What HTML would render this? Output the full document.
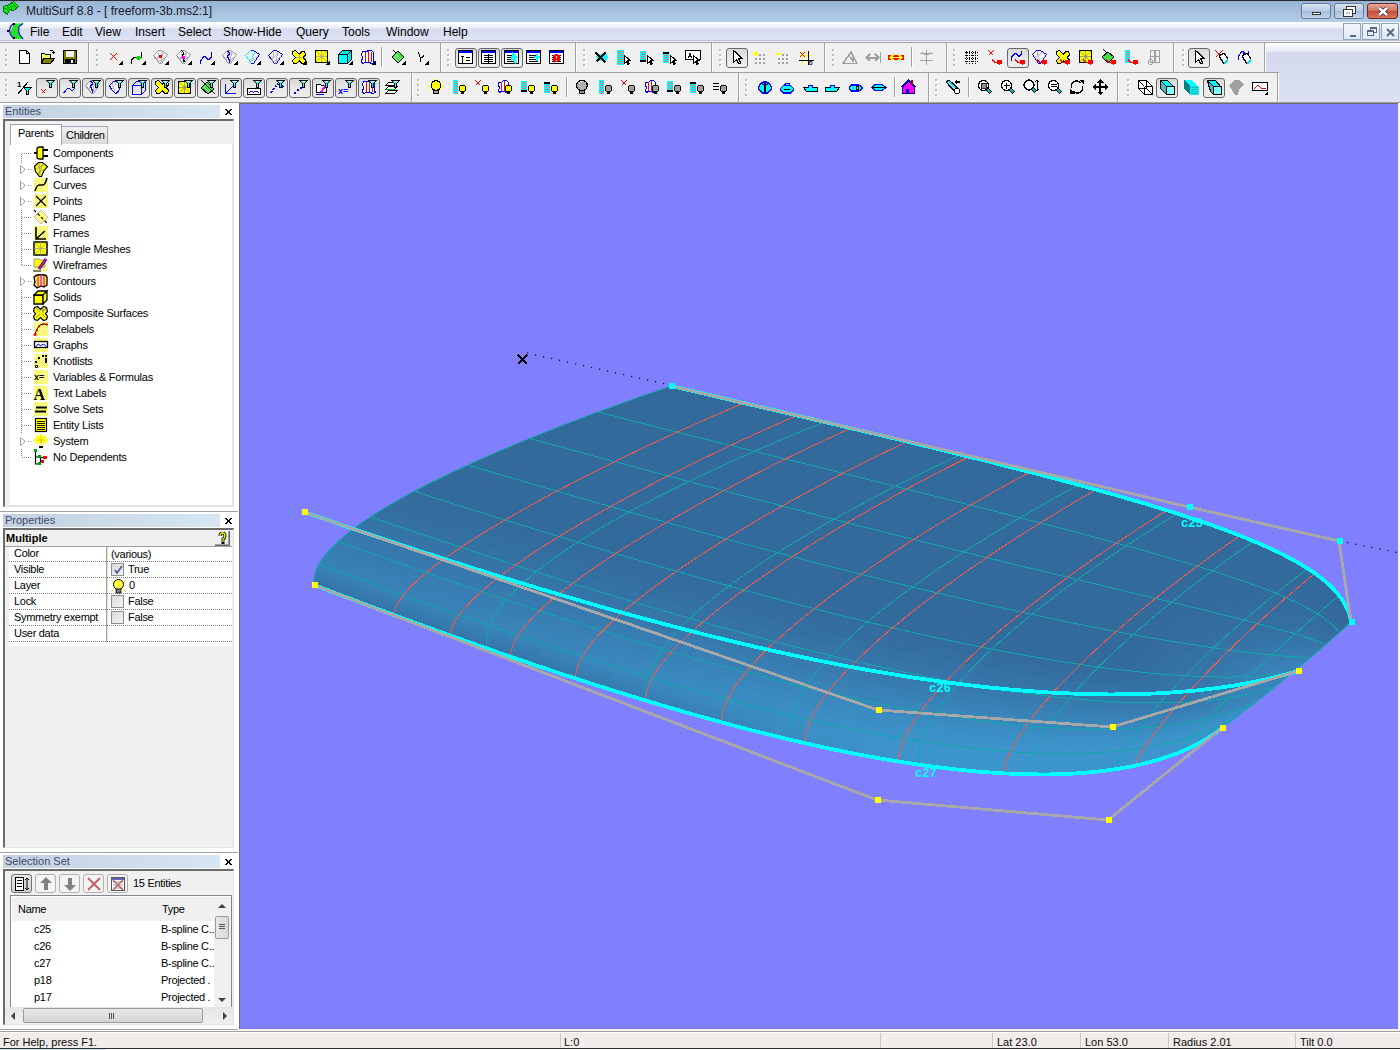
<!DOCTYPE html><html><head><meta charset="utf-8"><style>
*{margin:0;padding:0;box-sizing:border-box}
html,body{width:1400px;height:1050px;overflow:hidden;background:#f0f0f0;font-family:"Liberation Sans",sans-serif;font-size:12px;color:#000;position:relative}
.a{position:absolute}
#title{left:0;top:0;width:1400px;height:22px;background:linear-gradient(#98b4d4,#b4cde8);border-top:1px solid #2a2a2a}
#title .t{left:26px;top:3px;font-size:12px;color:#1a1a2a;white-space:nowrap}
#menu{left:0;top:22px;width:1400px;height:18px;background:linear-gradient(#ffffff 0,#e9edf7 6px,#d6dbee 7px,#dde3f4 18px)}
#menu span{position:absolute;top:3px;font-size:12px;color:#000}
#lines{left:0;top:40px;width:1400px;height:3px;background:linear-gradient(#b8c0d4 0,#b8c0d4 1px,#f4f4f4 1px,#f4f4f4 2px,#a0a0a0 2px)}
#rebar{left:0;top:43px;width:1400px;height:60px;background:linear-gradient(#ffffff 0,#e8ebf6 8px,#d5d9ee 10px,#dbe0f2 58px)}
.tbg{position:absolute;background:#f0f0f0}
.hl{position:absolute;left:0;height:1px;background:#a0a0a0}
.vl{position:absolute;width:1px;background:#a0a0a0;box-shadow:1px 0 0 #fff}
.sp{position:absolute;width:1px;height:20px;background:#a0a0a0;box-shadow:1px 0 0 #fff}
.gr{position:absolute;width:2px;height:2px;background:#bcbcbc;box-shadow:0 5px 0 #bcbcbc,0 10px 0 #bcbcbc,0 15px 0 #bcbcbc,1px 1px 0 #fff,1px 6px 0 #fff,1px 11px 0 #fff,1px 16px 0 #fff}
.pb{position:absolute;width:22px;height:20px;border:1px solid #676767;border-radius:3px;background:linear-gradient(#d8d8d8,#e6e6e6 45%,#eeeeee)}
#view{left:239px;top:103px;width:1159px;height:926px;background:#8080ff;border-left:1px solid #6d6d6d;border-top:1px solid #6d6d6d}
#vbg{left:239px;top:103px;width:1161px;height:928px;background:#f4f3ee}
#left{left:0;top:103px;width:239px;height:928px;background:#fff}
.ph{position:absolute;left:3px;width:217px;height:13px;background:linear-gradient(90deg,#c2d0e0,#d8e5f3);color:#3c4a6a;font-size:11px;line-height:13px;padding-left:2px}
.px{position:absolute;left:225px;width:7px;height:6px}
.fr{position:absolute;left:3px;width:231px;border-left:2px solid #6b6b6b;border-top:2px solid #6b6b6b;border-right:1px solid #e3e3e3;border-bottom:1px solid #e3e3e3;background:#f0f0f0}
.ti{position:absolute;left:53px;height:16px;line-height:16px;font-size:11px;letter-spacing:-0.22px;white-space:nowrap}
.dh{position:absolute;height:1px;background:repeating-linear-gradient(90deg,#808080 0 1px,transparent 1px 2px)}
.dv{position:absolute;width:1px;background:repeating-linear-gradient(#808080 0 1px,transparent 1px 2px)}
.t11{font-size:11px;letter-spacing:-0.3px;white-space:nowrap;position:absolute}
#status{left:0;top:1031px;width:1400px;height:19px;background:#f0edeb;border-top:1px solid #a0a0a0;box-shadow:inset 0 1px 0 #fff}
#status span{position:absolute;top:4px;font-size:11px;white-space:nowrap;color:#100808}
#status i{position:absolute;top:1px;width:1px;height:16px;background:#c8c8c8}
</style></head><body><svg width="0" height="0" style="position:absolute"><defs><pattern id="ck" width="2" height="2" patternUnits="userSpaceOnUse"><rect width="2" height="2" fill="#ffff00"/><rect width="1" height="1" fill="#fff"/><rect x="1" y="1" width="1" height="1" fill="#fff"/></pattern></defs></svg><div id="title" class="a">
<svg class="a" style="left:0;top:-1px" width="20" height="18" viewBox="0 0 20 18" shape-rendering="crispEdges"><path d="M3.5 6.5l6-2 4-3 5 5-5 4-4-1-2 5-4-3z" fill="#00ff00" stroke="#007000"/><path d="M6 5l3 4M9 4l3 5M12 2l3 6M4 9l12-4M6 12l3-4" stroke="#008000" stroke-width=".8"/></svg>
<div class="t a">MultiSurf 8.8 - [ freeform-3b.ms2:1]</div>
<div class="a" style="left:1301px;top:2px;width:30px;height:16px;border:1px solid #6a7a94;border-radius:3px;background:linear-gradient(#d7e3f1,#b7cbe3 50%,#a5bcd9 51%,#c2d5ec)"><div class="a" style="left:10px;top:8px;width:9px;height:3px;background:#fff;border:1px solid #333"></div></div>
<div class="a" style="left:1334px;top:2px;width:30px;height:16px;border:1px solid #6a7a94;border-radius:3px;background:linear-gradient(#d7e3f1,#b7cbe3 50%,#a5bcd9 51%,#c2d5ec)"><div class="a" style="left:12px;top:3px;width:8px;height:6px;border:2px solid #fff;outline:1px solid #333"></div><div class="a" style="left:9px;top:6px;width:8px;height:6px;border:2px solid #fff;outline:1px solid #333;background:#b7cbe3"></div></div>
<div class="a" style="left:1367px;top:2px;width:31px;height:16px;border:1px solid #6b2a22;border-radius:3px;background:linear-gradient(#e8a597,#d2705f 50%,#c24a33 51%,#d8775e)"><svg class="a" style="left:9px;top:2px" width="12" height="11"><path d="M2 2l8 7M10 2l-8 7" stroke="#333" stroke-width="4"/><path d="M2 2l8 7M10 2l-8 7" stroke="#fff" stroke-width="2.4"/></svg></div>
</div>
<div id="menu" class="a">
<svg class="a" style="left:6px;top:0" width="18" height="18" viewBox="0 0 18 18"><path d="M7.5 1.5h10l-4 3-.5 4.5 1 3.5 3.5 4.5h-10l-3-6z" fill="#00ff00"/><path d="M7.5 1.5l-3 3-1 4 1 4 3 4M17 1.5l-4 3-.5 4.5 1 3.5 3.5 4.5" fill="none" stroke="#0000ff" stroke-width="1.2"/><path d="M10 2v15M5 9h9M6 5h8M6 13h8" stroke="#909090" stroke-width=".7"/><rect x="7" y="1" width="2" height="2" fill="#000"/><rect x="1" y="8" width="2" height="2" fill="#000"/><rect x="7" y="15" width="2" height="2" fill="#000"/></svg>
<span style="left:30px">File</span><span style="left:62px">Edit</span><span style="left:95px">View</span><span style="left:135px">Insert</span><span style="left:178px">Select</span><span style="left:223px">Show-Hide</span><span style="left:296px">Query</span><span style="left:342px">Tools</span><span style="left:386px">Window</span><span style="left:443px">Help</span>
<div class="a" style="left:1343px;top:1px;width:18px;height:17px;border:1px solid #8fa3bd;background:linear-gradient(#f2f7fc,#dfe9f6)"><div class="a" style="left:6px;top:11px;width:6px;height:2px;background:#5a6a7e"></div></div>
<div class="a" style="left:1362px;top:1px;width:18px;height:17px;border:1px solid #8fa3bd;background:linear-gradient(#f2f7fc,#dfe9f6)"><div class="a" style="left:7px;top:3px;width:7px;height:6px;border:1px solid #5a6a7e;border-top-width:2px"></div><div class="a" style="left:4px;top:6px;width:7px;height:6px;border:1px solid #5a6a7e;border-top-width:2px;background:#e6eaf5"></div></div>
<div class="a" style="left:1381px;top:1px;width:18px;height:17px;border:1px solid #8fa3bd;background:linear-gradient(#f2f7fc,#dfe9f6)"><svg class="a" style="left:4px;top:4px" width="9" height="9"><path d="M1 1l7 7M8 1l-7 7" stroke="#5a6a7e" stroke-width="2"/></svg></div>
</div>
<div id="lines" class="a"></div>
<div id="rebar" class="a"></div>
<div class="tbg" style="left:0;top:43px;width:1264px;height:29px"></div><div class="tbg" style="left:0;top:73px;width:1278px;height:29px"></div><div class="hl" style="top:72px;width:1279px"></div><div class="hl" style="top:102px;width:1400px"></div><div class="gr" style="left:5px;top:49px"></div><svg class="a" style="left:16px;top:49px" width="16" height="16" viewBox="0 0 16 16" shape-rendering="crispEdges"><path d="M3.5 1.5h7l3 3v10h-10z" fill="#fff" stroke="#000" stroke-width="1.3"/><path d="M10.5 1.5v3h3" fill="none" stroke="#000"/></svg><svg class="a" style="left:40px;top:49px" width="16" height="16" viewBox="0 0 16 16" shape-rendering="crispEdges"><path d="M1.5 4.5h3l1 1h5v9h-9z" fill="#ffff60" stroke="#000" stroke-width="1.2"/><path d="M3.5 9.5h11l-4 5h-9z" fill="#808000" stroke="#000" stroke-width="1.2"/><path d="M9.5 2.5q2-2 4 0v2" fill="none" stroke="#000" stroke-width="1.2"/><path d="M12 3h3l-1.5 2z" fill="#000"/></svg><svg class="a" style="left:62px;top:49px" width="16" height="16" viewBox="0 0 16 16" shape-rendering="crispEdges"><rect x="1.5" y="1.5" width="13" height="13" fill="#808000" stroke="#000" stroke-width="1.3"/><rect x="4" y="2" width="8" height="6" fill="#f0f0f0"/><rect x="3" y="10" width="10" height="5" fill="#000"/><rect x="9" y="11" width="2" height="3" fill="#fff"/></svg><div class="vl" style="left:88px;top:43px;height:29px"></div><div class="gr" style="left:96px;top:49px"></div><svg class="a" style="left:107px;top:49px" width="16" height="16" viewBox="0 0 16 16" shape-rendering="crispEdges"><path d="M3 4l7 7M10 4l-7 7" stroke="#ff0000" stroke-width="1.2"/><path d="M11 16h5v-5z" fill="#000"/></svg><svg class="a" style="left:130px;top:49px" width="16" height="16" viewBox="0 0 16 16" shape-rendering="crispEdges"><path d="M1.5 14.5v-3l2-3h2l2 2h2l2-3v-5" fill="none" stroke="#000" stroke-width="1.3"/><circle cx="8.5" cy="9" r="2.2" fill="#00e000"/><path d="M11 16h5v-5z" fill="#000"/></svg><svg class="a" style="left:153px;top:49px" width="16" height="16" viewBox="0 0 16 16" shape-rendering="crispEdges"><path d="M0.5 6.5 L5.5 1.5 H8.5 L14.5 5.5 L8.5 14.5 H6.5 Z" fill="#f4f4f4" stroke="#999"/><path d="M2.5 9.5 L10.5 3.5 M4.5 12.5 L12.5 7.5 M5.5 2.5 L4.5 12.5 M9.5 2.5 L7.5 14.5" fill="none" stroke="#aaa" stroke-width=".8"/><rect x="6" y="6" width="3" height="3" fill="#ff0000"/><path d="M11 16h5v-5z" fill="#000"/></svg><svg class="a" style="left:176px;top:49px" width="16" height="16" viewBox="0 0 16 16" shape-rendering="crispEdges"><path d="M0.5 6.5 L5.5 1.5 H8.5 L14.5 5.5 L8.5 14.5 H6.5 Z" fill="#f4f4f4" stroke="#999"/><path d="M2.5 9.5 L10.5 3.5 M4.5 12.5 L12.5 7.5 M5.5 2.5 L4.5 12.5 M9.5 2.5 L7.5 14.5" fill="none" stroke="#aaa" stroke-width=".8"/><path d="M5.5 1.5l2 2-1 4 2 6" fill="none" stroke="#000" stroke-width="1.3"/><circle cx="7.5" cy="8.5" r="2" fill="#ff00ff"/><path d="M11 16h5v-5z" fill="#000"/></svg><svg class="a" style="left:199px;top:49px" width="16" height="16" viewBox="0 0 16 16" shape-rendering="crispEdges"><path d="M1.5 14.5v-2l3-5h2l2 3h2l2-3v-5" fill="none" stroke="#0000ff" stroke-width="1.3"/><path d="M11 16h5v-5z" fill="#000"/></svg><svg class="a" style="left:222px;top:49px" width="16" height="16" viewBox="0 0 16 16" shape-rendering="crispEdges"><path d="M0.5 6.5 L5.5 1.5 H8.5 L14.5 5.5 L8.5 14.5 H6.5 Z" fill="#f4f4f4" stroke="#999"/><path d="M2.5 9.5 L10.5 3.5 M4.5 12.5 L12.5 7.5 M5.5 2.5 L4.5 12.5 M9.5 2.5 L7.5 14.5" fill="none" stroke="#aaa" stroke-width=".8"/><path d="M4.5 2.5h2l1 2-2 3 2 4v2" fill="none" stroke="#0000ff" stroke-width="1.3"/><path d="M11 16h5v-5z" fill="#000"/></svg><svg class="a" style="left:245px;top:49px" width="16" height="16" viewBox="0 0 16 16" shape-rendering="crispEdges"><path d="M0.5 6.5 L5.5 1.5 H8.5 L14.5 5.5 L8.5 14.5 H6.5 Z" fill="#f4f4f4" stroke="#0000ff"/><path d="M0.5 6.5L5.5 1.5M0.5 6.5L6.5 14.5" stroke="#00ffff"/><path d="M9.5 3.5L5.5 13.5" stroke="#00ffff"/><path d="M4.5 12.5L12.5 7.5" stroke="#aaa" stroke-width=".8"/><path d="M11 16h5v-5z" fill="#000"/></svg><svg class="a" style="left:268px;top:49px" width="16" height="16" viewBox="0 0 16 16" shape-rendering="crispEdges"><path d="M0.5 6.5 L5.5 1.5 H8.5 L14.5 5.5 L8.5 14.5 H6.5 Z" fill="#f4f4f4" stroke="#0000ff"/><path d="M2.5 9.5 L10.5 3.5 M4.5 12.5 L12.5 7.5 M5.5 2.5 L4.5 12.5 M9.5 2.5 L7.5 14.5" fill="none" stroke="#aaa" stroke-width=".8"/><path d="M11 16h5v-5z" fill="#000"/></svg><svg class="a" style="left:291px;top:49px" width="16" height="16" viewBox="0 0 16 16" shape-rendering="crispEdges"><path d="M1.5 2.5l3-1 4 4 2-3h3l1 3-2 3 2 3-1 3h-3l-2-3-3 3h-3l-1-3 3-3-3-3z" fill="#ffff00" stroke="#000" stroke-width="1.2"/><path d="M8 5v6M5 8h6" stroke="#999" stroke-width=".8"/><path d="M11 16h5v-5z" fill="#000"/></svg><svg class="a" style="left:314px;top:49px" width="16" height="16" viewBox="0 0 16 16" shape-rendering="crispEdges"><rect x="1.5" y="1.5" width="12" height="12" fill="#ffff00" stroke="#000" stroke-width="1.3"/><path d="M2 2l11 11M13 2L2 13M7.5 2v11M2 7.5h11" stroke="#a0a0a0" stroke-width=".7"/><path d="M11 16h5v-5z" fill="#000"/></svg><svg class="a" style="left:337px;top:49px" width="16" height="16" viewBox="0 0 16 16" shape-rendering="crispEdges"><path d="M1.5 5.5h9v9h-9z" fill="#00ffff" stroke="#000" stroke-width="1.3"/><path d="M1.5 5.5l4-4h9l-4 4zM10.5 5.5l4-4v9l-4 4z" fill="#00e8e8" stroke="#000" stroke-width="1.3"/><path d="M11 16h5v-5z" fill="#000"/></svg><svg class="a" style="left:360px;top:49px" width="16" height="16" viewBox="0 0 16 16" shape-rendering="crispEdges"><path d="M2.5 2.5h4l2-1h3l2 2v8l1 2-3 1-2-1h-4l-3 1-1-2 1-4-1-3z" fill="#fff" stroke="#0000ff" stroke-width="1.2"/><path d="M5.5 3v10M8.5 2v11M11.5 3v10" stroke="#ff0000" stroke-width="1.3"/><path d="M11 16h5v-5z" fill="#000"/></svg><svg class="a" style="left:390px;top:49px" width="16" height="16" viewBox="0 0 16 16" shape-rendering="crispEdges"><path d="M8 2l6 6-6 6-6-6z" fill="#40e040" stroke="#000"/><path d="M5 6l5 5M6 4.5l5 5M4 7.5l5 5" stroke="#c0ffc0" stroke-width=".8"/><path d="M3 1l3 3" stroke="#000"/><path d="M11 16h5v-5z" fill="#000"/></svg><svg class="a" style="left:413px;top:49px" width="16" height="16" viewBox="0 0 16 16" shape-rendering="crispEdges"><path d="M5.5 3.5l2 6 4-3M7.5 9.5v3" stroke="#000" stroke-width="1.2" fill="none"/><path d="M11 16h5v-5z" fill="#000"/></svg><div class="sp" style="left:381px;top:47px"></div><div class="vl" style="left:440px;top:43px;height:29px"></div><div class="gr" style="left:447px;top:49px"></div><div class="pb" style="left:455px;top:48px"></div><svg class="a" style="left:458px;top:49px" width="16" height="16" viewBox="0 0 16 16" shape-rendering="crispEdges"><rect x="0.5" y="1.5" width="14" height="13" fill="#fff" stroke="#000" stroke-width="1.2"/><rect x="1" y="2" width="13" height="2" fill="#0000ff"/><path d="M4.5 7v7M3 7.5h3M5 11h2M8 8.5h4M8 11.5h4" stroke="#000"/><circle cx="6" cy="11" r="1" fill="#ff0"/></svg><div class="pb" style="left:478px;top:48px"></div><svg class="a" style="left:481px;top:49px" width="16" height="16" viewBox="0 0 16 16" shape-rendering="crispEdges"><rect x="0.5" y="1.5" width="14" height="13" fill="#fff" stroke="#000" stroke-width="1.2"/><rect x="1" y="2" width="13" height="2" fill="#0000ff"/><path d="M3 6.5h9M3 8.5h9M3 10.5h9M3 12.5h9M7.5 5v9" stroke="#000"/></svg><div class="pb" style="left:501px;top:48px"></div><svg class="a" style="left:504px;top:49px" width="16" height="16" viewBox="0 0 16 16" shape-rendering="crispEdges"><rect x="0.5" y="1.5" width="14" height="13" fill="#fff" stroke="#000" stroke-width="1.2"/><rect x="1" y="2" width="13" height="2" fill="#0000ff"/><path d="M3 6.5h9M3 8.5h9M3 10.5h9M3 12.5h9" stroke="#000"/><path d="M8 2l6 7-3 0 2 5-2 1-2-5-2 2z" fill="#00ffff"/></svg><svg class="a" style="left:526px;top:49px" width="16" height="16" viewBox="0 0 16 16" shape-rendering="crispEdges"><rect x="0.5" y="1.5" width="14" height="13" fill="#fff" stroke="#000" stroke-width="1.2"/><rect x="1" y="2" width="13" height="2" fill="#0000ff"/><path d="M3 6.5h9M3 8.5h9M3 10.5h9M3 12.5h9" stroke="#000"/><path d="M8 7h2V5h2v2h2v2h-2v3h-2V9H8z" fill="#00ffff"/></svg><svg class="a" style="left:549px;top:49px" width="16" height="16" viewBox="0 0 16 16" shape-rendering="crispEdges"><rect x="0.5" y="1.5" width="14" height="13" fill="#fff" stroke="#000" stroke-width="1.2"/><rect x="1" y="2" width="13" height="2" fill="#0000ff"/><path d="M3 6.5h9M3 8.5h9M3 10.5h9M3 12.5h9" stroke="#000"/><circle cx="7.5" cy="9" r="3.8" fill="#ff0000"/><path d="M7.5 6.5v2.5M7.5 10.5v1" stroke="#fff" stroke-width="1.5"/></svg><div class="vl" style="left:575px;top:43px;height:29px"></div><div class="gr" style="left:583px;top:49px"></div><svg class="a" style="left:594px;top:49px" width="16" height="16" viewBox="0 0 16 16" shape-rendering="crispEdges"><path d="M2 7l3-2h3l2-1 3 1 1 3-1 3-3 1-2-1-3 1-2-2z" fill="#00ffff"/><path d="M1.5 3.5l10 10M11.5 3.5l-9 9" stroke="#000" stroke-width="1.6"/></svg><svg class="a" style="left:616px;top:49px" width="16" height="16" viewBox="0 0 16 16" shape-rendering="crispEdges"><rect x="1" y="1" width="7" height="15" fill="#00ffff"/><rect x="2" y="2" width="6" height="1" fill="#a09898"/><rect x="2" y="4" width="6" height="1" fill="#a09898"/><rect x="2" y="6" width="6" height="1" fill="#a09898"/><rect x="2" y="8" width="6" height="1" fill="#a09898"/><rect x="2" y="10" width="6" height="1" fill="#a09898"/><rect x="2" y="12" width="6" height="1" fill="#a09898"/><rect x="2" y="14" width="6" height="1" fill="#a09898"/><path d="M8.5 6.5v8l2-2 1.5 3 1.2-.6-1.5-3h3z" fill="#fff" stroke="#000" stroke-width="1.1"/></svg><svg class="a" style="left:639px;top:49px" width="16" height="16" viewBox="0 0 16 16" shape-rendering="crispEdges"><rect x="1" y="2" width="6" height="11" fill="#00ffff"/><rect x="2" y="3" width="5" height="1" fill="#a09898"/><rect x="2" y="5" width="5" height="1" fill="#a09898"/><rect x="2" y="7" width="5" height="1" fill="#a09898"/><rect x="2" y="9" width="5" height="1" fill="#a09898"/><rect x="2" y="11" width="5" height="1" fill="#a09898"/><rect x="1" y="11" width="6" height="2" fill="#000"/><path d="M8.5 6.5v8l2-2 1.5 3 1.2-.6-1.5-3h3z" fill="#fff" stroke="#000" stroke-width="1.1"/></svg><svg class="a" style="left:662px;top:49px" width="16" height="16" viewBox="0 0 16 16" shape-rendering="crispEdges"><rect x="1" y="3" width="6" height="11" fill="#00ffff"/><rect x="2" y="4" width="5" height="1" fill="#a09898"/><rect x="2" y="6" width="5" height="1" fill="#a09898"/><rect x="2" y="8" width="5" height="1" fill="#a09898"/><rect x="2" y="10" width="5" height="1" fill="#a09898"/><rect x="2" y="12" width="5" height="1" fill="#a09898"/><rect x="1" y="3" width="6" height="2" fill="#000"/><path d="M8.5 6.5v8l2-2 1.5 3 1.2-.6-1.5-3h3z" fill="#fff" stroke="#000" stroke-width="1.1"/></svg><svg class="a" style="left:685px;top:49px" width="16" height="16" viewBox="0 0 16 16" shape-rendering="crispEdges"><rect x="0.5" y="1.5" width="15" height="9" fill="#fff" stroke="#000" stroke-width="1.2"/><path d="M3 9l2-5 2 5M3.5 7.5h3" fill="none" stroke="#000" stroke-width=".9"/><path d="M8.5 6.5v8l2-2 1.5 3 1.2-.6-1.5-3h3z" fill="#fff" stroke="#000" stroke-width="1.1"/></svg><div class="vl" style="left:711px;top:43px;height:29px"></div><div class="gr" style="left:719px;top:49px"></div><div class="pb" style="left:726px;top:48px"></div><svg class="a" style="left:729px;top:49px" width="16" height="16" viewBox="0 0 16 16" shape-rendering="crispEdges"><path d="M4.5 1.5v12l3-3 2.5 4.5 2-1-2.5-4.5h4z" fill="#fff" stroke="#000" stroke-width="1.3"/></svg><svg class="a" style="left:752px;top:49px" width="16" height="16" viewBox="0 0 16 16" shape-rendering="crispEdges"><g fill="#a0a0a0"><rect x="7" y="5" width="2" height="2"/><rect x="11" y="5" width="2" height="2"/><rect x="3" y="9" width="2" height="2"/><rect x="7" y="9" width="2" height="2"/><rect x="11" y="9" width="2" height="2"/><rect x="3" y="13" width="2" height="2"/><rect x="7" y="13" width="2" height="2"/><rect x="11" y="13" width="2" height="2"/></g><path d="M1 4.5h5M3.5 2v5" stroke="#ffff00" stroke-width="2"/></svg><svg class="a" style="left:775px;top:49px" width="16" height="16" viewBox="0 0 16 16" shape-rendering="crispEdges"><g fill="#a0a0a0"><rect x="7" y="5" width="2" height="2"/><rect x="11" y="5" width="2" height="2"/><rect x="3" y="9" width="2" height="2"/><rect x="7" y="9" width="2" height="2"/><rect x="11" y="9" width="2" height="2"/><rect x="3" y="13" width="2" height="2"/><rect x="7" y="13" width="2" height="2"/><rect x="11" y="13" width="2" height="2"/></g><path d="M1 4.5h5" stroke="#ffff00" stroke-width="2"/></svg><svg class="a" style="left:798px;top:49px" width="16" height="16" viewBox="0 0 16 16" shape-rendering="crispEdges"><path d="M1 6.5h13M4.5 2v14" stroke="#ffff00" stroke-width="1.2"/><path d="M1 11.5h15M10.5 2v14" stroke="#000" stroke-width="1.2"/><path d="M2 3l5 5M7 3L2 8" stroke="#ff0000"/><text x="11" y="16" font-size="5" font-weight="bold" font-family="Liberation Sans">D</text></svg><div class="vl" style="left:824px;top:43px;height:29px"></div><div class="gr" style="left:832px;top:49px"></div><svg class="a" style="left:842px;top:49px" width="16" height="16" viewBox="0 0 16 16" shape-rendering="crispEdges"><path d="M1 14.5h14L9 3z" fill="none" stroke="#a0a0a0" stroke-width="1.6"/><path d="M7 7l6 3-2 4" fill="#a0a0a0"/></svg><svg class="a" style="left:865px;top:49px" width="16" height="16" viewBox="0 0 16 16" shape-rendering="crispEdges"><path d="M2 8.5h11M5 5l-3.5 3.5 3.5 3.5M10 5l3.5 3.5-3.5 3.5M15.5 3v11" stroke="#a0a0a0" stroke-width="2" fill="none"/></svg><svg class="a" style="left:888px;top:49px" width="16" height="16" viewBox="0 0 16 16" shape-rendering="crispEdges"><rect x="0" y="6" width="16" height="5" fill="#ff0000"/><path d="M3 8.5h10M5.5 5.5l-3 3 3 3M10.5 5.5l3 3-3 3" stroke="#ffff00" stroke-width="1.8" fill="none"/></svg><svg class="a" style="left:918px;top:49px" width="16" height="16" viewBox="0 0 16 16" shape-rendering="crispEdges"><path d="M8.5 1v15M2 4.5h13M2 11.5h13M4 3q4 6 9 0" stroke="#a0a0a0" fill="none" stroke-width="1.2"/></svg><div class="sp" style="left:911px;top:47px"></div><div class="vl" style="left:946px;top:43px;height:29px"></div><div class="gr" style="left:953px;top:49px"></div><svg class="a" style="left:963px;top:49px" width="16" height="16" viewBox="0 0 16 16" shape-rendering="crispEdges"><path d="M3.5 2v13M6.5 2v13M9.5 2v13M12.5 2v13M2 3.5h13M2 6.5h13M2 9.5h13M2 12.5h13" stroke="#000" stroke-dasharray="1 1"/><g fill="#000"><rect x="3" y="3" width="1" height="1"/></g></svg><svg class="a" style="left:987px;top:49px" width="16" height="16" viewBox="0 0 16 16" shape-rendering="crispEdges"><path d="M1.5 1.5l5 5M6.5 1.5l-5 5" stroke="#ff0000"/><path d="M5.5 10.5q1 3 4 3" fill="none" stroke="#ff0000"/><ellipse cx="12.5" cy="13" rx="3" ry="2.5" fill="#ff0000"/></svg><div class="pb" style="left:1007px;top:48px"></div><svg class="a" style="left:1010px;top:49px" width="16" height="16" viewBox="0 0 16 16" shape-rendering="crispEdges"><path d="M1.5 11.5v-3l3-4h2l1 2 2 1 2-3v-3" fill="none" stroke="#0000ff" stroke-width="1.3"/><path d="M5.5 10.5q1 3 4 3" fill="none" stroke="#ff0000"/><ellipse cx="12.5" cy="13" rx="3" ry="2.5" fill="#ff0000"/></svg><svg class="a" style="left:1032px;top:49px" width="16" height="16" viewBox="0 0 16 16" shape-rendering="crispEdges"><path d="M0.5 5.5L4.5 1.5H8.5L14.5 5.5L8.5 14.5H6.5Z" fill="#f4f4f4" stroke="#0000ff"/><path d="M3 8l8-5M5 2l3 12" stroke="#aaa" stroke-width=".8"/><path d="M5.5 10.5q1 3 4 3" fill="none" stroke="#ff0000"/><ellipse cx="12.5" cy="13" rx="3" ry="2.5" fill="#ff0000"/></svg><svg class="a" style="left:1055px;top:49px" width="16" height="16" viewBox="0 0 16 16" shape-rendering="crispEdges"><path d="M1.5 2.5l3-1 4 4 2-3h3l1 3-2 3 2 3-1 3h-3l-2-3-3 3h-3l-1-3 3-3-3-3z" fill="#ffff00" stroke="#000" stroke-width="1.2"/><path d="M5.5 10.5q1 3 4 3" fill="none" stroke="#ff0000"/><ellipse cx="12.5" cy="13" rx="3" ry="2.5" fill="#ff0000"/></svg><svg class="a" style="left:1078px;top:49px" width="16" height="16" viewBox="0 0 16 16" shape-rendering="crispEdges"><rect x="1.5" y="1.5" width="12" height="12" fill="#ffff00" stroke="#000" stroke-width="1.4"/><path d="M2 2l11 11M13 2L2 13M7.5 2v11M2 7.5h11" stroke="#808080" stroke-width=".7"/><path d="M5.5 10.5q1 3 4 3" fill="none" stroke="#ff0000"/><ellipse cx="12.5" cy="13" rx="3" ry="2.5" fill="#ff0000"/></svg><svg class="a" style="left:1101px;top:49px" width="16" height="16" viewBox="0 0 16 16" shape-rendering="crispEdges"><path d="M7 3l6 5-6 6-6-6z" fill="#40e040" stroke="#000"/><path d="M2 0l4 4" stroke="#000"/><path d="M5.5 10.5q1 3 4 3" fill="none" stroke="#ff0000"/><ellipse cx="12.5" cy="13" rx="3" ry="2.5" fill="#ff0000"/></svg><svg class="a" style="left:1123px;top:49px" width="16" height="16" viewBox="0 0 16 16" shape-rendering="crispEdges"><rect x="2" y="1" width="5" height="13" fill="#00ffff"/><rect x="3" y="2" width="4" height="1" fill="#a09898"/><rect x="3" y="4" width="4" height="1" fill="#a09898"/><rect x="3" y="6" width="4" height="1" fill="#a09898"/><rect x="3" y="8" width="4" height="1" fill="#a09898"/><rect x="3" y="10" width="4" height="1" fill="#a09898"/><rect x="3" y="12" width="4" height="1" fill="#a09898"/><path d="M5.5 10.5q1 3 4 3" fill="none" stroke="#ff0000"/><ellipse cx="12.5" cy="13" rx="3" ry="2.5" fill="#ff0000"/></svg><svg class="a" style="left:1146px;top:49px" width="16" height="16" viewBox="0 0 16 16" shape-rendering="crispEdges"><path d="M4.5 1.5h9v12h-9zM9 2v11M5 7.5h8" stroke="#a0a0a0" fill="none" stroke-width="1.2"/><circle cx="4.5" cy="13" r="2.5" fill="none" stroke="#a0a0a0"/></svg><div class="vl" style="left:1173px;top:43px;height:29px"></div><div class="gr" style="left:1182px;top:49px"></div><div class="pb" style="left:1188px;top:48px"></div><svg class="a" style="left:1191px;top:49px" width="16" height="16" viewBox="0 0 16 16" shape-rendering="crispEdges"><path d="M4.5 1.5v12l3-3 2.5 4.5 2-1-2.5-4.5h4z" fill="#fff" stroke="#000" stroke-width="1.3"/></svg><svg class="a" style="left:1214px;top:49px" width="16" height="16" viewBox="0 0 16 16" shape-rendering="crispEdges"><path d="M1.5 1.5l7 7M8.5 1.5l-7 7" stroke="#ff0000" stroke-width="1.1"/><path d="M5 7l5-3 4 6-4 5z" fill="#fff" stroke="#000" stroke-width="1.2"/><path d="M9 14l5-5v3l-3 3z" fill="#00e0e0"/></svg><svg class="a" style="left:1237px;top:49px" width="16" height="16" viewBox="0 0 16 16" shape-rendering="crispEdges"><path d="M1.5 10.5v-3l3-5h2l1 3 2 1 2-3v-2" stroke="#0000ff" stroke-width="1.3" fill="none"/><path d="M5 7l5-3 4 6-4 5z" fill="#fff" stroke="#000" stroke-width="1.2"/><path d="M9 14l5-5v3l-3 3z" fill="#00e0e0"/></svg><div class="vl" style="left:1264px;top:43px;height:29px"></div><div class="gr" style="left:5px;top:79px"></div><svg class="a" style="left:16px;top:79px" width="16" height="16" viewBox="0 0 16 16" shape-rendering="crispEdges"><text x="1" y="8" font-size="8" font-weight="bold" font-family="Liberation Sans">1</text><path d="M1.5 15.5L11.5 3.5" stroke="#000" stroke-width="1.1"/><path d="M7.5 8.5h8l-3 3v4h-2v-4z" fill="#00ffff" stroke="#000" stroke-width="1.4"/></svg><div class="pb" style="left:36px;top:78px"></div><svg class="a" style="left:39px;top:79px" width="16" height="16" viewBox="0 0 16 16" shape-rendering="crispEdges"><path d="M2.5 10.5l4 4M6.5 10.5l-4 4" stroke="#ff0000"/><path d="M7.5 1.5h8l-3 3v4h-2v-4z" fill="#00ffff" stroke="#000" stroke-width="1.4"/><path d="M10 2.5h3" stroke="#fff"/></svg><div class="pb" style="left:59px;top:78px"></div><svg class="a" style="left:62px;top:79px" width="16" height="16" viewBox="0 0 16 16" shape-rendering="crispEdges"><path d="M1.5 14.5l2-3 2-2h2l2 2h1l2-2v-3" fill="none" stroke="#0000ff" stroke-width="1.3"/><path d="M7.5 1.5h8l-3 3v4h-2v-4z" fill="#00ffff" stroke="#000" stroke-width="1.4"/><path d="M10 2.5h3" stroke="#fff"/></svg><div class="pb" style="left:82px;top:78px"></div><svg class="a" style="left:85px;top:79px" width="16" height="16" viewBox="0 0 16 16" shape-rendering="crispEdges"><path d="M0.5 6.5 L5.5 1.5 H8.5 L14.5 5.5 L8.5 14.5 H6.5 Z" fill="#f4f4f4" stroke="#999"/><path d="M2.5 9.5 L10.5 3.5 M4.5 12.5 L12.5 7.5 M5.5 2.5 L4.5 12.5 M9.5 2.5 L7.5 14.5" fill="none" stroke="#aaa" stroke-width=".8"/><path d="M4.5 2.5h2l1 2-2 3 2 4v2" fill="none" stroke="#0000ff" stroke-width="1.3"/><path d="M7.5 1.5h8l-3 3v4h-2v-4z" fill="#00ffff" stroke="#000" stroke-width="1.4"/><path d="M10 2.5h3" stroke="#fff"/></svg><div class="pb" style="left:105px;top:78px"></div><svg class="a" style="left:108px;top:79px" width="16" height="16" viewBox="0 0 16 16" shape-rendering="crispEdges"><path d="M1.5 6.5l4-4h5l2 4-2 6-3 2-4-4z" fill="#f4f4f4" stroke="#0000ff" stroke-width="1.2"/><path d="M4 4l3 9M9 3L4 10" stroke="#aaa" stroke-width=".8"/><path d="M7.5 1.5h8l-3 3v4h-2v-4z" fill="#00ffff" stroke="#000" stroke-width="1.4"/><path d="M10 2.5h3" stroke="#fff"/></svg><div class="pb" style="left:128px;top:78px"></div><svg class="a" style="left:131px;top:79px" width="16" height="16" viewBox="0 0 16 16" shape-rendering="crispEdges"><path d="M1.5 6.5h9v9h-9zM1.5 6.5l4-4h9l-4 4M10.5 15.5l4-4v-9" fill="none" stroke="#0000ff" stroke-width="1.2"/><path d="M7.5 1.5h8l-3 3v4h-2v-4z" fill="#00ffff" stroke="#000" stroke-width="1.4"/><path d="M10 2.5h3" stroke="#fff"/></svg><div class="pb" style="left:151px;top:78px"></div><svg class="a" style="left:154px;top:79px" width="16" height="16" viewBox="0 0 16 16" shape-rendering="crispEdges"><path d="M1.5 2.5l3-1 4 4 2-3h3l1 3-2 3 2 3-1 3h-3l-2-3-3 3h-3l-1-3 3-3-3-3z" fill="#ffff00" stroke="#000" stroke-width="1.2"/><path d="M7.5 1.5h8l-3 3v4h-2v-4z" fill="#00ffff" stroke="#000" stroke-width="1.4"/><path d="M10 2.5h3" stroke="#fff"/></svg><div class="pb" style="left:174px;top:78px"></div><svg class="a" style="left:177px;top:79px" width="16" height="16" viewBox="0 0 16 16" shape-rendering="crispEdges"><rect x="1.5" y="2.5" width="12" height="12" fill="#ffff00" stroke="#000" stroke-width="1.4"/><path d="M2 3l11 11M13 3L2 14M7.5 3v11M2 8.5h11" stroke="#808080" stroke-width=".7"/><path d="M7.5 1.5h8l-3 3v4h-2v-4z" fill="#00ffff" stroke="#000" stroke-width="1.4"/><path d="M10 2.5h3" stroke="#fff"/></svg><div class="pb" style="left:197px;top:78px"></div><svg class="a" style="left:200px;top:79px" width="16" height="16" viewBox="0 0 16 16" shape-rendering="crispEdges"><path d="M7 3l7 7-6 5-7-6z" fill="#40e040" stroke="#000"/><path d="M4 8l5 5M6 6l5 5" stroke="#c0ffc0" stroke-width=".8"/><path d="M1 1l14 14" stroke="#000" stroke-width=".9"/><path d="M7.5 1.5h8l-3 3v4h-2v-4z" fill="#00ffff" stroke="#000" stroke-width="1.4"/><path d="M10 2.5h3" stroke="#fff"/></svg><div class="pb" style="left:220px;top:78px"></div><svg class="a" style="left:223px;top:79px" width="16" height="16" viewBox="0 0 16 16" shape-rendering="crispEdges"><path d="M2.5 4.5v10h10M2.5 14.5l7-7" stroke="#0000ff" stroke-width="1.2" fill="none"/><path d="M7.5 1.5h8l-3 3v4h-2v-4z" fill="#00ffff" stroke="#000" stroke-width="1.4"/><path d="M10 2.5h3" stroke="#fff"/></svg><div class="pb" style="left:243px;top:78px"></div><svg class="a" style="left:246px;top:79px" width="16" height="16" viewBox="0 0 16 16" shape-rendering="crispEdges"><rect x="1.5" y="9.5" width="13" height="6" fill="#fff" stroke="#000" stroke-width="1.3"/><path d="M2.5 14.5q3-4 5-1 3-3 6 1" fill="none" stroke="#0000ff"/><path d="M9.5 8.5v1" stroke="#000"/><path d="M7.5 1.5h8l-3 3v4h-2v-4z" fill="#00ffff" stroke="#000" stroke-width="1.4"/><path d="M10 2.5h3" stroke="#fff"/></svg><div class="pb" style="left:266px;top:78px"></div><svg class="a" style="left:269px;top:79px" width="16" height="16" viewBox="0 0 16 16" shape-rendering="crispEdges"><path d="M2 14l1-2M4 11l1-2M6 8l1-1M8 6l1-1M12 7l2 2M14 7l-2 2" stroke="#0000ff" stroke-width="1.8"/><path d="M7.5 1.5h8l-3 3v4h-2v-4z" fill="#00ffff" stroke="#000" stroke-width="1.4"/><path d="M10 2.5h3" stroke="#fff"/></svg><div class="pb" style="left:289px;top:78px"></div><svg class="a" style="left:292px;top:79px" width="16" height="16" viewBox="0 0 16 16" shape-rendering="crispEdges"><rect x="2" y="13" width="2" height="2" fill="#0000ff"/><rect x="5" y="10" width="2" height="2" fill="#0000ff"/><rect x="8" y="8" width="2" height="2" fill="#0000ff"/><path d="M7.5 1.5h8l-3 3v4h-2v-4z" fill="#00ffff" stroke="#000" stroke-width="1.4"/><path d="M10 2.5h3" stroke="#fff"/></svg><div class="pb" style="left:312px;top:78px"></div><svg class="a" style="left:315px;top:79px" width="16" height="16" viewBox="0 0 16 16" shape-rendering="crispEdges"><path d="M1.5 5.5h4l1 1h5v7h-10z" fill="#fff" stroke="#000"/><path d="M6 13l5-7" stroke="#ff00ff" stroke-width="2"/><path d="M1 15.5h8" stroke="#0000ff"/><path d="M7.5 1.5h8l-3 3v4h-2v-4z" fill="#00ffff" stroke="#000" stroke-width="1.4"/><path d="M10 2.5h3" stroke="#fff"/></svg><div class="pb" style="left:335px;top:78px"></div><svg class="a" style="left:338px;top:79px" width="16" height="16" viewBox="0 0 16 16" shape-rendering="crispEdges"><text x="0" y="15" font-size="9" font-weight="bold" fill="#0000ff" font-family="Liberation Sans">x=</text><path d="M7.5 1.5h8l-3 3v4h-2v-4z" fill="#00ffff" stroke="#000" stroke-width="1.4"/><path d="M10 2.5h3" stroke="#fff"/></svg><div class="pb" style="left:358px;top:78px"></div><svg class="a" style="left:361px;top:79px" width="16" height="16" viewBox="0 0 16 16" shape-rendering="crispEdges"><path d="M2.5 2.5h4l2-1h3l2 2v8l1 2-3 1-2-1h-4l-3 1-1-2 1-4-1-3z" fill="#fff" stroke="#0000ff" stroke-width="1.2"/><path d="M5.5 3v10M8.5 2v11M11.5 3v10" stroke="#ff0000" stroke-width="1.3"/><path d="M7.5 1.5h8l-3 3v4h-2v-4z" fill="#00ffff" stroke="#000" stroke-width="1.4"/><path d="M10 2.5h3" stroke="#fff"/></svg><svg class="a" style="left:384px;top:79px" width="16" height="16" viewBox="0 0 16 16" shape-rendering="crispEdges"><path d="M1.5 6.5l3-3h9l-3 3zM1.5 10.5l3-3h9l-3 3zM1.5 14.5l3-3h9l-3 3z" fill="#fff" stroke="#000"/><path d="M2 10.5h9" stroke="#00c000" stroke-width="1.5"/><path d="M7.5 1.5h8l-3 3v4h-2v-4z" fill="#00ffff" stroke="#000" stroke-width="1.4"/><path d="M10 2.5h3" stroke="#fff"/></svg><div class="vl" style="left:411px;top:73px;height:29px"></div><div class="gr" style="left:417px;top:79px"></div><svg class="a" style="left:428px;top:79px" width="16" height="16" viewBox="0 0 16 16" shape-rendering="crispEdges"><path d="M8 0v2M2 2l2 2M14 2l-2 2M0 7h2M14 7h2M2 12l2-2M14 12l-2-2" stroke="#ffff00" stroke-width="1.3"/><circle cx="8" cy="6.5" r="4.8" fill="#ffff00" stroke="#000" stroke-width="1.2"/><path d="M5.5 11.5h5v3h-5z" fill="#a0a0a0" stroke="#000"/></svg><svg class="a" style="left:451px;top:79px" width="16" height="16" viewBox="0 0 16 16" shape-rendering="crispEdges"><rect x="2" y="1" width="5" height="14" fill="#00ffff"/><rect x="3" y="2" width="4" height="1" fill="#a09898"/><rect x="3" y="4" width="4" height="1" fill="#a09898"/><rect x="3" y="6" width="4" height="1" fill="#a09898"/><rect x="3" y="8" width="4" height="1" fill="#a09898"/><rect x="3" y="10" width="4" height="1" fill="#a09898"/><rect x="3" y="12" width="4" height="1" fill="#a09898"/><rect x="3" y="14" width="4" height="1" fill="#a09898"/><circle cx="11.5" cy="9.5" r="3.2" fill="#ffff00" stroke="#000" stroke-width="1"/><rect x="10" y="12.5" width="3" height="2" fill="#000"/></svg><svg class="a" style="left:474px;top:79px" width="16" height="16" viewBox="0 0 16 16" shape-rendering="crispEdges"><path d="M1.5 1.5l5 5M6.5 1.5l-5 5" stroke="#ff0000"/><circle cx="11.5" cy="9.5" r="3.2" fill="#ffff00" stroke="#000" stroke-width="1"/><rect x="10" y="12.5" width="3" height="2" fill="#000"/></svg><svg class="a" style="left:497px;top:79px" width="16" height="16" viewBox="0 0 16 16" shape-rendering="crispEdges"><path d="M1.5 3.5h3l2-2h3l2 2v7l1 2-3 1-2-1h-3l-2 1-1-2 1-3-1-2z" fill="#fff" stroke="#0000ff" stroke-width="1.2"/><path d="M4.5 3v9M7.5 2v11" stroke="#ff0000" stroke-width="1.2"/><circle cx="11.5" cy="9.5" r="3.2" fill="#ffff00" stroke="#000" stroke-width="1"/><rect x="10" y="12.5" width="3" height="2" fill="#000"/></svg><svg class="a" style="left:520px;top:79px" width="16" height="16" viewBox="0 0 16 16" shape-rendering="crispEdges"><rect x="1" y="2" width="6" height="11" fill="#00ffff"/><rect x="2" y="3" width="5" height="1" fill="#a09898"/><rect x="2" y="5" width="5" height="1" fill="#a09898"/><rect x="2" y="7" width="5" height="1" fill="#a09898"/><rect x="2" y="9" width="5" height="1" fill="#a09898"/><rect x="2" y="11" width="5" height="1" fill="#a09898"/><rect x="1" y="11" width="6" height="2" fill="#000"/><circle cx="11.5" cy="9.5" r="3.2" fill="#ffff00" stroke="#000" stroke-width="1"/><rect x="10" y="12.5" width="3" height="2" fill="#000"/></svg><svg class="a" style="left:543px;top:79px" width="16" height="16" viewBox="0 0 16 16" shape-rendering="crispEdges"><rect x="1" y="3" width="6" height="11" fill="#00ffff"/><rect x="2" y="4" width="5" height="1" fill="#a09898"/><rect x="2" y="6" width="5" height="1" fill="#a09898"/><rect x="2" y="8" width="5" height="1" fill="#a09898"/><rect x="2" y="10" width="5" height="1" fill="#a09898"/><rect x="2" y="12" width="5" height="1" fill="#a09898"/><rect x="1" y="3" width="6" height="2" fill="#000"/><circle cx="11.5" cy="9.5" r="3.2" fill="#ffff00" stroke="#000" stroke-width="1"/><rect x="10" y="12.5" width="3" height="2" fill="#000"/></svg><svg class="a" style="left:574px;top:79px" width="16" height="16" viewBox="0 0 16 16" shape-rendering="crispEdges"><circle cx="8" cy="6.5" r="5.3" fill="#b0b0b0" stroke="#000" stroke-width="1.2"/><path d="M5.5 11.5h5v3h-5z" fill="#909090" stroke="#000"/><path d="M5 4q1-2 3-2" stroke="#fff" fill="none"/></svg><svg class="a" style="left:597px;top:79px" width="16" height="16" viewBox="0 0 16 16" shape-rendering="crispEdges"><rect x="2" y="1" width="5" height="14" fill="#00ffff"/><rect x="3" y="2" width="4" height="1" fill="#a09898"/><rect x="3" y="4" width="4" height="1" fill="#a09898"/><rect x="3" y="6" width="4" height="1" fill="#a09898"/><rect x="3" y="8" width="4" height="1" fill="#a09898"/><rect x="3" y="10" width="4" height="1" fill="#a09898"/><rect x="3" y="12" width="4" height="1" fill="#a09898"/><rect x="3" y="14" width="4" height="1" fill="#a09898"/><circle cx="11.5" cy="9.5" r="3.2" fill="#a0a0a0" stroke="#000" stroke-width="1"/><rect x="10" y="12.5" width="3" height="2" fill="#000"/></svg><svg class="a" style="left:620px;top:79px" width="16" height="16" viewBox="0 0 16 16" shape-rendering="crispEdges"><path d="M1.5 1.5l5 5M6.5 1.5l-5 5" stroke="#ff0000"/><circle cx="11.5" cy="9.5" r="3.2" fill="#a0a0a0" stroke="#000" stroke-width="1"/><rect x="10" y="12.5" width="3" height="2" fill="#000"/></svg><svg class="a" style="left:644px;top:79px" width="16" height="16" viewBox="0 0 16 16" shape-rendering="crispEdges"><path d="M1.5 3.5h3l2-2h3l2 2v7l1 2-3 1-2-1h-3l-2 1-1-2 1-3-1-2z" fill="#fff" stroke="#0000ff" stroke-width="1.2"/><path d="M4.5 3v9M7.5 2v11" stroke="#ff0000" stroke-width="1.2"/><circle cx="11.5" cy="9.5" r="3.2" fill="#a0a0a0" stroke="#000" stroke-width="1"/><rect x="10" y="12.5" width="3" height="2" fill="#000"/></svg><svg class="a" style="left:666px;top:79px" width="16" height="16" viewBox="0 0 16 16" shape-rendering="crispEdges"><rect x="1" y="2" width="6" height="11" fill="#00ffff"/><rect x="2" y="3" width="5" height="1" fill="#a09898"/><rect x="2" y="5" width="5" height="1" fill="#a09898"/><rect x="2" y="7" width="5" height="1" fill="#a09898"/><rect x="2" y="9" width="5" height="1" fill="#a09898"/><rect x="2" y="11" width="5" height="1" fill="#a09898"/><rect x="1" y="11" width="6" height="2" fill="#000"/><circle cx="11.5" cy="9.5" r="3.2" fill="#a0a0a0" stroke="#000" stroke-width="1"/><rect x="10" y="12.5" width="3" height="2" fill="#000"/></svg><svg class="a" style="left:689px;top:79px" width="16" height="16" viewBox="0 0 16 16" shape-rendering="crispEdges"><rect x="1" y="3" width="6" height="11" fill="#00ffff"/><rect x="2" y="4" width="5" height="1" fill="#a09898"/><rect x="2" y="6" width="5" height="1" fill="#a09898"/><rect x="2" y="8" width="5" height="1" fill="#a09898"/><rect x="2" y="10" width="5" height="1" fill="#a09898"/><rect x="2" y="12" width="5" height="1" fill="#a09898"/><rect x="1" y="3" width="6" height="2" fill="#000"/><circle cx="11.5" cy="9.5" r="3.2" fill="#a0a0a0" stroke="#000" stroke-width="1"/><rect x="10" y="12.5" width="3" height="2" fill="#000"/></svg><svg class="a" style="left:712px;top:79px" width="16" height="16" viewBox="0 0 16 16" shape-rendering="crispEdges"><path d="M1 4.5h6M1 7.5h6M1 10.5h6" stroke="#000" stroke-width="1.5"/><circle cx="11.5" cy="9.5" r="3.2" fill="#a0a0a0" stroke="#000" stroke-width="1"/><rect x="10" y="12.5" width="3" height="2" fill="#000"/></svg><div class="sp" style="left:566px;top:77px"></div><div class="vl" style="left:738px;top:73px;height:29px"></div><div class="gr" style="left:745px;top:79px"></div><svg class="a" style="left:757px;top:79px" width="16" height="16" viewBox="0 0 16 16" shape-rendering="crispEdges"><path d="M1 9l3-5 2-1h4l2 1 3 5-4 5H5z" fill="#00ffff" stroke="#0000ff" stroke-width="1.2"/><path d="M8 4v10" stroke="#000" stroke-width="1.2"/><path d="M4 4l3 2M12 4l-3 2" stroke="#0000ff"/></svg><svg class="a" style="left:779px;top:79px" width="16" height="16" viewBox="0 0 16 16" shape-rendering="crispEdges"><path d="M1 10l4-4h6l4 4-3 4H4z" fill="#00ffff" stroke="#0000ff" stroke-width="1.2"/><path d="M6 6V4h4v2" fill="#00ffff" stroke="#0000ff"/><path d="M5 10q3 2 6 0" fill="none" stroke="#000" stroke-width="1.1"/></svg><svg class="a" style="left:802px;top:79px" width="16" height="16" viewBox="0 0 16 16" shape-rendering="crispEdges"><path d="M1.5 8.5h14v4h-11z" fill="#00ffff" stroke="#000" stroke-width="1.1"/><path d="M6.5 8.5v-2h4v2" fill="#00ffff" stroke="#0000ff"/></svg><svg class="a" style="left:824px;top:79px" width="16" height="16" viewBox="0 0 16 16" shape-rendering="crispEdges"><path d="M1.5 8.5h14l-3 4h-11z" fill="#00ffff" stroke="#000" stroke-width="1.1"/><path d="M6.5 8.5v-2h4v2" fill="#00ffff" stroke="#0000ff"/></svg><svg class="a" style="left:848px;top:79px" width="16" height="16" viewBox="0 0 16 16" shape-rendering="crispEdges"><path d="M1 9l2-3h8l4 3-4 3H3z" fill="#00ffff" stroke="#0000ff" stroke-width="1.2"/><path d="M8.5 7.5h2v3h-2z" fill="none" stroke="#000"/></svg><svg class="a" style="left:871px;top:79px" width="16" height="16" viewBox="0 0 16 16" shape-rendering="crispEdges"><path d="M1 8.5l3-3h7l4 3-4 3H4z" fill="#00ffff" stroke="#0000ff" stroke-width="1.2"/><path d="M1 8.5h14" stroke="#000" stroke-width="1.1"/></svg><svg class="a" style="left:901px;top:79px" width="16" height="16" viewBox="0 0 16 16" shape-rendering="crispEdges"><path d="M1.5 8.5l6-6 6 6v6h-12z" fill="#ff00ff" stroke="#0000a0" stroke-width="1.2"/><path d="M0.5 8.5l7-7 7 7" fill="none" stroke="#0000a0" stroke-width="1.5"/><rect x="5" y="10" width="3" height="5" fill="#0000a0"/><rect x="10" y="1" width="2" height="5" fill="#a00000"/></svg><div class="sp" style="left:894px;top:77px"></div><div class="vl" style="left:928px;top:73px;height:29px"></div><div class="gr" style="left:935px;top:79px"></div><svg class="a" style="left:945px;top:79px" width="16" height="16" viewBox="0 0 16 16" shape-rendering="crispEdges"><path d="M1 3l3-2 10 9-3 4z" fill="#00e0ff" stroke="#000" stroke-width="1.1"/><path d="M3 3l8 8" stroke="#fff" stroke-width="1.2"/><ellipse cx="12" cy="12" rx="2.5" ry="3" fill="#fff" stroke="#000"/><path d="M10 3h5M12 1l-2 2 2 2" stroke="#000" fill="none" stroke-width="1.1"/></svg><svg class="a" style="left:977px;top:79px" width="16" height="16" viewBox="0 0 16 16" shape-rendering="crispEdges"><path d="M10 10l4 4" stroke="#000" stroke-width="3"/><path d="M10.5 10.5l3 3" stroke="#00c0c0" stroke-width="1.6"/><circle cx="6.5" cy="6.5" r="5" fill="#fff" stroke="#000" stroke-width="1.3"/><rect x="4" y="4" width="5" height="5" fill="#909090" stroke="#000" stroke-width=".8"/></svg><svg class="a" style="left:1000px;top:79px" width="16" height="16" viewBox="0 0 16 16" shape-rendering="crispEdges"><path d="M10 10l4 4" stroke="#000" stroke-width="3"/><path d="M10.5 10.5l3 3" stroke="#00c0c0" stroke-width="1.6"/><circle cx="6.5" cy="6.5" r="5" fill="#fff" stroke="#000" stroke-width="1.3"/><path d="M3.5 6.5h6M6.5 3.5v6" stroke="#000" stroke-width="1.8"/></svg><svg class="a" style="left:1023px;top:79px" width="16" height="16" viewBox="0 0 16 16" shape-rendering="crispEdges"><path d="M9 9l4 4" stroke="#000" stroke-width="3"/><path d="M9.5 9.5l3 3" stroke="#00c0c0" stroke-width="1.6"/><circle cx="6" cy="6" r="5" fill="#fff" stroke="#000" stroke-width="1.3"/><path d="M14 1v11M12 3l2-2 2 2M12 10l2 2 2-2" stroke="#000" fill="none"/></svg><svg class="a" style="left:1047px;top:79px" width="16" height="16" viewBox="0 0 16 16" shape-rendering="crispEdges"><path d="M10 10l4 4" stroke="#000" stroke-width="3"/><path d="M10.5 10.5l3 3" stroke="#00c0c0" stroke-width="1.6"/><circle cx="6.5" cy="6.5" r="5" fill="#fff" stroke="#000" stroke-width="1.3"/><path d="M3.5 5.5h6M3.5 7.5h6" stroke="#000" stroke-width="1.4"/></svg><svg class="a" style="left:1069px;top:79px" width="16" height="16" viewBox="0 0 16 16" shape-rendering="crispEdges"><path d="M2.5 9a5.5 5.5 0 0 1 9.5-5M13.5 7a5.5 5.5 0 0 1-9.5 5" fill="none" stroke="#000" stroke-width="1.4"/><path d="M10 1h5v5zM6 15H1v-5z" fill="#000"/></svg><svg class="a" style="left:1092px;top:79px" width="16" height="16" viewBox="0 0 16 16" shape-rendering="crispEdges"><path d="M8 2v12M2 8h12" stroke="#000" stroke-width="2"/><path d="M8 0l-3.5 3.5h7zM8 16l-3.5-3.5h7zM0 8l3.5-3.5v7zM16 8l-3.5-3.5v7z" fill="#000"/></svg><div class="sp" style="left:968px;top:77px"></div><div class="vl" style="left:1117px;top:73px;height:29px"></div><div class="gr" style="left:1127px;top:79px"></div><svg class="a" style="left:1137px;top:79px" width="16" height="16" viewBox="0 0 16 16" shape-rendering="crispEdges"><path d="M1.5 1.5h8l6 6v8h-8l-6-6z" fill="#fff" stroke="#000" stroke-width="1.2"/><path d="M7.5 7.5h8M7.5 7.5v8M1.5 1.5l6 6M9.5 1.5v8h-8M9.5 9.5l6 6" fill="none" stroke="#000" stroke-width="1"/></svg><div class="pb" style="left:1156px;top:78px"></div><svg class="a" style="left:1159px;top:79px" width="16" height="16" viewBox="0 0 16 16" shape-rendering="crispEdges"><path d="M1.5 1.5h7l6 6h-7z" fill="#00ffff" stroke="#000" stroke-width="1.2"/><path d="M1.5 1.5l6 6v8l-6-6z" fill="#40c0c0" stroke="#000" stroke-width="1.2"/><rect x="7.5" y="7.5" width="8" height="8" fill="#80ffff" stroke="#000" stroke-width="1.3"/></svg><svg class="a" style="left:1183px;top:79px" width="16" height="16" viewBox="0 0 16 16" shape-rendering="crispEdges"><path d="M1 1h7l7 6H7z" fill="#00ffff"/><path d="M1 1l6 6v9L1 10z" fill="#008080"/><rect x="7" y="7" width="9" height="9" fill="#20e8e8"/><path d="M8 8h7M8 10h7M8 12h7M8 14h7" stroke="#00a0a0" stroke-width=".6"/></svg><div class="pb" style="left:1203px;top:78px"></div><svg class="a" style="left:1206px;top:79px" width="16" height="16" viewBox="0 0 16 16" shape-rendering="crispEdges"><path d="M1.5 1.5h8l5 6h-7z" fill="#00ffff" stroke="#000" stroke-width="1.2"/><path d="M1.5 1.5l6 6v8l-3-3z" fill="#40c0c0" stroke="#000" stroke-width="1.2"/><rect x="7.5" y="7.5" width="8" height="8" fill="#80ffff" stroke="#000" stroke-width="1.3"/></svg><svg class="a" style="left:1228px;top:79px" width="16" height="16" viewBox="0 0 16 16" shape-rendering="crispEdges"><path d="M1 6l5-5h5l5 4-5 5-1 6H7z" fill="#a0a0a0"/></svg><svg class="a" style="left:1252px;top:79px" width="16" height="16" viewBox="0 0 16 16" shape-rendering="crispEdges"><rect x="0.5" y="3.5" width="15" height="8" fill="#fff" stroke="#000" stroke-width="1.3"/><path d="M2 10l4-4 3 3h5" fill="none" stroke="#ff0000"/><path d="M12 16h4v-4z" fill="#000"/></svg><div class="vl" style="left:1277px;top:73px;height:29px"></div><div id="left" class="a"></div><div class="ph" style="top:105px">Entities</div><svg class="px" style="top:109px" width="7" height="6" viewBox="0 0 7 6" shape-rendering="crispEdges"><path d="M0 0h2v1h1v1h1V1h1V0h2v1H6v1H5v2h1v1h1v1H5V5H4V4H3v1H2v1H0V5h1V4h1V2H1V1H0z" fill="#000"/></svg>
<div class="fr" style="top:119px;height:388px"></div>
<div class="a" style="left:10px;top:144px;width:223px;height:362px;background:#fff;border-right:1px solid #e3e3e3;border-bottom:1px solid #e3e3e3"></div>
<div class="a" style="left:10px;top:124px;width:52px;height:21px;background:#fff;border:1px solid #9ba7b7;border-bottom:none"></div>
<div class="a" style="left:61px;top:126px;width:47px;height:18px;background:linear-gradient(#f2f2f2,#d9d9d9);border:1px solid #9ba7b7;border-bottom:none"></div>
<div class="t11" style="left:18px;top:127px">Parents</div>
<div class="t11" style="left:66px;top:129px">Children</div>
<div class="dv" style="left:21px;top:154px;height:10px"></div>
<div class="dv" style="left:21px;top:210px;height:56px"></div>
<div class="dv" style="left:21px;top:290px;height:144px"></div>
<div class="dv" style="left:21px;top:449px;height:8px"></div>
<div class="a" style="left:0;top:511px;width:238px;height:1px;background:#a0a0a0"></div>
<div class="ph" style="top:514px">Properties</div><svg class="px" style="top:518px" width="7" height="6" viewBox="0 0 7 6" shape-rendering="crispEdges"><path d="M0 0h2v1h1v1h1V1h1V0h2v1H6v1H5v2h1v1h1v1H5V5H4V4H3v1H2v1H0V5h1V4h1V2H1V1H0z" fill="#000"/></svg>
<div class="fr" style="top:528px;height:320px"></div>
<div class="a" style="left:6px;top:531px;font-size:11px;font-weight:bold;line-height:14px">Multiple</div>
<div class="a" style="left:215px;top:531px;width:15px;height:15px;background:#f0f0f0;border-right:1px solid #696969;border-bottom:1px solid #696969;box-shadow:inset -1px -1px 0 #a0a0a0"><svg class="a" style="left:3px;top:1px" width="9" height="12" viewBox="0 0 9 12"><path d="M2 4q0-3 2.5-3t2.5 3q0 2-2 3v2" fill="none" stroke="#000" stroke-width="3"/><path d="M2 4q0-3 2.5-3t2.5 3q0 2-2 3v2" fill="none" stroke="#ff0" stroke-width="1.3"/><rect x="3.5" y="9.5" width="3" height="2.5" fill="#000"/></svg></div>
<div class="a" style="left:5px;top:546px;width:227px;height:1px;background:#a0a0a0"></div>
<div class="a" style="left:9px;top:547px;width:223px;height:99px;background:#fff"></div>
<div class="a" style="left:106px;top:547px;width:2px;height:95px;background:#a0a0a0;border-right:1px solid #e0e0e0"></div>
<div class="dh" style="left:9px;top:561px;width:223px"></div>
<div class="dh" style="left:9px;top:577px;width:223px"></div>
<div class="dh" style="left:9px;top:593px;width:223px"></div>
<div class="dh" style="left:9px;top:609px;width:223px"></div>
<div class="dh" style="left:9px;top:625px;width:223px"></div>
<div class="dh" style="left:9px;top:641px;width:223px"></div>
<div class="t11" style="left:14px;top:546px;line-height:15px">Color</div>
<div class="t11" style="left:14px;top:562px;line-height:15px">Visible</div>
<div class="t11" style="left:14px;top:578px;line-height:15px">Layer</div>
<div class="t11" style="left:14px;top:594px;line-height:15px">Lock</div>
<div class="t11" style="left:14px;top:610px;line-height:15px">Symmetry exempt</div>
<div class="t11" style="left:14px;top:626px;line-height:15px">User data</div>
<div class="t11" style="left:111px;top:547px;line-height:15px">(various)</div>
<div class="a" style="left:111px;top:563px;width:13px;height:13px;border:1px solid #8f8f8f;background:linear-gradient(135deg,#dcdcdc,#f4f4f4)"><svg class="a" style="left:1px;top:1px" width="10" height="10"><path d="M2 5l2 3 5-7" fill="none" stroke="#4a5f97" stroke-width="1.8"/></svg></div>
<div class="t11" style="left:128px;top:562px;line-height:15px">True</div>
<svg class="a" style="left:110px;top:578px" width="17" height="16" viewBox="0 0 17 16"><path d="M1 2l3 3M16 2l-3 3M1 14l3-3M16 14l-3-3" stroke="#ffe000"/><circle cx="8.5" cy="6.5" r="5" fill="#ffff40" stroke="#000"/><path d="M6 11h5v4H6z" fill="#777" stroke="#000" stroke-width=".8"/></svg>
<div class="t11" style="left:129px;top:578px;line-height:15px">0</div>
<div class="a" style="left:111px;top:595px;width:13px;height:13px;border:1px solid #8f8f8f;background:linear-gradient(135deg,#dcdcdc,#f4f4f4)"></div>
<div class="t11" style="left:128px;top:594px;line-height:15px">False</div>
<div class="a" style="left:111px;top:611px;width:13px;height:13px;border:1px solid #8f8f8f;background:linear-gradient(135deg,#dcdcdc,#f4f4f4)"></div>
<div class="t11" style="left:128px;top:610px;line-height:15px">False</div>
<div class="a" style="left:0;top:852px;width:238px;height:1px;background:#a0a0a0"></div>
<div class="ph" style="top:855px">Selection Set</div><svg class="px" style="top:859px" width="7" height="6" viewBox="0 0 7 6" shape-rendering="crispEdges"><path d="M0 0h2v1h1v1h1V1h1V0h2v1H6v1H5v2h1v1h1v1H5V5H4V4H3v1H2v1H0V5h1V4h1V2H1V1H0z" fill="#000"/></svg>
<div class="fr" style="top:869px;height:156px"></div>
<div class="a" style="left:11px;top:874px;width:21px;height:19px;border:1px solid #707070;border-radius:3px;background:linear-gradient(#e8e8e8,#d0d0d0)"><svg class="a" style="left:2px;top:1px" width="16" height="16"><rect x="1.5" y="1.5" width="8" height="13" fill="#fff" stroke="#000"/><path d="M3 4.5h5M3 7.5h5M3 10.5h5" stroke="#000"/><path d="M13 2v12M11 4l2-2 2 2M11 12l2 2 2-2" stroke="#000" fill="none"/></svg></div>
<div class="a" style="left:35px;top:874px;width:21px;height:19px;border:1px solid #b0b0b0;border-radius:3px;background:#f4f4f4"><svg class="a" style="left:2px;top:1px" width="16" height="16"><path d="M8 1l-6 6h4v7h4V7h4z" fill="#808080"/></svg></div>
<div class="a" style="left:59px;top:874px;width:21px;height:19px;border:1px solid #b0b0b0;border-radius:3px;background:#f4f4f4"><svg class="a" style="left:2px;top:1px" width="16" height="16"><path d="M8 15l-6-6h4V2h4v7h4z" fill="#808080"/></svg></div>
<div class="a" style="left:83px;top:874px;width:21px;height:19px;border:1px solid #b0b0b0;border-radius:3px;background:#f4f4f4"><svg class="a" style="left:2px;top:1px" width="16" height="16"><path d="M2 2l12 12M14 2L2 14" stroke="#c06060" stroke-width="1.8"/></svg></div>
<div class="a" style="left:107px;top:874px;width:21px;height:19px;border:1px solid #b0b0b0;border-radius:3px;background:#f4f4f4"><svg class="a" style="left:2px;top:1px" width="16" height="16"><rect x="1.5" y="1.5" width="13" height="13" fill="#fff" stroke="#555"/><path d="M2 3h12" stroke="#6060c0" stroke-width="2"/><path d="M3 6h10M3 9h10M3 12h10" stroke="#999"/><path d="M3 4l10 10M13 4L3 14" stroke="#c06060" stroke-width="1.5"/></svg></div>
<div class="t11" style="left:133px;top:877px">15 Entities</div>
<div class="a" style="left:10px;top:895px;width:222px;height:113px;border:1px solid #828790;border-bottom:none;background:#fff"></div>
<div class="a" style="left:12px;top:897px;width:202px;height:24px;background:#f0f0f0"></div>
<div class="t11" style="left:18px;top:903px">Name</div><div class="t11" style="left:162px;top:903px">Type</div>
<div class="t11" style="left:34px;top:923px">c25</div><div class="t11" style="left:161px;top:923px">B-spline C..</div>
<div class="t11" style="left:34px;top:940px">c26</div><div class="t11" style="left:161px;top:940px">B-spline C..</div>
<div class="t11" style="left:34px;top:957px">c27</div><div class="t11" style="left:161px;top:957px">B-spline C..</div>
<div class="t11" style="left:34px;top:974px">p18</div><div class="t11" style="left:161px;top:974px">Projected .</div>
<div class="t11" style="left:34px;top:991px">p17</div><div class="t11" style="left:161px;top:991px">Projected .</div>
<div class="a" style="left:214px;top:897px;width:17px;height:111px;background:#f0f0f0"></div>
<svg class="a" style="left:216px;top:902px" width="12" height="8"><path d="M2 6l4-4 4 4z" fill="#404040"/></svg>
<svg class="a" style="left:216px;top:996px" width="12" height="8"><path d="M2 2l4 4 4-4z" fill="#404040"/></svg>
<div class="a" style="left:215px;top:916px;width:14px;height:23px;border:1px solid #9a9a9a;border-radius:2px;background:linear-gradient(90deg,#e8e8e8,#d8d8d8)"><div class="a" style="left:3px;top:7px;width:6px;height:6px;background:repeating-linear-gradient(#555 0 1px,transparent 1px 2px)"></div></div>
<div class="a" style="left:5px;top:1007px;width:228px;height:17px;background:linear-gradient(#e6e6e6,#f0f0f0)"></div><div class="a" style="left:0;top:1029px;width:238px;height:1px;background:#a0a0a0"></div>
<svg class="a" style="left:9px;top:1010px" width="10" height="12"><path d="M6 2L2 6l4 4z" fill="#404040"/></svg>
<svg class="a" style="left:220px;top:1010px" width="10" height="12"><path d="M3 2l4 4-4 4z" fill="#404040"/></svg>
<div class="a" style="left:23px;top:1008px;width:180px;height:15px;border:1px solid #9a9a9a;border-radius:2px;background:linear-gradient(#e8e8e8,#d4d4d4)"><div class="a" style="left:85px;top:4px;width:6px;height:6px;background:repeating-linear-gradient(90deg,#555 0 1px,transparent 1px 2px)"></div></div>
<svg class="a" style="left:33px;top:145px" width="16" height="16" viewBox="0 0 16 16"><path d="M1 8h3" stroke="#000" stroke-width="2"/><path d="M4 4q0-2 3-2h3v12H7q-3 0-3-2z" fill="#ffff00" stroke="#000" stroke-width="1.3"/><path d="M10 5h5M10 11h5" stroke="#000" stroke-width="2"/></svg><div class="ti" style="top:145px">Components</div><div class="dh" style="left:22px;top:153px;width:10px"></div><svg class="a" style="left:33px;top:161px" width="16" height="16" viewBox="0 0 16 16"><path d="M1.5 5.5l4-4h4l5 4-4 5-2 5h-2l-4-5z" fill="#ffff00" stroke="#000" stroke-width="1.2"/><path d="M3 8l9-5M5 12l8-5M6 2l1 12M10 2l-4 11" stroke="#909090" stroke-width=".8"/></svg><div class="ti" style="top:161px">Surfaces</div><svg class="a" style="left:19px;top:165px" width="8" height="9"><path d="M1.5 .5l5 4-5 4z" fill="none" stroke="#a0a0a0"/></svg><div class="dh" style="left:28px;top:169px;width:4px"></div><svg class="a" style="left:33px;top:177px" width="16" height="16" viewBox="0 0 16 16"><rect x="1" y="1" width="14" height="14" fill="url(#ck)"/><path d="M2 14q2-6 4-6t4 0 4-7" fill="none" stroke="#000" stroke-width="1.6"/></svg><div class="ti" style="top:177px">Curves</div><svg class="a" style="left:19px;top:181px" width="8" height="9"><path d="M1.5 .5l5 4-5 4z" fill="none" stroke="#a0a0a0"/></svg><div class="dh" style="left:28px;top:185px;width:4px"></div><svg class="a" style="left:33px;top:193px" width="16" height="16" viewBox="0 0 16 16"><rect x="1" y="1" width="14" height="14" fill="url(#ck)"/><path d="M3 3l10 10M13 3L3 13" stroke="#000" stroke-width="1.3"/></svg><div class="ti" style="top:193px">Points</div><svg class="a" style="left:19px;top:197px" width="8" height="9"><path d="M1.5 .5l5 4-5 4z" fill="none" stroke="#a0a0a0"/></svg><div class="dh" style="left:28px;top:201px;width:4px"></div><svg class="a" style="left:33px;top:209px" width="16" height="16" viewBox="0 0 16 16"><path d="M8 1l7 7-7 7-7-7z" fill="url(#ck)" stroke="#bbb"/><path d="M1 1l14 14" stroke="#000" stroke-width="1.2" stroke-dasharray="3 2"/></svg><div class="ti" style="top:209px">Planes</div><div class="dh" style="left:22px;top:217px;width:10px"></div><svg class="a" style="left:33px;top:225px" width="16" height="16" viewBox="0 0 16 16"><rect x="1" y="1" width="14" height="14" fill="url(#ck)"/><path d="M3 2v12h10M3 14l9-8" stroke="#000" stroke-width="1.6" fill="none"/></svg><div class="ti" style="top:225px">Frames</div><div class="dh" style="left:22px;top:233px;width:10px"></div><svg class="a" style="left:33px;top:241px" width="16" height="16" viewBox="0 0 16 16"><rect x="1" y="1" width="13" height="13" fill="#ffff00" stroke="#000" stroke-width="1.5"/><path d="M1 1l13 13M14 1L1 14M7.5 1v13M1 7.5h13" stroke="#999" stroke-width=".7"/></svg><div class="ti" style="top:241px">Triangle Meshes</div><div class="dh" style="left:22px;top:249px;width:10px"></div><svg class="a" style="left:33px;top:257px" width="16" height="16" viewBox="0 0 16 16"><rect x="1" y="9" width="14" height="6" fill="url(#ck)" opacity=".6"/><path d="M1 2h5l1 1h5v7H1z" fill="#ffff00" stroke="#999"/><path d="M6 12l7-10" stroke="#000" stroke-width="3"/><path d="M6 12l7-10" stroke="#ff00ff" stroke-width="1.5"/><path d="M0 14h8" stroke="#000"/></svg><div class="ti" style="top:257px">Wireframes</div><div class="dh" style="left:22px;top:265px;width:10px"></div><svg class="a" style="left:33px;top:273px" width="16" height="16" viewBox="0 0 16 16"><path d="M1 4q3-3 7-2 5-1 6 2v8l-3 2-3-1-4 2-3-3 1-3z" fill="#ffff00" stroke="#000" stroke-width="1.3"/><path d="M5 3v11M8 2v11M11 3v10" stroke="#ff00ff" stroke-width="1.3"/></svg><div class="ti" style="top:273px">Contours</div><svg class="a" style="left:19px;top:277px" width="8" height="9"><path d="M1.5 .5l5 4-5 4z" fill="none" stroke="#a0a0a0"/></svg><div class="dh" style="left:28px;top:281px;width:4px"></div><svg class="a" style="left:33px;top:289px" width="16" height="16" viewBox="0 0 16 16"><path d="M1 6h9v9H1z" fill="#ffff00" stroke="#000" stroke-width="1.3"/><path d="M1 6l4-4h9l-4 4zM10 6l4-4v9l-4 4z" fill="#ffff00" stroke="#000" stroke-width="1.3"/></svg><div class="ti" style="top:289px">Solids</div><div class="dh" style="left:22px;top:297px;width:10px"></div><svg class="a" style="left:33px;top:305px" width="16" height="16" viewBox="0 0 16 16"><path d="M1.5 2.5l3-1 3 3 3-3 3 1 1 4-2 2 2 3-1 3-3 1-3-3-3 3-3-1-1-3 2-3-2-2z" fill="#ffff00" stroke="#000" stroke-width="1.2"/><path d="M3 3l4 4M13 3l-4 4M3 13l4-4M13 13l-4-4M10 2v6M8 5h6" stroke="#808080" stroke-width=".8"/></svg><div class="ti" style="top:305px">Composite Surfaces</div><div class="dh" style="left:22px;top:313px;width:10px"></div><svg class="a" style="left:33px;top:321px" width="16" height="16" viewBox="0 0 16 16"><rect x="1" y="1" width="14" height="14" fill="url(#ck)"/><path d="M2 13l2-5 3-4 4-1 4 1" fill="none" stroke="#000" stroke-width="1"/><path d="M3 10l2-1M5 5l2 1M10 2l1 2M14 2l-1 2" stroke="#ff0000" stroke-width="1.5"/><circle cx="2" cy="13.5" r="1.6" fill="#ff0000"/></svg><div class="ti" style="top:321px">Relabels</div><div class="dh" style="left:22px;top:329px;width:10px"></div><svg class="a" style="left:33px;top:337px" width="16" height="16" viewBox="0 0 16 16"><rect x="1" y="1" width="14" height="14" fill="url(#ck)"/><rect x="1.5" y="4.5" width="13" height="6" fill="#fff" stroke="#000" stroke-width="1.3"/><path d="M2.5 10q3-5 5-1 3-4 6 1" fill="none" stroke="#0000ff"/></svg><div class="ti" style="top:337px">Graphs</div><div class="dh" style="left:22px;top:345px;width:10px"></div><svg class="a" style="left:33px;top:353px" width="16" height="16" viewBox="0 0 16 16"><rect x="1" y="1" width="14" height="14" fill="url(#ck)"/><rect x="2" y="8" width="2" height="2" fill="#000"/><rect x="5" y="4" width="2" height="2" fill="#000"/><rect x="9" y="2" width="2" height="2" fill="#000"/><rect x="12" y="2" width="2" height="2" fill="#000"/><rect x="12" y="5" width="2" height="5" fill="#000"/><path d="M2.5 12.5h2v2h-2z" fill="none" stroke="#000"/></svg><div class="ti" style="top:353px">Knotlists</div><div class="dh" style="left:22px;top:361px;width:10px"></div><svg class="a" style="left:33px;top:369px" width="16" height="16" viewBox="0 0 16 16"><rect x="1" y="1" width="14" height="14" fill="url(#ck)"/><text x="1" y="11" font-size="9" font-family="Liberation Sans" font-weight="bold">x=</text></svg><div class="ti" style="top:369px">Variables &amp; Formulas</div><div class="dh" style="left:22px;top:377px;width:10px"></div><svg class="a" style="left:33px;top:385px" width="16" height="16" viewBox="0 0 16 16"><rect x="1" y="1" width="14" height="14" fill="url(#ck)"/><text x="0.5" y="15" font-size="16" font-family="Liberation Serif" font-weight="bold">A</text></svg><div class="ti" style="top:385px">Text Labels</div><div class="dh" style="left:22px;top:393px;width:10px"></div><svg class="a" style="left:33px;top:401px" width="16" height="16" viewBox="0 0 16 16"><rect x="1" y="1" width="14" height="14" fill="url(#ck)"/><path d="M3 6.5h11M2 10.5h11" stroke="#000" stroke-width="2.2"/></svg><div class="ti" style="top:401px">Solve Sets</div><div class="dh" style="left:22px;top:409px;width:10px"></div><svg class="a" style="left:33px;top:417px" width="16" height="16" viewBox="0 0 16 16"><rect x="2.5" y="1.5" width="11" height="13" fill="#ffff00" stroke="#000" stroke-width="1.2"/><path d="M4 4.5h8M4 6.5h8M4 8.5h8M4 10.5h8M4 12.5h8" stroke="#000" stroke-width=".9"/></svg><div class="ti" style="top:417px">Entity Lists</div><div class="dh" style="left:22px;top:425px;width:10px"></div><svg class="a" style="left:33px;top:433px" width="16" height="16" viewBox="0 0 16 16"><path d="M8 1v11M3 3l10 7M13 3L3 10M1 7h14" stroke="#ffff00" stroke-width="2.6"/><path d="M6 14h4" stroke="#000" stroke-width="2"/><path d="M8 4v6M5 7h6" stroke="#c0c000" stroke-width=".8"/></svg><div class="ti" style="top:433px">System</div><svg class="a" style="left:19px;top:437px" width="8" height="9"><path d="M1.5 .5l5 4-5 4z" fill="none" stroke="#a0a0a0"/></svg><div class="dh" style="left:28px;top:441px;width:4px"></div><svg class="a" style="left:33px;top:449px" width="16" height="16" viewBox="0 0 16 16"><path d="M2.5 1v14h3M2.5 8h5v6" fill="none" stroke="#000" stroke-width="1.2"/><rect x="1" y="0" width="3" height="3" fill="#00a000"/><rect x="5" y="6" width="3" height="3" fill="#00a000"/><rect x="5" y="13" width="3" height="3" fill="#00a000"/><rect x="10" y="7" width="4" height="3" fill="#ff0000"/><rect x="8" y="11" width="3" height="3" fill="#ff0000"/><path d="M8 8.5h2" stroke="#000"/></svg><div class="ti" style="top:449px">No Dependents</div><div class="dh" style="left:22px;top:457px;width:10px"></div><div id="vbg" class="a"></div><div id="view" class="a"></div><svg class="a" style="left:240px;top:104px" width="1158" height="925" viewBox="240 104 1158 925"><path d="M671 386 706.6 394.3 688.1 401 652.4 392.5Z" fill="#336a9c" stroke="#336a9c" stroke-width=".8"/><path d="M652.4 392.5 688.1 401 669.8 407.7 633.9 399Z" fill="#336a9c" stroke="#336a9c" stroke-width=".8"/><path d="M633.9 399 669.8 407.7 651.8 414.4 615.8 405.5Z" fill="#336a9c" stroke="#336a9c" stroke-width=".8"/><path d="M615.8 405.5 651.8 414.4 634 421.2 597.9 412Z" fill="#336a9c" stroke="#336a9c" stroke-width=".8"/><path d="M597.9 412 634 421.2 616.6 428 580.4 418.6Z" fill="#336a9c" stroke="#336a9c" stroke-width=".8"/><path d="M580.4 418.6 616.6 428 599.5 434.8 563.1 425.2Z" fill="#336a9c" stroke="#336a9c" stroke-width=".8"/><path d="M563.1 425.2 599.5 434.8 582.7 441.6 546.2 431.8Z" fill="#336a9c" stroke="#336a9c" stroke-width=".8"/><path d="M546.2 431.8 582.7 441.6 566.3 448.5 529.7 438.5Z" fill="#336a9c" stroke="#336a9c" stroke-width=".8"/><path d="M529.7 438.5 566.3 448.5 550.3 455.4 513.6 445.1Z" fill="#336a9c" stroke="#336a9c" stroke-width=".8"/><path d="M513.6 445.1 550.3 455.4 534.7 462.2 497.9 451.8Z" fill="#336a9c" stroke="#336a9c" stroke-width=".8"/><path d="M497.9 451.8 534.7 462.2 519.6 469.1 482.7 458.4Z" fill="#336a9c" stroke="#336a9c" stroke-width=".8"/><path d="M482.7 458.4 519.6 469.1 504.9 476 467.9 465Z" fill="#336a9c" stroke="#336a9c" stroke-width=".8"/><path d="M467.9 465 504.9 476 490.8 482.8 453.7 471.6Z" fill="#336a9c" stroke="#336a9c" stroke-width=".8"/><path d="M453.7 471.6 490.8 482.8 477.2 489.7 440 478.2Z" fill="#336a9c" stroke="#336a9c" stroke-width=".8"/><path d="M440 478.2 477.2 489.7 464.1 496.5 426.8 484.8Z" fill="#336a9c" stroke="#336a9c" stroke-width=".8"/><path d="M426.8 484.8 464.1 496.5 451.7 503.2 414.3 491.3Z" fill="#336a9c" stroke="#336a9c" stroke-width=".8"/><path d="M414.3 491.3 451.7 503.2 439.8 509.9 402.3 497.8Z" fill="#336b9d" stroke="#336b9d" stroke-width=".8"/><path d="M402.3 497.8 439.8 509.9 428.6 516.6 391 504.2Z" fill="#346d9f" stroke="#346d9f" stroke-width=".8"/><path d="M391 504.2 428.6 516.6 418.1 523.2 380.4 510.6Z" fill="#346ea1" stroke="#346ea1" stroke-width=".8"/><path d="M380.4 510.6 418.1 523.2 408.3 529.8 370.4 516.9Z" fill="#3470a3" stroke="#3470a3" stroke-width=".8"/><path d="M370.4 516.9 408.3 529.8 399.2 536.2 361.2 523.1Z" fill="#3573a6" stroke="#3573a6" stroke-width=".8"/><path d="M361.2 523.1 399.2 536.2 390.9 542.6 352.7 529.3Z" fill="#3575a8" stroke="#3575a8" stroke-width=".8"/><path d="M352.7 529.3 390.9 542.6 383.3 548.9 345 535.4Z" fill="#3678ab" stroke="#3678ab" stroke-width=".8"/><path d="M345 535.4 383.3 548.9 376.6 555.1 338.1 541.4Z" fill="#367aae" stroke="#367aae" stroke-width=".8"/><path d="M338.1 541.4 376.6 555.1 370.7 561.2 332 547.3Z" fill="#377cb0" stroke="#377cb0" stroke-width=".8"/><path d="M332 547.3 370.7 561.2 365.6 567.2 326.8 553Z" fill="#377eb2" stroke="#377eb2" stroke-width=".8"/><path d="M326.8 553 365.6 567.2 361.4 573 322.4 558.7Z" fill="#3780b4" stroke="#3780b4" stroke-width=".8"/><path d="M322.4 558.7 361.4 573 358 578.7 318.9 564.2Z" fill="#3881b6" stroke="#3881b6" stroke-width=".8"/><path d="M318.9 564.2 358 578.7 355.6 584.3 316.3 569.6Z" fill="#3880b5" stroke="#3880b5" stroke-width=".8"/><path d="M316.3 569.6 355.6 584.3 354.1 589.7 314.6 574.9Z" fill="#377db1" stroke="#377db1" stroke-width=".8"/><path d="M314.6 574.9 354.1 589.7 353.5 595 313.8 580Z" fill="#3678ac" stroke="#3678ac" stroke-width=".8"/><path d="M313.8 580 353.5 595 353.9 600.1 314 585Z" fill="#3575a9" stroke="#3575a9" stroke-width=".8"/><path d="M706.6 394.3 741.3 402.4 723 409.3 688.1 401Z" fill="#336a9c" stroke="#336a9c" stroke-width=".8"/><path d="M688.1 401 723 409.3 704.9 416.1 669.8 407.7Z" fill="#336a9c" stroke="#336a9c" stroke-width=".8"/><path d="M669.8 407.7 704.9 416.1 687 423.1 651.8 414.4Z" fill="#336a9c" stroke="#336a9c" stroke-width=".8"/><path d="M651.8 414.4 687 423.1 669.4 430 634 421.2Z" fill="#336a9c" stroke="#336a9c" stroke-width=".8"/><path d="M634 421.2 669.4 430 652.1 437.1 616.6 428Z" fill="#336a9c" stroke="#336a9c" stroke-width=".8"/><path d="M616.6 428 652.1 437.1 635.1 444.1 599.5 434.8Z" fill="#336a9c" stroke="#336a9c" stroke-width=".8"/><path d="M599.5 434.8 635.1 444.1 618.4 451.2 582.7 441.6Z" fill="#336a9c" stroke="#336a9c" stroke-width=".8"/><path d="M582.7 441.6 618.4 451.2 602.2 458.2 566.3 448.5Z" fill="#336a9c" stroke="#336a9c" stroke-width=".8"/><path d="M566.3 448.5 602.2 458.2 586.3 465.3 550.3 455.4Z" fill="#336a9c" stroke="#336a9c" stroke-width=".8"/><path d="M550.3 455.4 586.3 465.3 570.8 472.4 534.7 462.2Z" fill="#336a9c" stroke="#336a9c" stroke-width=".8"/><path d="M534.7 462.2 570.8 472.4 555.8 479.5 519.6 469.1Z" fill="#336a9c" stroke="#336a9c" stroke-width=".8"/><path d="M519.6 469.1 555.8 479.5 541.2 486.6 504.9 476Z" fill="#336a9c" stroke="#336a9c" stroke-width=".8"/><path d="M504.9 476 541.2 486.6 527.2 493.7 490.8 482.8Z" fill="#336a9c" stroke="#336a9c" stroke-width=".8"/><path d="M490.8 482.8 527.2 493.7 513.7 500.8 477.2 489.7Z" fill="#336a9c" stroke="#336a9c" stroke-width=".8"/><path d="M477.2 489.7 513.7 500.8 500.8 507.8 464.1 496.5Z" fill="#336a9c" stroke="#336a9c" stroke-width=".8"/><path d="M464.1 496.5 500.8 507.8 488.4 514.8 451.7 503.2Z" fill="#336a9c" stroke="#336a9c" stroke-width=".8"/><path d="M451.7 503.2 488.4 514.8 476.7 521.8 439.8 509.9Z" fill="#336b9d" stroke="#336b9d" stroke-width=".8"/><path d="M439.8 509.9 476.7 521.8 465.7 528.6 428.6 516.6Z" fill="#346d9f" stroke="#346d9f" stroke-width=".8"/><path d="M428.6 516.6 465.7 528.6 455.3 535.5 418.1 523.2Z" fill="#346ea1" stroke="#346ea1" stroke-width=".8"/><path d="M418.1 523.2 455.3 535.5 445.6 542.2 408.3 529.8Z" fill="#3471a3" stroke="#3471a3" stroke-width=".8"/><path d="M408.3 529.8 445.6 542.2 436.6 548.9 399.2 536.2Z" fill="#3573a6" stroke="#3573a6" stroke-width=".8"/><path d="M399.2 536.2 436.6 548.9 428.4 555.5 390.9 542.6Z" fill="#3575a8" stroke="#3575a8" stroke-width=".8"/><path d="M390.9 542.6 428.4 555.5 421 562 383.3 548.9Z" fill="#3678ab" stroke="#3678ab" stroke-width=".8"/><path d="M383.3 548.9 421 562 414.4 568.4 376.6 555.1Z" fill="#367aae" stroke="#367aae" stroke-width=".8"/><path d="M376.6 555.1 414.4 568.4 408.6 574.7 370.7 561.2Z" fill="#377cb0" stroke="#377cb0" stroke-width=".8"/><path d="M370.7 561.2 408.6 574.7 403.7 580.9 365.6 567.2Z" fill="#377eb3" stroke="#377eb3" stroke-width=".8"/><path d="M365.6 567.2 403.7 580.9 399.7 586.9 361.4 573Z" fill="#3880b5" stroke="#3880b5" stroke-width=".8"/><path d="M361.4 573 399.7 586.9 396.5 592.8 358 578.7Z" fill="#3881b6" stroke="#3881b6" stroke-width=".8"/><path d="M358 578.7 396.5 592.8 394.2 598.5 355.6 584.3Z" fill="#3881b5" stroke="#3881b5" stroke-width=".8"/><path d="M355.6 584.3 394.2 598.5 392.9 604.1 354.1 589.7Z" fill="#377db1" stroke="#377db1" stroke-width=".8"/><path d="M354.1 589.7 392.9 604.1 392.5 609.5 353.5 595Z" fill="#3679ac" stroke="#3679ac" stroke-width=".8"/><path d="M353.5 595 392.5 609.5 393 614.7 353.9 600.1Z" fill="#3575a9" stroke="#3575a9" stroke-width=".8"/><path d="M741.3 402.4 775.1 410.4 757 417.4 723 409.3Z" fill="#336a9c" stroke="#336a9c" stroke-width=".8"/><path d="M723 409.3 757 417.4 739.1 424.4 704.9 416.1Z" fill="#336a9c" stroke="#336a9c" stroke-width=".8"/><path d="M704.9 416.1 739.1 424.4 721.4 431.5 687 423.1Z" fill="#336a9c" stroke="#336a9c" stroke-width=".8"/><path d="M687 423.1 721.4 431.5 704 438.7 669.4 430Z" fill="#336a9c" stroke="#336a9c" stroke-width=".8"/><path d="M669.4 430 704 438.7 686.8 445.9 652.1 437.1Z" fill="#336a9c" stroke="#336a9c" stroke-width=".8"/><path d="M652.1 437.1 686.8 445.9 670 453.2 635.1 444.1Z" fill="#336a9c" stroke="#336a9c" stroke-width=".8"/><path d="M635.1 444.1 670 453.2 653.5 460.4 618.4 451.2Z" fill="#336a9c" stroke="#336a9c" stroke-width=".8"/><path d="M618.4 451.2 653.5 460.4 637.3 467.7 602.2 458.2Z" fill="#336a9c" stroke="#336a9c" stroke-width=".8"/><path d="M602.2 458.2 637.3 467.7 621.6 475 586.3 465.3Z" fill="#336a9c" stroke="#336a9c" stroke-width=".8"/><path d="M586.3 465.3 621.6 475 606.2 482.3 570.8 472.4Z" fill="#336a9c" stroke="#336a9c" stroke-width=".8"/><path d="M570.8 472.4 606.2 482.3 591.3 489.7 555.8 479.5Z" fill="#336a9c" stroke="#336a9c" stroke-width=".8"/><path d="M555.8 479.5 591.3 489.7 576.9 497 541.2 486.6Z" fill="#336a9c" stroke="#336a9c" stroke-width=".8"/><path d="M541.2 486.6 576.9 497 563 504.3 527.2 493.7Z" fill="#336a9c" stroke="#336a9c" stroke-width=".8"/><path d="M527.2 493.7 563 504.3 549.6 511.6 513.7 500.8Z" fill="#336a9c" stroke="#336a9c" stroke-width=".8"/><path d="M513.7 500.8 549.6 511.6 536.8 518.8 500.8 507.8Z" fill="#336a9c" stroke="#336a9c" stroke-width=".8"/><path d="M500.8 507.8 536.8 518.8 524.6 526 488.4 514.8Z" fill="#336a9c" stroke="#336a9c" stroke-width=".8"/><path d="M488.4 514.8 524.6 526 513 533.2 476.7 521.8Z" fill="#336b9d" stroke="#336b9d" stroke-width=".8"/><path d="M476.7 521.8 513 533.2 502.1 540.3 465.7 528.6Z" fill="#346d9f" stroke="#346d9f" stroke-width=".8"/><path d="M465.7 528.6 502.1 540.3 491.8 547.4 455.3 535.5Z" fill="#346fa1" stroke="#346fa1" stroke-width=".8"/><path d="M455.3 535.5 491.8 547.4 482.2 554.3 445.6 542.2Z" fill="#3471a3" stroke="#3471a3" stroke-width=".8"/><path d="M445.6 542.2 482.2 554.3 473.4 561.2 436.6 548.9Z" fill="#3573a6" stroke="#3573a6" stroke-width=".8"/><path d="M436.6 548.9 473.4 561.2 465.4 568 428.4 555.5Z" fill="#3575a9" stroke="#3575a9" stroke-width=".8"/><path d="M428.4 555.5 465.4 568 458.1 574.7 421 562Z" fill="#3678ab" stroke="#3678ab" stroke-width=".8"/><path d="M421 562 458.1 574.7 451.6 581.3 414.4 568.4Z" fill="#367aae" stroke="#367aae" stroke-width=".8"/><path d="M414.4 568.4 451.6 581.3 446 587.8 408.6 574.7Z" fill="#377db1" stroke="#377db1" stroke-width=".8"/><path d="M408.6 574.7 446 587.8 441.2 594.1 403.7 580.9Z" fill="#377fb3" stroke="#377fb3" stroke-width=".8"/><path d="M403.7 580.9 441.2 594.1 437.3 600.3 399.7 586.9Z" fill="#3880b5" stroke="#3880b5" stroke-width=".8"/><path d="M399.7 586.9 437.3 600.3 434.3 606.3 396.5 592.8Z" fill="#3882b7" stroke="#3882b7" stroke-width=".8"/><path d="M396.5 592.8 434.3 606.3 432.2 612.2 394.2 598.5Z" fill="#3881b6" stroke="#3881b6" stroke-width=".8"/><path d="M394.2 598.5 432.2 612.2 431 617.9 392.9 604.1Z" fill="#377db1" stroke="#377db1" stroke-width=".8"/><path d="M392.9 604.1 431 617.9 430.7 623.4 392.5 609.5Z" fill="#3679ac" stroke="#3679ac" stroke-width=".8"/><path d="M392.5 609.5 430.7 623.4 431.4 628.7 393 614.7Z" fill="#3576a9" stroke="#3576a9" stroke-width=".8"/><path d="M775.1 410.4 808.2 418.1 790.3 425.3 757 417.4Z" fill="#336a9c" stroke="#336a9c" stroke-width=".8"/><path d="M757 417.4 790.3 425.3 772.6 432.5 739.1 424.4Z" fill="#336a9c" stroke="#336a9c" stroke-width=".8"/><path d="M739.1 424.4 772.6 432.5 755.1 439.8 721.4 431.5Z" fill="#336a9c" stroke="#336a9c" stroke-width=".8"/><path d="M721.4 431.5 755.1 439.8 737.8 447.2 704 438.7Z" fill="#336a9c" stroke="#336a9c" stroke-width=".8"/><path d="M704 438.7 737.8 447.2 720.8 454.5 686.8 445.9Z" fill="#336a9c" stroke="#336a9c" stroke-width=".8"/><path d="M686.8 445.9 720.8 454.5 704.2 462 670 453.2Z" fill="#336a9c" stroke="#336a9c" stroke-width=".8"/><path d="M670 453.2 704.2 462 687.8 469.4 653.5 460.4Z" fill="#336a9c" stroke="#336a9c" stroke-width=".8"/><path d="M653.5 460.4 687.8 469.4 671.8 476.9 637.3 467.7Z" fill="#336a9c" stroke="#336a9c" stroke-width=".8"/><path d="M637.3 467.7 671.8 476.9 656.2 484.4 621.6 475Z" fill="#336a9c" stroke="#336a9c" stroke-width=".8"/><path d="M621.6 475 656.2 484.4 641 492 606.2 482.3Z" fill="#336a9c" stroke="#336a9c" stroke-width=".8"/><path d="M606.2 482.3 641 492 626.3 499.5 591.3 489.7Z" fill="#336a9c" stroke="#336a9c" stroke-width=".8"/><path d="M591.3 489.7 626.3 499.5 612 507 576.9 497Z" fill="#336a9c" stroke="#336a9c" stroke-width=".8"/><path d="M576.9 497 612 507 598.2 514.5 563 504.3Z" fill="#336a9c" stroke="#336a9c" stroke-width=".8"/><path d="M563 504.3 598.2 514.5 584.9 522 549.6 511.6Z" fill="#336a9c" stroke="#336a9c" stroke-width=".8"/><path d="M549.6 511.6 584.9 522 572.3 529.5 536.8 518.8Z" fill="#336a9c" stroke="#336a9c" stroke-width=".8"/><path d="M536.8 518.8 572.3 529.5 560.2 536.9 524.6 526Z" fill="#336a9c" stroke="#336a9c" stroke-width=".8"/><path d="M524.6 526 560.2 536.9 548.7 544.3 513 533.2Z" fill="#336b9e" stroke="#336b9e" stroke-width=".8"/><path d="M513 533.2 548.7 544.3 537.9 551.6 502.1 540.3Z" fill="#346d9f" stroke="#346d9f" stroke-width=".8"/><path d="M502.1 540.3 537.9 551.6 527.7 558.9 491.8 547.4Z" fill="#346fa1" stroke="#346fa1" stroke-width=".8"/><path d="M491.8 547.4 527.7 558.9 518.3 566 482.2 554.3Z" fill="#3471a4" stroke="#3471a4" stroke-width=".8"/><path d="M482.2 554.3 518.3 566 509.6 573.1 473.4 561.2Z" fill="#3573a6" stroke="#3573a6" stroke-width=".8"/><path d="M473.4 561.2 509.6 573.1 501.7 580.1 465.4 568Z" fill="#3576a9" stroke="#3576a9" stroke-width=".8"/><path d="M465.4 568 501.7 580.1 494.5 587 458.1 574.7Z" fill="#3678ac" stroke="#3678ac" stroke-width=".8"/><path d="M458.1 574.7 494.5 587 488.2 593.7 451.6 581.3Z" fill="#367baf" stroke="#367baf" stroke-width=".8"/><path d="M451.6 581.3 488.2 593.7 482.7 600.4 446 587.8Z" fill="#377db1" stroke="#377db1" stroke-width=".8"/><path d="M446 587.8 482.7 600.4 478.1 606.8 441.2 594.1Z" fill="#377fb4" stroke="#377fb4" stroke-width=".8"/><path d="M441.2 594.1 478.1 606.8 474.3 613.2 437.3 600.3Z" fill="#3881b6" stroke="#3881b6" stroke-width=".8"/><path d="M437.3 600.3 474.3 613.2 471.4 619.3 434.3 606.3Z" fill="#3882b7" stroke="#3882b7" stroke-width=".8"/><path d="M434.3 606.3 471.4 619.3 469.4 625.3 432.2 612.2Z" fill="#3882b6" stroke="#3882b6" stroke-width=".8"/><path d="M432.2 612.2 469.4 625.3 468.4 631.1 431 617.9Z" fill="#377eb2" stroke="#377eb2" stroke-width=".8"/><path d="M431 617.9 468.4 631.1 468.2 636.8 430.7 623.4Z" fill="#3679ad" stroke="#3679ad" stroke-width=".8"/><path d="M430.7 623.4 468.2 636.8 469.1 642.2 431.4 628.7Z" fill="#3576a9" stroke="#3576a9" stroke-width=".8"/><path d="M808.2 418.1 840.4 425.7 822.7 433 790.3 425.3Z" fill="#336a9c" stroke="#336a9c" stroke-width=".8"/><path d="M790.3 425.3 822.7 433 805.2 440.4 772.6 432.5Z" fill="#336a9c" stroke="#336a9c" stroke-width=".8"/><path d="M772.6 432.5 805.2 440.4 787.9 447.9 755.1 439.8Z" fill="#336a9c" stroke="#336a9c" stroke-width=".8"/><path d="M755.1 439.8 787.9 447.9 770.9 455.4 737.8 447.2Z" fill="#336a9c" stroke="#336a9c" stroke-width=".8"/><path d="M737.8 447.2 770.9 455.4 754.1 463 720.8 454.5Z" fill="#336a9c" stroke="#336a9c" stroke-width=".8"/><path d="M720.8 454.5 754.1 463 737.6 470.6 704.2 462Z" fill="#336a9c" stroke="#336a9c" stroke-width=".8"/><path d="M704.2 462 737.6 470.6 721.4 478.2 687.8 469.4Z" fill="#336a9c" stroke="#336a9c" stroke-width=".8"/><path d="M687.8 469.4 721.4 478.2 705.6 485.9 671.8 476.9Z" fill="#336a9c" stroke="#336a9c" stroke-width=".8"/><path d="M671.8 476.9 705.6 485.9 690.2 493.6 656.2 484.4Z" fill="#336a9c" stroke="#336a9c" stroke-width=".8"/><path d="M656.2 484.4 690.2 493.6 675.1 501.3 641 492Z" fill="#336a9c" stroke="#336a9c" stroke-width=".8"/><path d="M641 492 675.1 501.3 660.5 509.1 626.3 499.5Z" fill="#336a9c" stroke="#336a9c" stroke-width=".8"/><path d="M626.3 499.5 660.5 509.1 646.4 516.8 612 507Z" fill="#336a9c" stroke="#336a9c" stroke-width=".8"/><path d="M612 507 646.4 516.8 632.7 524.5 598.2 514.5Z" fill="#336a9c" stroke="#336a9c" stroke-width=".8"/><path d="M598.2 514.5 632.7 524.5 619.6 532.2 584.9 522Z" fill="#336a9c" stroke="#336a9c" stroke-width=".8"/><path d="M584.9 522 619.6 532.2 607.1 539.8 572.3 529.5Z" fill="#336a9c" stroke="#336a9c" stroke-width=".8"/><path d="M572.3 529.5 607.1 539.8 595.1 547.5 560.2 536.9Z" fill="#336a9c" stroke="#336a9c" stroke-width=".8"/><path d="M560.2 536.9 595.1 547.5 583.8 555 548.7 544.3Z" fill="#336b9e" stroke="#336b9e" stroke-width=".8"/><path d="M548.7 544.3 583.8 555 573.1 562.5 537.9 551.6Z" fill="#346d9f" stroke="#346d9f" stroke-width=".8"/><path d="M537.9 551.6 573.1 562.5 563.1 570 527.7 558.9Z" fill="#346fa1" stroke="#346fa1" stroke-width=".8"/><path d="M527.7 558.9 563.1 570 553.8 577.3 518.3 566Z" fill="#3471a4" stroke="#3471a4" stroke-width=".8"/><path d="M518.3 566 553.8 577.3 545.2 584.6 509.6 573.1Z" fill="#3574a7" stroke="#3574a7" stroke-width=".8"/><path d="M509.6 573.1 545.2 584.6 537.4 591.8 501.7 580.1Z" fill="#3576a9" stroke="#3576a9" stroke-width=".8"/><path d="M501.7 580.1 537.4 591.8 530.4 598.8 494.5 587Z" fill="#3679ac" stroke="#3679ac" stroke-width=".8"/><path d="M494.5 587 530.4 598.8 524.2 605.7 488.2 593.7Z" fill="#377baf" stroke="#377baf" stroke-width=".8"/><path d="M488.2 593.7 524.2 605.7 518.8 612.5 482.7 600.4Z" fill="#377eb2" stroke="#377eb2" stroke-width=".8"/><path d="M482.7 600.4 518.8 612.5 514.3 619.1 478.1 606.8Z" fill="#3780b4" stroke="#3780b4" stroke-width=".8"/><path d="M478.1 606.8 514.3 619.1 510.6 625.6 474.3 613.2Z" fill="#3882b6" stroke="#3882b6" stroke-width=".8"/><path d="M474.3 613.2 510.6 625.6 507.9 631.8 471.4 619.3Z" fill="#3883b8" stroke="#3883b8" stroke-width=".8"/><path d="M471.4 619.3 507.9 631.8 506 638 469.4 625.3Z" fill="#3882b7" stroke="#3882b7" stroke-width=".8"/><path d="M469.4 625.3 506 638 505.1 643.9 468.4 631.1Z" fill="#377eb3" stroke="#377eb3" stroke-width=".8"/><path d="M468.4 631.1 505.1 643.9 505.1 649.6 468.2 636.8Z" fill="#367aae" stroke="#367aae" stroke-width=".8"/><path d="M468.2 636.8 505.1 649.6 506 655.1 469.1 642.2Z" fill="#3677aa" stroke="#3677aa" stroke-width=".8"/><path d="M840.4 425.7 871.7 433.1 854.3 440.6 822.7 433Z" fill="#336a9c" stroke="#336a9c" stroke-width=".8"/><path d="M822.7 433 854.3 440.6 837.1 448.1 805.2 440.4Z" fill="#336a9c" stroke="#336a9c" stroke-width=".8"/><path d="M805.2 440.4 837.1 448.1 820 455.8 787.9 447.9Z" fill="#336a9c" stroke="#336a9c" stroke-width=".8"/><path d="M787.9 447.9 820 455.8 803.2 463.4 770.9 455.4Z" fill="#336a9c" stroke="#336a9c" stroke-width=".8"/><path d="M770.9 455.4 803.2 463.4 786.6 471.2 754.1 463Z" fill="#336a9c" stroke="#336a9c" stroke-width=".8"/><path d="M754.1 463 786.6 471.2 770.3 478.9 737.6 470.6Z" fill="#336a9c" stroke="#336a9c" stroke-width=".8"/><path d="M737.6 470.6 770.3 478.9 754.3 486.8 721.4 478.2Z" fill="#336a9c" stroke="#336a9c" stroke-width=".8"/><path d="M721.4 478.2 754.3 486.8 738.7 494.6 705.6 485.9Z" fill="#336a9c" stroke="#336a9c" stroke-width=".8"/><path d="M705.6 485.9 738.7 494.6 723.4 502.5 690.2 493.6Z" fill="#336a9c" stroke="#336a9c" stroke-width=".8"/><path d="M690.2 493.6 723.4 502.5 708.6 510.4 675.1 501.3Z" fill="#336a9c" stroke="#336a9c" stroke-width=".8"/><path d="M675.1 501.3 708.6 510.4 694.1 518.3 660.5 509.1Z" fill="#336a9c" stroke="#336a9c" stroke-width=".8"/><path d="M660.5 509.1 694.1 518.3 680.1 526.2 646.4 516.8Z" fill="#336a9c" stroke="#336a9c" stroke-width=".8"/><path d="M646.4 516.8 680.1 526.2 666.7 534.1 632.7 524.5Z" fill="#336a9c" stroke="#336a9c" stroke-width=".8"/><path d="M632.7 524.5 666.7 534.1 653.7 542 619.6 532.2Z" fill="#336a9c" stroke="#336a9c" stroke-width=".8"/><path d="M619.6 532.2 653.7 542 641.3 549.8 607.1 539.8Z" fill="#336a9c" stroke="#336a9c" stroke-width=".8"/><path d="M607.1 539.8 641.3 549.8 629.5 557.6 595.1 547.5Z" fill="#336a9c" stroke="#336a9c" stroke-width=".8"/><path d="M595.1 547.5 629.5 557.6 618.3 565.4 583.8 555Z" fill="#336b9e" stroke="#336b9e" stroke-width=".8"/><path d="M583.8 555 618.3 565.4 607.7 573.1 573.1 562.5Z" fill="#346d9f" stroke="#346d9f" stroke-width=".8"/><path d="M573.1 562.5 607.7 573.1 597.9 580.7 563.1 570Z" fill="#346fa2" stroke="#346fa2" stroke-width=".8"/><path d="M563.1 570 597.9 580.7 588.7 588.2 553.8 577.3Z" fill="#3471a4" stroke="#3471a4" stroke-width=".8"/><path d="M553.8 577.3 588.7 588.2 580.3 595.7 545.2 584.6Z" fill="#3574a7" stroke="#3574a7" stroke-width=".8"/><path d="M545.2 584.6 580.3 595.7 572.6 603 537.4 591.8Z" fill="#3677aa" stroke="#3677aa" stroke-width=".8"/><path d="M537.4 591.8 572.6 603 565.7 610.2 530.4 598.8Z" fill="#3679ad" stroke="#3679ad" stroke-width=".8"/><path d="M530.4 598.8 565.7 610.2 559.6 617.2 524.2 605.7Z" fill="#377cb0" stroke="#377cb0" stroke-width=".8"/><path d="M524.2 605.7 559.6 617.2 554.3 624.1 518.8 612.5Z" fill="#377eb3" stroke="#377eb3" stroke-width=".8"/><path d="M518.8 612.5 554.3 624.1 549.9 630.9 514.3 619.1Z" fill="#3881b5" stroke="#3881b5" stroke-width=".8"/><path d="M514.3 619.1 549.9 630.9 546.4 637.4 510.6 625.6Z" fill="#3883b7" stroke="#3883b7" stroke-width=".8"/><path d="M510.6 625.6 546.4 637.4 543.7 643.8 507.9 631.8Z" fill="#3884b9" stroke="#3884b9" stroke-width=".8"/><path d="M507.9 631.8 543.7 643.8 542 650 506 638Z" fill="#3883b8" stroke="#3883b8" stroke-width=".8"/><path d="M506 638 542 650 541.1 656 505.1 643.9Z" fill="#377fb4" stroke="#377fb4" stroke-width=".8"/><path d="M505.1 643.9 541.1 656 541.2 661.8 505.1 649.6Z" fill="#367baf" stroke="#367baf" stroke-width=".8"/><path d="M505.1 649.6 541.2 661.8 542.2 667.4 506 655.1Z" fill="#3678ab" stroke="#3678ab" stroke-width=".8"/><path d="M871.7 433.1 902.2 440.4 885.1 448 854.3 440.6Z" fill="#336a9c" stroke="#336a9c" stroke-width=".8"/><path d="M854.3 440.6 885.1 448 868.1 455.7 837.1 448.1Z" fill="#336a9c" stroke="#336a9c" stroke-width=".8"/><path d="M837.1 448.1 868.1 455.7 851.3 463.4 820 455.8Z" fill="#336a9c" stroke="#336a9c" stroke-width=".8"/><path d="M820 455.8 851.3 463.4 834.7 471.3 803.2 463.4Z" fill="#336a9c" stroke="#336a9c" stroke-width=".8"/><path d="M803.2 463.4 834.7 471.3 818.4 479.1 786.6 471.2Z" fill="#336a9c" stroke="#336a9c" stroke-width=".8"/><path d="M786.6 471.2 818.4 479.1 802.3 487.1 770.3 478.9Z" fill="#336a9c" stroke="#336a9c" stroke-width=".8"/><path d="M770.3 478.9 802.3 487.1 786.5 495.1 754.3 486.8Z" fill="#336a9c" stroke="#336a9c" stroke-width=".8"/><path d="M754.3 486.8 786.5 495.1 771.1 503.1 738.7 494.6Z" fill="#336a9c" stroke="#336a9c" stroke-width=".8"/><path d="M738.7 494.6 771.1 503.1 756 511.1 723.4 502.5Z" fill="#336a9c" stroke="#336a9c" stroke-width=".8"/><path d="M723.4 502.5 756 511.1 741.4 519.2 708.6 510.4Z" fill="#336a9c" stroke="#336a9c" stroke-width=".8"/><path d="M708.6 510.4 741.4 519.2 727.1 527.3 694.1 518.3Z" fill="#336a9c" stroke="#336a9c" stroke-width=".8"/><path d="M694.1 518.3 727.1 527.3 713.3 535.3 680.1 526.2Z" fill="#336a9c" stroke="#336a9c" stroke-width=".8"/><path d="M680.1 526.2 713.3 535.3 700 543.4 666.7 534.1Z" fill="#336a9c" stroke="#336a9c" stroke-width=".8"/><path d="M666.7 534.1 700 543.4 687.2 551.5 653.7 542Z" fill="#336a9c" stroke="#336a9c" stroke-width=".8"/><path d="M653.7 542 687.2 551.5 674.9 559.5 641.3 549.8Z" fill="#336a9c" stroke="#336a9c" stroke-width=".8"/><path d="M641.3 549.8 674.9 559.5 663.3 567.5 629.5 557.6Z" fill="#336a9c" stroke="#336a9c" stroke-width=".8"/><path d="M629.5 557.6 663.3 567.5 652.2 575.4 618.3 565.4Z" fill="#336c9e" stroke="#336c9e" stroke-width=".8"/><path d="M618.3 565.4 652.2 575.4 641.8 583.2 607.7 573.1Z" fill="#346d9f" stroke="#346d9f" stroke-width=".8"/><path d="M607.7 573.1 641.8 583.2 632.1 591 597.9 580.7Z" fill="#346fa2" stroke="#346fa2" stroke-width=".8"/><path d="M597.9 580.7 632.1 591 623 598.7 588.7 588.2Z" fill="#3572a4" stroke="#3572a4" stroke-width=".8"/><path d="M588.7 588.2 623 598.7 614.7 606.3 580.3 595.7Z" fill="#3574a7" stroke="#3574a7" stroke-width=".8"/><path d="M580.3 595.7 614.7 606.3 607.2 613.7 572.6 603Z" fill="#3677ab" stroke="#3677ab" stroke-width=".8"/><path d="M572.6 603 607.2 613.7 600.4 621.1 565.7 610.2Z" fill="#367aae" stroke="#367aae" stroke-width=".8"/><path d="M565.7 610.2 600.4 621.1 594.4 628.2 559.6 617.2Z" fill="#377db1" stroke="#377db1" stroke-width=".8"/><path d="M559.6 617.2 594.4 628.2 589.3 635.3 554.3 624.1Z" fill="#377fb4" stroke="#377fb4" stroke-width=".8"/><path d="M554.3 624.1 589.3 635.3 585 642.1 549.9 630.9Z" fill="#3882b6" stroke="#3882b6" stroke-width=".8"/><path d="M549.9 630.9 585 642.1 581.5 648.8 546.4 637.4Z" fill="#3884b9" stroke="#3884b9" stroke-width=".8"/><path d="M546.4 637.4 581.5 648.8 578.9 655.3 543.7 643.8Z" fill="#3985ba" stroke="#3985ba" stroke-width=".8"/><path d="M543.7 643.8 578.9 655.3 577.3 661.6 542 650Z" fill="#3884b9" stroke="#3884b9" stroke-width=".8"/><path d="M542 650 577.3 661.6 576.5 667.7 541.1 656Z" fill="#3881b5" stroke="#3881b5" stroke-width=".8"/><path d="M541.1 656 576.5 667.7 576.6 673.5 541.2 661.8Z" fill="#377cb0" stroke="#377cb0" stroke-width=".8"/><path d="M541.2 661.8 576.6 673.5 577.6 679.1 542.2 667.4Z" fill="#3679ad" stroke="#3679ad" stroke-width=".8"/><path d="M902.2 440.4 931.8 447.6 915 455.3 885.1 448Z" fill="#336a9c" stroke="#336a9c" stroke-width=".8"/><path d="M885.1 448 915 455.3 898.3 463.1 868.1 455.7Z" fill="#336a9c" stroke="#336a9c" stroke-width=".8"/><path d="M868.1 455.7 898.3 463.1 881.8 471 851.3 463.4Z" fill="#336a9c" stroke="#336a9c" stroke-width=".8"/><path d="M851.3 463.4 881.8 471 865.5 478.9 834.7 471.3Z" fill="#336a9c" stroke="#336a9c" stroke-width=".8"/><path d="M834.7 471.3 865.5 478.9 849.4 486.9 818.4 479.1Z" fill="#336a9c" stroke="#336a9c" stroke-width=".8"/><path d="M818.4 479.1 849.4 486.9 833.6 495 802.3 487.1Z" fill="#336a9c" stroke="#336a9c" stroke-width=".8"/><path d="M802.3 487.1 833.6 495 818 503.1 786.5 495.1Z" fill="#336a9c" stroke="#336a9c" stroke-width=".8"/><path d="M786.5 495.1 818 503.1 802.8 511.3 771.1 503.1Z" fill="#336a9c" stroke="#336a9c" stroke-width=".8"/><path d="M771.1 503.1 802.8 511.3 787.9 519.5 756 511.1Z" fill="#336a9c" stroke="#336a9c" stroke-width=".8"/><path d="M756 511.1 787.9 519.5 773.5 527.7 741.4 519.2Z" fill="#336a9c" stroke="#336a9c" stroke-width=".8"/><path d="M741.4 519.2 773.5 527.7 759.4 535.9 727.1 527.3Z" fill="#336a9c" stroke="#336a9c" stroke-width=".8"/><path d="M727.1 527.3 759.4 535.9 745.8 544.2 713.3 535.3Z" fill="#336a9c" stroke="#336a9c" stroke-width=".8"/><path d="M713.3 535.3 745.8 544.2 732.6 552.4 700 543.4Z" fill="#336a9c" stroke="#336a9c" stroke-width=".8"/><path d="M700 543.4 732.6 552.4 720 560.6 687.2 551.5Z" fill="#336a9c" stroke="#336a9c" stroke-width=".8"/><path d="M687.2 551.5 720 560.6 707.9 568.8 674.9 559.5Z" fill="#336a9c" stroke="#336a9c" stroke-width=".8"/><path d="M674.9 559.5 707.9 568.8 696.4 576.9 663.3 567.5Z" fill="#336a9d" stroke="#336a9d" stroke-width=".8"/><path d="M663.3 567.5 696.4 576.9 685.5 585 652.2 575.4Z" fill="#336c9e" stroke="#336c9e" stroke-width=".8"/><path d="M652.2 575.4 685.5 585 675.3 593 641.8 583.2Z" fill="#346da0" stroke="#346da0" stroke-width=".8"/><path d="M641.8 583.2 675.3 593 665.7 600.9 632.1 591Z" fill="#346fa2" stroke="#346fa2" stroke-width=".8"/><path d="M632.1 591 665.7 600.9 656.8 608.7 623 598.7Z" fill="#3572a5" stroke="#3572a5" stroke-width=".8"/><path d="M623 598.7 656.8 608.7 648.6 616.4 614.7 606.3Z" fill="#3575a8" stroke="#3575a8" stroke-width=".8"/><path d="M614.7 606.3 648.6 616.4 641.1 624 607.2 613.7Z" fill="#3678ab" stroke="#3678ab" stroke-width=".8"/><path d="M607.2 613.7 641.1 624 634.5 631.5 600.4 621.1Z" fill="#367bae" stroke="#367bae" stroke-width=".8"/><path d="M600.4 621.1 634.5 631.5 628.6 638.8 594.4 628.2Z" fill="#377db2" stroke="#377db2" stroke-width=".8"/><path d="M594.4 628.2 628.6 638.8 623.6 645.9 589.3 635.3Z" fill="#3880b5" stroke="#3880b5" stroke-width=".8"/><path d="M589.3 635.3 623.6 645.9 619.4 652.9 585 642.1Z" fill="#3883b7" stroke="#3883b7" stroke-width=".8"/><path d="M585 642.1 619.4 652.9 616 659.6 581.5 648.8Z" fill="#3885ba" stroke="#3885ba" stroke-width=".8"/><path d="M581.5 648.8 616 659.6 613.5 666.2 578.9 655.3Z" fill="#3986bc" stroke="#3986bc" stroke-width=".8"/><path d="M578.9 655.3 613.5 666.2 611.9 672.6 577.3 661.6Z" fill="#3986bb" stroke="#3986bb" stroke-width=".8"/><path d="M577.3 661.6 611.9 672.6 611.2 678.7 576.5 667.7Z" fill="#3882b7" stroke="#3882b7" stroke-width=".8"/><path d="M576.5 667.7 611.2 678.7 611.4 684.6 576.6 673.5Z" fill="#377eb2" stroke="#377eb2" stroke-width=".8"/><path d="M576.6 673.5 611.4 684.6 612.4 690.2 577.6 679.1Z" fill="#367baf" stroke="#367baf" stroke-width=".8"/><path d="M931.8 447.6 960.6 454.6 944.1 462.4 915 455.3Z" fill="#336a9c" stroke="#336a9c" stroke-width=".8"/><path d="M915 455.3 944.1 462.4 927.7 470.3 898.3 463.1Z" fill="#336a9c" stroke="#336a9c" stroke-width=".8"/><path d="M898.3 463.1 927.7 470.3 911.5 478.3 881.8 471Z" fill="#336a9c" stroke="#336a9c" stroke-width=".8"/><path d="M881.8 471 911.5 478.3 895.4 486.4 865.5 478.9Z" fill="#336a9c" stroke="#336a9c" stroke-width=".8"/><path d="M865.5 478.9 895.4 486.4 879.6 494.5 849.4 486.9Z" fill="#336a9c" stroke="#336a9c" stroke-width=".8"/><path d="M849.4 486.9 879.6 494.5 864 502.7 833.6 495Z" fill="#336a9c" stroke="#336a9c" stroke-width=".8"/><path d="M833.6 495 864 502.7 848.8 510.9 818 503.1Z" fill="#336a9c" stroke="#336a9c" stroke-width=".8"/><path d="M818 503.1 848.8 510.9 833.8 519.2 802.8 511.3Z" fill="#336a9c" stroke="#336a9c" stroke-width=".8"/><path d="M802.8 511.3 833.8 519.2 819.2 527.6 787.9 519.5Z" fill="#336a9c" stroke="#336a9c" stroke-width=".8"/><path d="M787.9 519.5 819.2 527.6 804.9 535.9 773.5 527.7Z" fill="#336a9c" stroke="#336a9c" stroke-width=".8"/><path d="M773.5 527.7 804.9 535.9 791 544.3 759.4 535.9Z" fill="#336a9c" stroke="#336a9c" stroke-width=".8"/><path d="M759.4 535.9 791 544.3 777.6 552.7 745.8 544.2Z" fill="#336a9c" stroke="#336a9c" stroke-width=".8"/><path d="M745.8 544.2 777.6 552.7 764.7 561.1 732.6 552.4Z" fill="#336a9c" stroke="#336a9c" stroke-width=".8"/><path d="M732.6 552.4 764.7 561.1 752.2 569.4 720 560.6Z" fill="#336a9c" stroke="#336a9c" stroke-width=".8"/><path d="M720 560.6 752.2 569.4 740.3 577.7 707.9 568.8Z" fill="#336a9c" stroke="#336a9c" stroke-width=".8"/><path d="M707.9 568.8 740.3 577.7 729 586 696.4 576.9Z" fill="#336a9d" stroke="#336a9d" stroke-width=".8"/><path d="M696.4 576.9 729 586 718.2 594.2 685.5 585Z" fill="#336c9e" stroke="#336c9e" stroke-width=".8"/><path d="M685.5 585 718.2 594.2 708.1 602.3 675.3 593Z" fill="#346da0" stroke="#346da0" stroke-width=".8"/><path d="M675.3 593 708.1 602.3 698.7 610.4 665.7 600.9Z" fill="#3470a2" stroke="#3470a2" stroke-width=".8"/><path d="M665.7 600.9 698.7 610.4 689.9 618.3 656.8 608.7Z" fill="#3572a5" stroke="#3572a5" stroke-width=".8"/><path d="M656.8 608.7 689.9 618.3 681.9 626.2 648.6 616.4Z" fill="#3575a8" stroke="#3575a8" stroke-width=".8"/><path d="M648.6 616.4 681.9 626.2 674.6 633.9 641.1 624Z" fill="#3678ac" stroke="#3678ac" stroke-width=".8"/><path d="M641.1 624 674.6 633.9 668 641.4 634.5 631.5Z" fill="#377baf" stroke="#377baf" stroke-width=".8"/><path d="M634.5 631.5 668 641.4 662.3 648.8 628.6 638.8Z" fill="#377eb3" stroke="#377eb3" stroke-width=".8"/><path d="M628.6 638.8 662.3 648.8 657.3 656 623.6 645.9Z" fill="#3881b6" stroke="#3881b6" stroke-width=".8"/><path d="M623.6 645.9 657.3 656 653.2 663.1 619.4 652.9Z" fill="#3884b9" stroke="#3884b9" stroke-width=".8"/><path d="M619.4 652.9 653.2 663.1 649.9 669.9 616 659.6Z" fill="#3986bb" stroke="#3986bb" stroke-width=".8"/><path d="M616 659.6 649.9 669.9 647.5 676.6 613.5 666.2Z" fill="#3988bd" stroke="#3988bd" stroke-width=".8"/><path d="M613.5 666.2 647.5 676.6 645.9 683 611.9 672.6Z" fill="#3987bc" stroke="#3987bc" stroke-width=".8"/><path d="M611.9 672.6 645.9 683 645.2 689.1 611.2 678.7Z" fill="#3884b9" stroke="#3884b9" stroke-width=".8"/><path d="M611.2 678.7 645.2 689.1 645.4 695.1 611.4 684.6Z" fill="#3780b4" stroke="#3780b4" stroke-width=".8"/><path d="M611.4 684.6 645.4 695.1 646.5 700.7 612.4 690.2Z" fill="#377db1" stroke="#377db1" stroke-width=".8"/><path d="M960.6 454.6 988.5 461.5 972.3 469.4 944.1 462.4Z" fill="#336a9c" stroke="#336a9c" stroke-width=".8"/><path d="M944.1 462.4 972.3 469.4 956.2 477.4 927.7 470.3Z" fill="#336a9c" stroke="#336a9c" stroke-width=".8"/><path d="M927.7 470.3 956.2 477.4 940.3 485.5 911.5 478.3Z" fill="#336a9c" stroke="#336a9c" stroke-width=".8"/><path d="M911.5 478.3 940.3 485.5 924.6 493.6 895.4 486.4Z" fill="#336a9c" stroke="#336a9c" stroke-width=".8"/><path d="M895.4 486.4 924.6 493.6 909.1 501.9 879.6 494.5Z" fill="#336a9c" stroke="#336a9c" stroke-width=".8"/><path d="M879.6 494.5 909.1 501.9 893.8 510.2 864 502.7Z" fill="#336a9c" stroke="#336a9c" stroke-width=".8"/><path d="M864 502.7 893.8 510.2 878.8 518.5 848.8 510.9Z" fill="#336a9c" stroke="#336a9c" stroke-width=".8"/><path d="M848.8 510.9 878.8 518.5 864 526.9 833.8 519.2Z" fill="#336a9c" stroke="#336a9c" stroke-width=".8"/><path d="M833.8 519.2 864 526.9 849.7 535.4 819.2 527.6Z" fill="#336a9c" stroke="#336a9c" stroke-width=".8"/><path d="M819.2 527.6 849.7 535.4 835.6 543.9 804.9 535.9Z" fill="#336a9c" stroke="#336a9c" stroke-width=".8"/><path d="M804.9 535.9 835.6 543.9 822 552.4 791 544.3Z" fill="#336a9c" stroke="#336a9c" stroke-width=".8"/><path d="M791 544.3 822 552.4 808.8 560.9 777.6 552.7Z" fill="#336a9c" stroke="#336a9c" stroke-width=".8"/><path d="M777.6 552.7 808.8 560.9 796.1 569.4 764.7 561.1Z" fill="#336a9c" stroke="#336a9c" stroke-width=".8"/><path d="M764.7 561.1 796.1 569.4 783.8 577.8 752.2 569.4Z" fill="#336a9c" stroke="#336a9c" stroke-width=".8"/><path d="M752.2 569.4 783.8 577.8 772.1 586.3 740.3 577.7Z" fill="#336a9c" stroke="#336a9c" stroke-width=".8"/><path d="M740.3 577.7 772.1 586.3 760.9 594.7 729 586Z" fill="#336a9d" stroke="#336a9d" stroke-width=".8"/><path d="M729 586 760.9 594.7 750.4 603 718.2 594.2Z" fill="#336c9e" stroke="#336c9e" stroke-width=".8"/><path d="M718.2 594.2 750.4 603 740.4 611.3 708.1 602.3Z" fill="#346ea0" stroke="#346ea0" stroke-width=".8"/><path d="M708.1 602.3 740.4 611.3 731.1 619.4 698.7 610.4Z" fill="#3470a3" stroke="#3470a3" stroke-width=".8"/><path d="M698.7 610.4 731.1 619.4 722.5 627.5 689.9 618.3Z" fill="#3573a6" stroke="#3573a6" stroke-width=".8"/><path d="M689.9 618.3 722.5 627.5 714.6 635.4 681.9 626.2Z" fill="#3576a9" stroke="#3576a9" stroke-width=".8"/><path d="M681.9 626.2 714.6 635.4 707.4 643.2 674.6 633.9Z" fill="#3679ac" stroke="#3679ac" stroke-width=".8"/><path d="M674.6 633.9 707.4 643.2 700.9 650.8 668 641.4Z" fill="#377cb0" stroke="#377cb0" stroke-width=".8"/><path d="M668 641.4 700.9 650.8 695.3 658.3 662.3 648.8Z" fill="#377fb4" stroke="#377fb4" stroke-width=".8"/><path d="M662.3 648.8 695.3 658.3 690.4 665.6 657.3 656Z" fill="#3882b7" stroke="#3882b7" stroke-width=".8"/><path d="M657.3 656 690.4 665.6 686.4 672.7 653.2 663.1Z" fill="#3885ba" stroke="#3885ba" stroke-width=".8"/><path d="M653.2 663.1 686.4 672.7 683.1 679.6 649.9 669.9Z" fill="#3987bc" stroke="#3987bc" stroke-width=".8"/><path d="M649.9 669.9 683.1 679.6 680.8 686.3 647.5 676.6Z" fill="#3989be" stroke="#3989be" stroke-width=".8"/><path d="M647.5 676.6 680.8 686.3 679.2 692.8 645.9 683Z" fill="#3989be" stroke="#3989be" stroke-width=".8"/><path d="M645.9 683 679.2 692.8 678.6 699 645.2 689.1Z" fill="#3986bb" stroke="#3986bb" stroke-width=".8"/><path d="M645.2 689.1 678.6 699 678.8 704.9 645.4 695.1Z" fill="#3882b7" stroke="#3882b7" stroke-width=".8"/><path d="M645.4 695.1 678.8 704.9 679.8 710.6 646.5 700.7Z" fill="#377fb4" stroke="#377fb4" stroke-width=".8"/><path d="M988.5 461.5 1015.4 468.3 999.6 476.3 972.3 469.4Z" fill="#336a9c" stroke="#336a9c" stroke-width=".8"/><path d="M972.3 469.4 999.6 476.3 983.9 484.3 956.2 477.4Z" fill="#336a9c" stroke="#336a9c" stroke-width=".8"/><path d="M956.2 477.4 983.9 484.3 968.3 492.5 940.3 485.5Z" fill="#336a9c" stroke="#336a9c" stroke-width=".8"/><path d="M940.3 485.5 968.3 492.5 952.9 500.7 924.6 493.6Z" fill="#336a9c" stroke="#336a9c" stroke-width=".8"/><path d="M924.6 493.6 952.9 500.7 937.7 509 909.1 501.9Z" fill="#336a9c" stroke="#336a9c" stroke-width=".8"/><path d="M909.1 501.9 937.7 509 922.7 517.4 893.8 510.2Z" fill="#336a9c" stroke="#336a9c" stroke-width=".8"/><path d="M893.8 510.2 922.7 517.4 908 525.9 878.8 518.5Z" fill="#336a9c" stroke="#336a9c" stroke-width=".8"/><path d="M878.8 518.5 908 525.9 893.6 534.4 864 526.9Z" fill="#336a9c" stroke="#336a9c" stroke-width=".8"/><path d="M864 526.9 893.6 534.4 879.4 543 849.7 535.4Z" fill="#336a9c" stroke="#336a9c" stroke-width=".8"/><path d="M849.7 535.4 879.4 543 865.7 551.5 835.6 543.9Z" fill="#336a9c" stroke="#336a9c" stroke-width=".8"/><path d="M835.6 543.9 865.7 551.5 852.3 560.1 822 552.4Z" fill="#336a9c" stroke="#336a9c" stroke-width=".8"/><path d="M822 552.4 852.3 560.1 839.3 568.7 808.8 560.9Z" fill="#336a9c" stroke="#336a9c" stroke-width=".8"/><path d="M808.8 560.9 839.3 568.7 826.8 577.3 796.1 569.4Z" fill="#336a9c" stroke="#336a9c" stroke-width=".8"/><path d="M796.1 569.4 826.8 577.3 814.7 585.9 783.8 577.8Z" fill="#336a9c" stroke="#336a9c" stroke-width=".8"/><path d="M783.8 577.8 814.7 585.9 803.2 594.5 772.1 586.3Z" fill="#336a9c" stroke="#336a9c" stroke-width=".8"/><path d="M772.1 586.3 803.2 594.5 792.2 603 760.9 594.7Z" fill="#336b9d" stroke="#336b9d" stroke-width=".8"/><path d="M760.9 594.7 792.2 603 781.8 611.4 750.4 603Z" fill="#336c9e" stroke="#336c9e" stroke-width=".8"/><path d="M750.4 603 781.8 611.4 772.1 619.7 740.4 611.3Z" fill="#346ea0" stroke="#346ea0" stroke-width=".8"/><path d="M740.4 611.3 772.1 619.7 762.9 628 731.1 619.4Z" fill="#3470a3" stroke="#3470a3" stroke-width=".8"/><path d="M731.1 619.4 762.9 628 754.4 636.1 722.5 627.5Z" fill="#3573a6" stroke="#3573a6" stroke-width=".8"/><path d="M722.5 627.5 754.4 636.1 746.6 644.2 714.6 635.4Z" fill="#3576aa" stroke="#3576aa" stroke-width=".8"/><path d="M714.6 635.4 746.6 644.2 739.6 652 707.4 643.2Z" fill="#3679ad" stroke="#3679ad" stroke-width=".8"/><path d="M707.4 643.2 739.6 652 733.2 659.8 700.9 650.8Z" fill="#377db1" stroke="#377db1" stroke-width=".8"/><path d="M700.9 650.8 733.2 659.8 727.7 667.3 695.3 658.3Z" fill="#3880b5" stroke="#3880b5" stroke-width=".8"/><path d="M695.3 658.3 727.7 667.3 722.9 674.7 690.4 665.6Z" fill="#3883b8" stroke="#3883b8" stroke-width=".8"/><path d="M690.4 665.6 722.9 674.7 718.9 681.8 686.4 672.7Z" fill="#3986bb" stroke="#3986bb" stroke-width=".8"/><path d="M686.4 672.7 718.9 681.8 715.7 688.8 683.1 679.6Z" fill="#3988be" stroke="#3988be" stroke-width=".8"/><path d="M683.1 679.6 715.7 688.8 713.4 695.5 680.8 686.3Z" fill="#3a8ac0" stroke="#3a8ac0" stroke-width=".8"/><path d="M680.8 686.3 713.4 695.5 711.9 702 679.2 692.8Z" fill="#3a8ac0" stroke="#3a8ac0" stroke-width=".8"/><path d="M679.2 692.8 711.9 702 711.2 708.2 678.6 699Z" fill="#3988bd" stroke="#3988bd" stroke-width=".8"/><path d="M678.6 699 711.2 708.2 711.4 714.1 678.8 704.9Z" fill="#3884b9" stroke="#3884b9" stroke-width=".8"/><path d="M678.8 704.9 711.4 714.1 712.4 719.8 679.8 710.6Z" fill="#3882b7" stroke="#3882b7" stroke-width=".8"/><path d="M1015.4 468.3 1041.5 475 1026 483 999.6 476.3Z" fill="#336a9c" stroke="#336a9c" stroke-width=".8"/><path d="M999.6 476.3 1026 483 1010.7 491.1 983.9 484.3Z" fill="#336a9c" stroke="#336a9c" stroke-width=".8"/><path d="M983.9 484.3 1010.7 491.1 995.5 499.3 968.3 492.5Z" fill="#336a9c" stroke="#336a9c" stroke-width=".8"/><path d="M968.3 492.5 995.5 499.3 980.4 507.6 952.9 500.7Z" fill="#336a9c" stroke="#336a9c" stroke-width=".8"/><path d="M952.9 500.7 980.4 507.6 965.5 516 937.7 509Z" fill="#336a9c" stroke="#336a9c" stroke-width=".8"/><path d="M937.7 509 965.5 516 950.9 524.5 922.7 517.4Z" fill="#336a9c" stroke="#336a9c" stroke-width=".8"/><path d="M922.7 517.4 950.9 524.5 936.4 533 908 525.9Z" fill="#336a9c" stroke="#336a9c" stroke-width=".8"/><path d="M908 525.9 936.4 533 922.3 541.6 893.6 534.4Z" fill="#336a9c" stroke="#336a9c" stroke-width=".8"/><path d="M893.6 534.4 922.3 541.6 908.5 550.2 879.4 543Z" fill="#336a9c" stroke="#336a9c" stroke-width=".8"/><path d="M879.4 543 908.5 550.2 895 558.9 865.7 551.5Z" fill="#336a9c" stroke="#336a9c" stroke-width=".8"/><path d="M865.7 551.5 895 558.9 881.8 567.6 852.3 560.1Z" fill="#336a9c" stroke="#336a9c" stroke-width=".8"/><path d="M852.3 560.1 881.8 567.6 869.1 576.3 839.3 568.7Z" fill="#336a9c" stroke="#336a9c" stroke-width=".8"/><path d="M839.3 568.7 869.1 576.3 856.8 585 826.8 577.3Z" fill="#336a9c" stroke="#336a9c" stroke-width=".8"/><path d="M826.8 577.3 856.8 585 845 593.6 814.7 585.9Z" fill="#336a9c" stroke="#336a9c" stroke-width=".8"/><path d="M814.7 585.9 845 593.6 833.7 602.3 803.2 594.5Z" fill="#336a9c" stroke="#336a9c" stroke-width=".8"/><path d="M803.2 594.5 833.7 602.3 822.9 610.8 792.2 603Z" fill="#336b9d" stroke="#336b9d" stroke-width=".8"/><path d="M792.2 603 822.9 610.8 812.7 619.4 781.8 611.4Z" fill="#336c9e" stroke="#336c9e" stroke-width=".8"/><path d="M781.8 611.4 812.7 619.4 803.1 627.8 772.1 619.7Z" fill="#346ea0" stroke="#346ea0" stroke-width=".8"/><path d="M772.1 619.7 803.1 627.8 794.1 636.1 762.9 628Z" fill="#3470a3" stroke="#3470a3" stroke-width=".8"/><path d="M762.9 628 794.1 636.1 785.7 644.3 754.4 636.1Z" fill="#3573a6" stroke="#3573a6" stroke-width=".8"/><path d="M754.4 636.1 785.7 644.3 778.1 652.4 746.6 644.2Z" fill="#3677aa" stroke="#3677aa" stroke-width=".8"/><path d="M746.6 644.2 778.1 652.4 771.1 660.4 739.6 652Z" fill="#367aae" stroke="#367aae" stroke-width=".8"/><path d="M739.6 652 771.1 660.4 764.9 668.1 733.2 659.8Z" fill="#377eb2" stroke="#377eb2" stroke-width=".8"/><path d="M733.2 659.8 764.9 668.1 759.4 675.7 727.7 667.3Z" fill="#3881b6" stroke="#3881b6" stroke-width=".8"/><path d="M727.7 667.3 759.4 675.7 754.7 683.1 722.9 674.7Z" fill="#3884b9" stroke="#3884b9" stroke-width=".8"/><path d="M722.9 674.7 754.7 683.1 750.8 690.3 718.9 681.8Z" fill="#3987bc" stroke="#3987bc" stroke-width=".8"/><path d="M718.9 681.8 750.8 690.3 747.7 697.3 715.7 688.8Z" fill="#398abf" stroke="#398abf" stroke-width=".8"/><path d="M715.7 688.8 747.7 697.3 745.3 704 713.4 695.5Z" fill="#3a8bc1" stroke="#3a8bc1" stroke-width=".8"/><path d="M713.4 695.5 745.3 704 743.8 710.5 711.9 702Z" fill="#3a8cc1" stroke="#3a8cc1" stroke-width=".8"/><path d="M711.9 702 743.8 710.5 743.2 716.7 711.2 708.2Z" fill="#398abf" stroke="#398abf" stroke-width=".8"/><path d="M711.2 708.2 743.2 716.7 743.3 722.7 711.4 714.1Z" fill="#3987bc" stroke="#3987bc" stroke-width=".8"/><path d="M711.4 714.1 743.3 722.7 744.3 728.3 712.4 719.8Z" fill="#3985ba" stroke="#3985ba" stroke-width=".8"/><path d="M1041.5 475 1066.6 481.7 1051.5 489.7 1026 483Z" fill="#336a9c" stroke="#336a9c" stroke-width=".8"/><path d="M1026 483 1051.5 489.7 1036.6 497.8 1010.7 491.1Z" fill="#336a9c" stroke="#336a9c" stroke-width=".8"/><path d="M1010.7 491.1 1036.6 497.8 1021.7 506.1 995.5 499.3Z" fill="#336a9c" stroke="#336a9c" stroke-width=".8"/><path d="M995.5 499.3 1021.7 506.1 1007 514.4 980.4 507.6Z" fill="#336a9c" stroke="#336a9c" stroke-width=".8"/><path d="M980.4 507.6 1007 514.4 992.5 522.8 965.5 516Z" fill="#336a9c" stroke="#336a9c" stroke-width=".8"/><path d="M965.5 516 992.5 522.8 978.2 531.3 950.9 524.5Z" fill="#336a9c" stroke="#336a9c" stroke-width=".8"/><path d="M950.9 524.5 978.2 531.3 964.1 539.9 936.4 533Z" fill="#336a9c" stroke="#336a9c" stroke-width=".8"/><path d="M936.4 533 964.1 539.9 950.3 548.6 922.3 541.6Z" fill="#336a9c" stroke="#336a9c" stroke-width=".8"/><path d="M922.3 541.6 950.3 548.6 936.7 557.3 908.5 550.2Z" fill="#336a9c" stroke="#336a9c" stroke-width=".8"/><path d="M908.5 550.2 936.7 557.3 923.5 566 895 558.9Z" fill="#336a9c" stroke="#336a9c" stroke-width=".8"/><path d="M895 558.9 923.5 566 910.7 574.7 881.8 567.6Z" fill="#336a9c" stroke="#336a9c" stroke-width=".8"/><path d="M881.8 567.6 910.7 574.7 898.2 583.5 869.1 576.3Z" fill="#336a9c" stroke="#336a9c" stroke-width=".8"/><path d="M869.1 576.3 898.2 583.5 886.1 592.2 856.8 585Z" fill="#336a9c" stroke="#336a9c" stroke-width=".8"/><path d="M856.8 585 886.1 592.2 874.6 601 845 593.6Z" fill="#336a9c" stroke="#336a9c" stroke-width=".8"/><path d="M845 593.6 874.6 601 863.5 609.7 833.7 602.3Z" fill="#336a9c" stroke="#336a9c" stroke-width=".8"/><path d="M833.7 602.3 863.5 609.7 852.9 618.3 822.9 610.8Z" fill="#336b9d" stroke="#336b9d" stroke-width=".8"/><path d="M822.9 610.8 852.9 618.3 842.9 626.9 812.7 619.4Z" fill="#336c9e" stroke="#336c9e" stroke-width=".8"/><path d="M812.7 619.4 842.9 626.9 833.4 635.4 803.1 627.8Z" fill="#346ea0" stroke="#346ea0" stroke-width=".8"/><path d="M803.1 627.8 833.4 635.4 824.6 643.8 794.1 636.1Z" fill="#3471a3" stroke="#3471a3" stroke-width=".8"/><path d="M794.1 636.1 824.6 643.8 816.4 652 785.7 644.3Z" fill="#3574a7" stroke="#3574a7" stroke-width=".8"/><path d="M785.7 644.3 816.4 652 808.9 660.2 778.1 652.4Z" fill="#3677ab" stroke="#3677ab" stroke-width=".8"/><path d="M778.1 652.4 808.9 660.2 802 668.1 771.1 660.4Z" fill="#367baf" stroke="#367baf" stroke-width=".8"/><path d="M771.1 660.4 802 668.1 795.9 676 764.9 668.1Z" fill="#377eb3" stroke="#377eb3" stroke-width=".8"/><path d="M764.9 668.1 795.9 676 790.5 683.6 759.4 675.7Z" fill="#3882b7" stroke="#3882b7" stroke-width=".8"/><path d="M759.4 675.7 790.5 683.6 785.9 691 754.7 683.1Z" fill="#3985ba" stroke="#3985ba" stroke-width=".8"/><path d="M754.7 683.1 785.9 691 782 698.2 750.8 690.3Z" fill="#3988be" stroke="#3988be" stroke-width=".8"/><path d="M750.8 690.3 782 698.2 778.9 705.2 747.7 697.3Z" fill="#3a8bc1" stroke="#3a8bc1" stroke-width=".8"/><path d="M747.7 697.3 778.9 705.2 776.6 711.9 745.3 704Z" fill="#3a8dc3" stroke="#3a8dc3" stroke-width=".8"/><path d="M745.3 704 776.6 711.9 775.1 718.4 743.8 710.5Z" fill="#3a8dc3" stroke="#3a8dc3" stroke-width=".8"/><path d="M743.8 710.5 775.1 718.4 774.4 724.6 743.2 716.7Z" fill="#3a8cc2" stroke="#3a8cc2" stroke-width=".8"/><path d="M743.2 716.7 774.4 724.6 774.5 730.5 743.3 722.7Z" fill="#398abf" stroke="#398abf" stroke-width=".8"/><path d="M743.3 722.7 774.5 730.5 775.4 736.2 744.3 728.3Z" fill="#3988be" stroke="#3988be" stroke-width=".8"/><path d="M1066.6 481.7 1090.7 488.2 1076.1 496.2 1051.5 489.7Z" fill="#336a9c" stroke="#336a9c" stroke-width=".8"/><path d="M1051.5 489.7 1076.1 496.2 1061.5 504.4 1036.6 497.8Z" fill="#336a9c" stroke="#336a9c" stroke-width=".8"/><path d="M1036.6 497.8 1061.5 504.4 1047.1 512.6 1021.7 506.1Z" fill="#336a9c" stroke="#336a9c" stroke-width=".8"/><path d="M1021.7 506.1 1047.1 512.6 1032.8 521 1007 514.4Z" fill="#336a9c" stroke="#336a9c" stroke-width=".8"/><path d="M1007 514.4 1032.8 521 1018.6 529.4 992.5 522.8Z" fill="#336a9c" stroke="#336a9c" stroke-width=".8"/><path d="M992.5 522.8 1018.6 529.4 1004.7 538 978.2 531.3Z" fill="#336a9c" stroke="#336a9c" stroke-width=".8"/><path d="M978.2 531.3 1004.7 538 990.9 546.6 964.1 539.9Z" fill="#336a9c" stroke="#336a9c" stroke-width=".8"/><path d="M964.1 539.9 990.9 546.6 977.4 555.3 950.3 548.6Z" fill="#336a9c" stroke="#336a9c" stroke-width=".8"/><path d="M950.3 548.6 977.4 555.3 964.2 564 936.7 557.3Z" fill="#336a9c" stroke="#336a9c" stroke-width=".8"/><path d="M936.7 557.3 964.2 564 951.3 572.8 923.5 566Z" fill="#336a9c" stroke="#336a9c" stroke-width=".8"/><path d="M923.5 566 951.3 572.8 938.7 581.6 910.7 574.7Z" fill="#336a9c" stroke="#336a9c" stroke-width=".8"/><path d="M910.7 574.7 938.7 581.6 926.5 590.4 898.2 583.5Z" fill="#336a9c" stroke="#336a9c" stroke-width=".8"/><path d="M898.2 583.5 926.5 590.4 914.7 599.2 886.1 592.2Z" fill="#336a9c" stroke="#336a9c" stroke-width=".8"/><path d="M886.1 592.2 914.7 599.2 903.4 607.9 874.6 601Z" fill="#336a9c" stroke="#336a9c" stroke-width=".8"/><path d="M874.6 601 903.4 607.9 892.5 616.7 863.5 609.7Z" fill="#336a9c" stroke="#336a9c" stroke-width=".8"/><path d="M863.5 609.7 892.5 616.7 882.2 625.4 852.9 618.3Z" fill="#336b9d" stroke="#336b9d" stroke-width=".8"/><path d="M852.9 618.3 882.2 625.4 872.4 634 842.9 626.9Z" fill="#336c9e" stroke="#336c9e" stroke-width=".8"/><path d="M842.9 626.9 872.4 634 863.1 642.5 833.4 635.4Z" fill="#346ea1" stroke="#346ea1" stroke-width=".8"/><path d="M833.4 635.4 863.1 642.5 854.4 650.9 824.6 643.8Z" fill="#3471a4" stroke="#3471a4" stroke-width=".8"/><path d="M824.6 643.8 854.4 650.9 846.4 659.2 816.4 652Z" fill="#3574a7" stroke="#3574a7" stroke-width=".8"/><path d="M816.4 652 846.4 659.2 839 667.4 808.9 660.2Z" fill="#3678ab" stroke="#3678ab" stroke-width=".8"/><path d="M808.9 660.2 839 667.4 832.3 675.4 802 668.1Z" fill="#377baf" stroke="#377baf" stroke-width=".8"/><path d="M802 668.1 832.3 675.4 826.3 683.2 795.9 676Z" fill="#377fb3" stroke="#377fb3" stroke-width=".8"/><path d="M795.9 676 826.3 683.2 821 690.9 790.5 683.6Z" fill="#3883b8" stroke="#3883b8" stroke-width=".8"/><path d="M790.5 683.6 821 690.9 816.4 698.3 785.9 691Z" fill="#3986bb" stroke="#3986bb" stroke-width=".8"/><path d="M785.9 691 816.4 698.3 812.5 705.5 782 698.2Z" fill="#3989bf" stroke="#3989bf" stroke-width=".8"/><path d="M782 698.2 812.5 705.5 809.5 712.5 778.9 705.2Z" fill="#3a8cc2" stroke="#3a8cc2" stroke-width=".8"/><path d="M778.9 705.2 809.5 712.5 807.1 719.2 776.6 711.9Z" fill="#3a8ec4" stroke="#3a8ec4" stroke-width=".8"/><path d="M776.6 711.9 807.1 719.2 805.6 725.7 775.1 718.4Z" fill="#3b8fc5" stroke="#3b8fc5" stroke-width=".8"/><path d="M775.1 718.4 805.6 725.7 804.8 731.8 774.4 724.6Z" fill="#3a8ec4" stroke="#3a8ec4" stroke-width=".8"/><path d="M774.4 724.6 804.8 731.8 804.9 737.7 774.5 730.5Z" fill="#3a8cc2" stroke="#3a8cc2" stroke-width=".8"/><path d="M774.5 730.5 804.9 737.7 805.6 743.3 775.4 736.2Z" fill="#3a8bc1" stroke="#3a8bc1" stroke-width=".8"/><path d="M1090.7 488.2 1113.9 494.6 1099.7 502.6 1076.1 496.2Z" fill="#336a9c" stroke="#336a9c" stroke-width=".8"/><path d="M1076.1 496.2 1099.7 502.6 1085.5 510.8 1061.5 504.4Z" fill="#336a9c" stroke="#336a9c" stroke-width=".8"/><path d="M1061.5 504.4 1085.5 510.8 1071.5 519 1047.1 512.6Z" fill="#336a9c" stroke="#336a9c" stroke-width=".8"/><path d="M1047.1 512.6 1071.5 519 1057.6 527.4 1032.8 521Z" fill="#336a9c" stroke="#336a9c" stroke-width=".8"/><path d="M1032.8 521 1057.6 527.4 1043.8 535.9 1018.6 529.4Z" fill="#336a9c" stroke="#336a9c" stroke-width=".8"/><path d="M1018.6 529.4 1043.8 535.9 1030.3 544.4 1004.7 538Z" fill="#336a9c" stroke="#336a9c" stroke-width=".8"/><path d="M1004.7 538 1030.3 544.4 1016.9 553 990.9 546.6Z" fill="#336a9c" stroke="#336a9c" stroke-width=".8"/><path d="M990.9 546.6 1016.9 553 1003.7 561.7 977.4 555.3Z" fill="#336a9c" stroke="#336a9c" stroke-width=".8"/><path d="M977.4 555.3 1003.7 561.7 990.8 570.5 964.2 564Z" fill="#336a9c" stroke="#336a9c" stroke-width=".8"/><path d="M964.2 564 990.8 570.5 978.2 579.3 951.3 572.8Z" fill="#336a9c" stroke="#336a9c" stroke-width=".8"/><path d="M951.3 572.8 978.2 579.3 966 588.1 938.7 581.6Z" fill="#336a9c" stroke="#336a9c" stroke-width=".8"/><path d="M938.7 581.6 966 588.1 954.1 596.9 926.5 590.4Z" fill="#336a9c" stroke="#336a9c" stroke-width=".8"/><path d="M926.5 590.4 954.1 596.9 942.6 605.7 914.7 599.2Z" fill="#336a9c" stroke="#336a9c" stroke-width=".8"/><path d="M914.7 599.2 942.6 605.7 931.5 614.5 903.4 607.9Z" fill="#336a9c" stroke="#336a9c" stroke-width=".8"/><path d="M903.4 607.9 931.5 614.5 920.9 623.3 892.5 616.7Z" fill="#336a9c" stroke="#336a9c" stroke-width=".8"/><path d="M892.5 616.7 920.9 623.3 910.8 632 882.2 625.4Z" fill="#336b9d" stroke="#336b9d" stroke-width=".8"/><path d="M882.2 625.4 910.8 632 901.1 640.6 872.4 634Z" fill="#336c9e" stroke="#336c9e" stroke-width=".8"/><path d="M872.4 634 901.1 640.6 892.1 649.1 863.1 642.5Z" fill="#346ea1" stroke="#346ea1" stroke-width=".8"/><path d="M863.1 642.5 892.1 649.1 883.6 657.6 854.4 650.9Z" fill="#3471a4" stroke="#3471a4" stroke-width=".8"/><path d="M854.4 650.9 883.6 657.6 875.7 665.9 846.4 659.2Z" fill="#3574a8" stroke="#3574a8" stroke-width=".8"/><path d="M846.4 659.2 875.7 665.9 868.4 674.1 839 667.4Z" fill="#3678ac" stroke="#3678ac" stroke-width=".8"/><path d="M839 667.4 868.4 674.1 861.8 682.1 832.3 675.4Z" fill="#377cb0" stroke="#377cb0" stroke-width=".8"/><path d="M832.3 675.4 861.8 682.1 855.9 689.9 826.3 683.2Z" fill="#3780b4" stroke="#3780b4" stroke-width=".8"/><path d="M826.3 683.2 855.9 689.9 850.7 697.5 821 690.9Z" fill="#3884b8" stroke="#3884b8" stroke-width=".8"/><path d="M821 690.9 850.7 697.5 846.1 704.9 816.4 698.3Z" fill="#3987bc" stroke="#3987bc" stroke-width=".8"/><path d="M816.4 698.3 846.1 704.9 842.3 712.1 812.5 705.5Z" fill="#3a8ac0" stroke="#3a8ac0" stroke-width=".8"/><path d="M812.5 705.5 842.3 712.1 839.3 719.1 809.5 712.5Z" fill="#3a8dc3" stroke="#3a8dc3" stroke-width=".8"/><path d="M809.5 712.5 839.3 719.1 836.9 725.8 807.1 719.2Z" fill="#3b8fc5" stroke="#3b8fc5" stroke-width=".8"/><path d="M807.1 719.2 836.9 725.8 835.3 732.2 805.6 725.7Z" fill="#3b90c7" stroke="#3b90c7" stroke-width=".8"/><path d="M805.6 725.7 835.3 732.2 834.5 738.4 804.8 731.8Z" fill="#3b90c6" stroke="#3b90c6" stroke-width=".8"/><path d="M804.8 731.8 834.5 738.4 834.4 744.2 804.9 737.7Z" fill="#3a8fc5" stroke="#3a8fc5" stroke-width=".8"/><path d="M804.9 737.7 834.4 744.2 835.1 749.7 805.6 743.3Z" fill="#3a8ec4" stroke="#3a8ec4" stroke-width=".8"/><path d="M1113.9 494.6 1136 501 1122.3 509 1099.7 502.6Z" fill="#336a9c" stroke="#336a9c" stroke-width=".8"/><path d="M1099.7 502.6 1122.3 509 1108.6 517.1 1085.5 510.8Z" fill="#336a9c" stroke="#336a9c" stroke-width=".8"/><path d="M1085.5 510.8 1108.6 517.1 1095 525.3 1071.5 519Z" fill="#336a9c" stroke="#336a9c" stroke-width=".8"/><path d="M1071.5 519 1095 525.3 1081.5 533.7 1057.6 527.4Z" fill="#336a9c" stroke="#336a9c" stroke-width=".8"/><path d="M1057.6 527.4 1081.5 533.7 1068.2 542.1 1043.8 535.9Z" fill="#336a9c" stroke="#336a9c" stroke-width=".8"/><path d="M1043.8 535.9 1068.2 542.1 1055 550.6 1030.3 544.4Z" fill="#336a9c" stroke="#336a9c" stroke-width=".8"/><path d="M1030.3 544.4 1055 550.6 1042 559.3 1016.9 553Z" fill="#336a9c" stroke="#336a9c" stroke-width=".8"/><path d="M1016.9 553 1042 559.3 1029.2 567.9 1003.7 561.7Z" fill="#336a9c" stroke="#336a9c" stroke-width=".8"/><path d="M1003.7 561.7 1029.2 567.9 1016.6 576.7 990.8 570.5Z" fill="#336a9c" stroke="#336a9c" stroke-width=".8"/><path d="M990.8 570.5 1016.6 576.7 1004.4 585.5 978.2 579.3Z" fill="#336a9c" stroke="#336a9c" stroke-width=".8"/><path d="M978.2 579.3 1004.4 585.5 992.5 594.3 966 588.1Z" fill="#336a9c" stroke="#336a9c" stroke-width=".8"/><path d="M966 588.1 992.5 594.3 980.9 603.1 954.1 596.9Z" fill="#336a9c" stroke="#336a9c" stroke-width=".8"/><path d="M954.1 596.9 980.9 603.1 969.6 611.9 942.6 605.7Z" fill="#336a9c" stroke="#336a9c" stroke-width=".8"/><path d="M942.6 605.7 969.6 611.9 958.8 620.7 931.5 614.5Z" fill="#336a9c" stroke="#336a9c" stroke-width=".8"/><path d="M931.5 614.5 958.8 620.7 948.5 629.4 920.9 623.3Z" fill="#336a9c" stroke="#336a9c" stroke-width=".8"/><path d="M920.9 623.3 948.5 629.4 938.6 638.1 910.8 632Z" fill="#336b9d" stroke="#336b9d" stroke-width=".8"/><path d="M910.8 632 938.6 638.1 929.2 646.8 901.1 640.6Z" fill="#336c9e" stroke="#336c9e" stroke-width=".8"/><path d="M901.1 640.6 929.2 646.8 920.3 655.3 892.1 649.1Z" fill="#346ea1" stroke="#346ea1" stroke-width=".8"/><path d="M892.1 649.1 920.3 655.3 912 663.7 883.6 657.6Z" fill="#3471a4" stroke="#3471a4" stroke-width=".8"/><path d="M883.6 657.6 912 663.7 904.3 672 875.7 665.9Z" fill="#3575a8" stroke="#3575a8" stroke-width=".8"/><path d="M875.7 665.9 904.3 672 897.1 680.2 868.4 674.1Z" fill="#3678ac" stroke="#3678ac" stroke-width=".8"/><path d="M868.4 674.1 897.1 680.2 890.6 688.2 861.8 682.1Z" fill="#377cb0" stroke="#377cb0" stroke-width=".8"/><path d="M861.8 682.1 890.6 688.2 884.8 696 855.9 689.9Z" fill="#3880b5" stroke="#3880b5" stroke-width=".8"/><path d="M855.9 689.9 884.8 696 879.6 703.6 850.7 697.5Z" fill="#3884b9" stroke="#3884b9" stroke-width=".8"/><path d="M850.7 697.5 879.6 703.6 875.1 711 846.1 704.9Z" fill="#3988bd" stroke="#3988bd" stroke-width=".8"/><path d="M846.1 704.9 875.1 711 871.4 718.1 842.3 712.1Z" fill="#3a8bc1" stroke="#3a8bc1" stroke-width=".8"/><path d="M842.3 712.1 871.4 718.1 868.3 725 839.3 719.1Z" fill="#3a8ec4" stroke="#3a8ec4" stroke-width=".8"/><path d="M839.3 719.1 868.3 725 865.9 731.7 836.9 725.8Z" fill="#3b90c7" stroke="#3b90c7" stroke-width=".8"/><path d="M836.9 725.8 865.9 731.7 864.3 738.1 835.3 732.2Z" fill="#3b91c8" stroke="#3b91c8" stroke-width=".8"/><path d="M835.3 732.2 864.3 738.1 863.4 744.2 834.5 738.4Z" fill="#3b91c8" stroke="#3b91c8" stroke-width=".8"/><path d="M834.5 738.4 863.4 744.2 863.2 750 834.4 744.2Z" fill="#3b91c7" stroke="#3b91c7" stroke-width=".8"/><path d="M834.4 744.2 863.2 750 863.8 755.4 835.1 749.7Z" fill="#3b90c7" stroke="#3b90c7" stroke-width=".8"/><path d="M1136 501 1157.1 507.3 1143.8 515.2 1122.3 509Z" fill="#336a9c" stroke="#336a9c" stroke-width=".8"/><path d="M1122.3 509 1143.8 515.2 1130.6 523.3 1108.6 517.1Z" fill="#336a9c" stroke="#336a9c" stroke-width=".8"/><path d="M1108.6 517.1 1130.6 523.3 1117.5 531.5 1095 525.3Z" fill="#336a9c" stroke="#336a9c" stroke-width=".8"/><path d="M1095 525.3 1117.5 531.5 1104.4 539.8 1081.5 533.7Z" fill="#336a9c" stroke="#336a9c" stroke-width=".8"/><path d="M1081.5 533.7 1104.4 539.8 1091.5 548.2 1068.2 542.1Z" fill="#336a9c" stroke="#336a9c" stroke-width=".8"/><path d="M1068.2 542.1 1091.5 548.2 1078.7 556.7 1055 550.6Z" fill="#336a9c" stroke="#336a9c" stroke-width=".8"/><path d="M1055 550.6 1078.7 556.7 1066.1 565.3 1042 559.3Z" fill="#336a9c" stroke="#336a9c" stroke-width=".8"/><path d="M1042 559.3 1066.1 565.3 1053.7 573.9 1029.2 567.9Z" fill="#336a9c" stroke="#336a9c" stroke-width=".8"/><path d="M1029.2 567.9 1053.7 573.9 1041.6 582.6 1016.6 576.7Z" fill="#336a9c" stroke="#336a9c" stroke-width=".8"/><path d="M1016.6 576.7 1041.6 582.6 1029.7 591.3 1004.4 585.5Z" fill="#336a9c" stroke="#336a9c" stroke-width=".8"/><path d="M1004.4 585.5 1029.7 591.3 1018.1 600.1 992.5 594.3Z" fill="#336a9c" stroke="#336a9c" stroke-width=".8"/><path d="M992.5 594.3 1018.1 600.1 1006.8 608.9 980.9 603.1Z" fill="#336a9c" stroke="#336a9c" stroke-width=".8"/><path d="M980.9 603.1 1006.8 608.9 995.9 617.7 969.6 611.9Z" fill="#336a9c" stroke="#336a9c" stroke-width=".8"/><path d="M969.6 611.9 995.9 617.7 985.4 626.5 958.8 620.7Z" fill="#336a9c" stroke="#336a9c" stroke-width=".8"/><path d="M958.8 620.7 985.4 626.5 975.2 635.2 948.5 629.4Z" fill="#336a9c" stroke="#336a9c" stroke-width=".8"/><path d="M948.5 629.4 975.2 635.2 965.6 643.9 938.6 638.1Z" fill="#336b9d" stroke="#336b9d" stroke-width=".8"/><path d="M938.6 638.1 965.6 643.9 956.4 652.4 929.2 646.8Z" fill="#336c9e" stroke="#336c9e" stroke-width=".8"/><path d="M929.2 646.8 956.4 652.4 947.7 661 920.3 655.3Z" fill="#346fa1" stroke="#346fa1" stroke-width=".8"/><path d="M920.3 655.3 947.7 661 939.6 669.3 912 663.7Z" fill="#3572a4" stroke="#3572a4" stroke-width=".8"/><path d="M912 663.7 939.6 669.3 932 677.6 904.3 672Z" fill="#3575a8" stroke="#3575a8" stroke-width=".8"/><path d="M904.3 672 932 677.6 925.1 685.7 897.1 680.2Z" fill="#3679ad" stroke="#3679ad" stroke-width=".8"/><path d="M897.1 680.2 925.1 685.7 918.7 693.7 890.6 688.2Z" fill="#377db1" stroke="#377db1" stroke-width=".8"/><path d="M890.6 688.2 918.7 693.7 912.9 701.4 884.8 696Z" fill="#3881b6" stroke="#3881b6" stroke-width=".8"/><path d="M884.8 696 912.9 701.4 907.8 709 879.6 703.6Z" fill="#3985ba" stroke="#3985ba" stroke-width=".8"/><path d="M879.6 703.6 907.8 709 903.4 716.3 875.1 711Z" fill="#3989be" stroke="#3989be" stroke-width=".8"/><path d="M875.1 711 903.4 716.3 899.6 723.5 871.4 718.1Z" fill="#3a8cc2" stroke="#3a8cc2" stroke-width=".8"/><path d="M871.4 718.1 899.6 723.5 896.5 730.3 868.3 725Z" fill="#3b8fc5" stroke="#3b8fc5" stroke-width=".8"/><path d="M868.3 725 896.5 730.3 894.1 736.9 865.9 731.7Z" fill="#3b91c8" stroke="#3b91c8" stroke-width=".8"/><path d="M865.9 731.7 894.1 736.9 892.4 743.2 864.3 738.1Z" fill="#3b93c9" stroke="#3b93c9" stroke-width=".8"/><path d="M864.3 738.1 892.4 743.2 891.4 749.3 863.4 744.2Z" fill="#3b93ca" stroke="#3b93ca" stroke-width=".8"/><path d="M863.4 744.2 891.4 749.3 891.1 755 863.2 750Z" fill="#3b93c9" stroke="#3b93c9" stroke-width=".8"/><path d="M863.2 750 891.1 755 891.5 760.4 863.8 755.4Z" fill="#3b93c9" stroke="#3b93c9" stroke-width=".8"/><path d="M1157.1 507.3 1177.2 513.6 1164.4 521.4 1143.8 515.2Z" fill="#336a9c" stroke="#336a9c" stroke-width=".8"/><path d="M1143.8 515.2 1164.4 521.4 1151.7 529.4 1130.6 523.3Z" fill="#336a9c" stroke="#336a9c" stroke-width=".8"/><path d="M1130.6 523.3 1151.7 529.4 1139 537.5 1117.5 531.5Z" fill="#336a9c" stroke="#336a9c" stroke-width=".8"/><path d="M1117.5 531.5 1139 537.5 1126.4 545.7 1104.4 539.8Z" fill="#336a9c" stroke="#336a9c" stroke-width=".8"/><path d="M1104.4 539.8 1126.4 545.7 1113.9 554.1 1091.5 548.2Z" fill="#336a9c" stroke="#336a9c" stroke-width=".8"/><path d="M1091.5 548.2 1113.9 554.1 1101.6 562.5 1078.7 556.7Z" fill="#336a9c" stroke="#336a9c" stroke-width=".8"/><path d="M1078.7 556.7 1101.6 562.5 1089.4 571 1066.1 565.3Z" fill="#336a9c" stroke="#336a9c" stroke-width=".8"/><path d="M1066.1 565.3 1089.4 571 1077.4 579.6 1053.7 573.9Z" fill="#336a9c" stroke="#336a9c" stroke-width=".8"/><path d="M1053.7 573.9 1077.4 579.6 1065.6 588.2 1041.6 582.6Z" fill="#336a9c" stroke="#336a9c" stroke-width=".8"/><path d="M1041.6 582.6 1065.6 588.2 1054.1 596.9 1029.7 591.3Z" fill="#336a9c" stroke="#336a9c" stroke-width=".8"/><path d="M1029.7 591.3 1054.1 596.9 1042.8 605.7 1018.1 600.1Z" fill="#336a9c" stroke="#336a9c" stroke-width=".8"/><path d="M1018.1 600.1 1042.8 605.7 1031.9 614.4 1006.8 608.9Z" fill="#336a9c" stroke="#336a9c" stroke-width=".8"/><path d="M1006.8 608.9 1031.9 614.4 1021.3 623.1 995.9 617.7Z" fill="#336a9c" stroke="#336a9c" stroke-width=".8"/><path d="M995.9 617.7 1021.3 623.1 1011 631.8 985.4 626.5Z" fill="#336a9c" stroke="#336a9c" stroke-width=".8"/><path d="M985.4 626.5 1011 631.8 1001.2 640.5 975.2 635.2Z" fill="#336a9c" stroke="#336a9c" stroke-width=".8"/><path d="M975.2 635.2 1001.2 640.5 991.8 649.1 965.6 643.9Z" fill="#336b9d" stroke="#336b9d" stroke-width=".8"/><path d="M965.6 643.9 991.8 649.1 982.8 657.7 956.4 652.4Z" fill="#336c9e" stroke="#336c9e" stroke-width=".8"/><path d="M956.4 652.4 982.8 657.7 974.4 666.1 947.7 661Z" fill="#346fa1" stroke="#346fa1" stroke-width=".8"/><path d="M947.7 661 974.4 666.1 966.4 674.4 939.6 669.3Z" fill="#3572a5" stroke="#3572a5" stroke-width=".8"/><path d="M939.6 669.3 966.4 674.4 959 682.6 932 677.6Z" fill="#3575a9" stroke="#3575a9" stroke-width=".8"/><path d="M932 677.6 959 682.6 952.2 690.7 925.1 685.7Z" fill="#3679ad" stroke="#3679ad" stroke-width=".8"/><path d="M925.1 685.7 952.2 690.7 945.9 698.6 918.7 693.7Z" fill="#377db1" stroke="#377db1" stroke-width=".8"/><path d="M918.7 693.7 945.9 698.6 940.3 706.3 912.9 701.4Z" fill="#3881b6" stroke="#3881b6" stroke-width=".8"/><path d="M912.9 701.4 940.3 706.3 935.2 713.8 907.8 709Z" fill="#3986bb" stroke="#3986bb" stroke-width=".8"/><path d="M907.8 709 935.2 713.8 930.8 721.1 903.4 716.3Z" fill="#3989bf" stroke="#3989bf" stroke-width=".8"/><path d="M903.4 716.3 930.8 721.1 927 728.1 899.6 723.5Z" fill="#3a8dc3" stroke="#3a8dc3" stroke-width=".8"/><path d="M899.6 723.5 927 728.1 923.9 734.9 896.5 730.3Z" fill="#3b90c6" stroke="#3b90c6" stroke-width=".8"/><path d="M896.5 730.3 923.9 734.9 921.5 741.4 894.1 736.9Z" fill="#3b92c9" stroke="#3b92c9" stroke-width=".8"/><path d="M894.1 736.9 921.5 741.4 919.7 747.7 892.4 743.2Z" fill="#3c94ca" stroke="#3c94ca" stroke-width=".8"/><path d="M892.4 743.2 919.7 747.7 918.6 753.6 891.4 749.3Z" fill="#3c94cb" stroke="#3c94cb" stroke-width=".8"/><path d="M891.4 749.3 918.6 753.6 918.2 759.3 891.1 755Z" fill="#3c94cb" stroke="#3c94cb" stroke-width=".8"/><path d="M891.1 755 918.2 759.3 918.4 764.6 891.5 760.4Z" fill="#3c94cb" stroke="#3c94cb" stroke-width=".8"/><path d="M1177.2 513.6 1196.1 519.8 1183.9 527.5 1164.4 521.4Z" fill="#336a9c" stroke="#336a9c" stroke-width=".8"/><path d="M1164.4 521.4 1183.9 527.5 1171.7 535.4 1151.7 529.4Z" fill="#336a9c" stroke="#336a9c" stroke-width=".8"/><path d="M1151.7 529.4 1171.7 535.4 1159.5 543.4 1139 537.5Z" fill="#336a9c" stroke="#336a9c" stroke-width=".8"/><path d="M1139 537.5 1159.5 543.4 1147.3 551.6 1126.4 545.7Z" fill="#336a9c" stroke="#336a9c" stroke-width=".8"/><path d="M1126.4 545.7 1147.3 551.6 1135.3 559.8 1113.9 554.1Z" fill="#336a9c" stroke="#336a9c" stroke-width=".8"/><path d="M1113.9 554.1 1135.3 559.8 1123.4 568.1 1101.6 562.5Z" fill="#336a9c" stroke="#336a9c" stroke-width=".8"/><path d="M1101.6 562.5 1123.4 568.1 1111.6 576.6 1089.4 571Z" fill="#336a9c" stroke="#336a9c" stroke-width=".8"/><path d="M1089.4 571 1111.6 576.6 1100.1 585.1 1077.4 579.6Z" fill="#336a9c" stroke="#336a9c" stroke-width=".8"/><path d="M1077.4 579.6 1100.1 585.1 1088.7 593.6 1065.6 588.2Z" fill="#336a9c" stroke="#336a9c" stroke-width=".8"/><path d="M1065.6 588.2 1088.7 593.6 1077.5 602.2 1054.1 596.9Z" fill="#336a9c" stroke="#336a9c" stroke-width=".8"/><path d="M1054.1 596.9 1077.5 602.2 1066.6 610.9 1042.8 605.7Z" fill="#336a9c" stroke="#336a9c" stroke-width=".8"/><path d="M1042.8 605.7 1066.6 610.9 1056 619.5 1031.9 614.4Z" fill="#336a9c" stroke="#336a9c" stroke-width=".8"/><path d="M1031.9 614.4 1056 619.5 1045.8 628.2 1021.3 623.1Z" fill="#336a9c" stroke="#336a9c" stroke-width=".8"/><path d="M1021.3 623.1 1045.8 628.2 1035.8 636.8 1011 631.8Z" fill="#336a9c" stroke="#336a9c" stroke-width=".8"/><path d="M1011 631.8 1035.8 636.8 1026.3 645.4 1001.2 640.5Z" fill="#336a9c" stroke="#336a9c" stroke-width=".8"/><path d="M1001.2 640.5 1026.3 645.4 1017.1 653.9 991.8 649.1Z" fill="#336b9d" stroke="#336b9d" stroke-width=".8"/><path d="M991.8 649.1 1017.1 653.9 1008.4 662.4 982.8 657.7Z" fill="#336c9f" stroke="#336c9f" stroke-width=".8"/><path d="M982.8 657.7 1008.4 662.4 1000.2 670.7 974.4 666.1Z" fill="#346fa1" stroke="#346fa1" stroke-width=".8"/><path d="M974.4 666.1 1000.2 670.7 992.4 679 966.4 674.4Z" fill="#3572a5" stroke="#3572a5" stroke-width=".8"/><path d="M966.4 674.4 992.4 679 985.2 687.1 959 682.6Z" fill="#3575a9" stroke="#3575a9" stroke-width=".8"/><path d="M959 682.6 985.2 687.1 978.5 695.1 952.2 690.7Z" fill="#3679ad" stroke="#3679ad" stroke-width=".8"/><path d="M952.2 690.7 978.5 695.1 972.3 702.9 945.9 698.6Z" fill="#377eb2" stroke="#377eb2" stroke-width=".8"/><path d="M945.9 698.6 972.3 702.9 966.7 710.5 940.3 706.3Z" fill="#3882b7" stroke="#3882b7" stroke-width=".8"/><path d="M940.3 706.3 966.7 710.5 961.8 717.9 935.2 713.8Z" fill="#3986bb" stroke="#3986bb" stroke-width=".8"/><path d="M935.2 713.8 961.8 717.9 957.4 725.1 930.8 721.1Z" fill="#3a8ac0" stroke="#3a8ac0" stroke-width=".8"/><path d="M930.8 721.1 957.4 725.1 953.6 732.1 927 728.1Z" fill="#3a8ec4" stroke="#3a8ec4" stroke-width=".8"/><path d="M927 728.1 953.6 732.1 950.5 738.8 923.9 734.9Z" fill="#3b91c7" stroke="#3b91c7" stroke-width=".8"/><path d="M923.9 734.9 950.5 738.8 948 745.2 921.5 741.4Z" fill="#3b93ca" stroke="#3b93ca" stroke-width=".8"/><path d="M921.5 741.4 948 745.2 946.1 751.4 919.7 747.7Z" fill="#3c94cb" stroke="#3c94cb" stroke-width=".8"/><path d="M919.7 747.7 946.1 751.4 944.9 757.2 918.6 753.6Z" fill="#3c95cc" stroke="#3c95cc" stroke-width=".8"/><path d="M918.6 753.6 944.9 757.2 944.3 762.8 918.2 759.3Z" fill="#3c95cc" stroke="#3c95cc" stroke-width=".8"/><path d="M918.2 759.3 944.3 762.8 944.3 768.1 918.4 764.6Z" fill="#3c95cc" stroke="#3c95cc" stroke-width=".8"/><path d="M1196.1 519.8 1214 526 1202.3 533.6 1183.9 527.5Z" fill="#336a9c" stroke="#336a9c" stroke-width=".8"/><path d="M1183.9 527.5 1202.3 533.6 1190.6 541.4 1171.7 535.4Z" fill="#336a9c" stroke="#336a9c" stroke-width=".8"/><path d="M1171.7 535.4 1190.6 541.4 1178.9 549.2 1159.5 543.4Z" fill="#336a9c" stroke="#336a9c" stroke-width=".8"/><path d="M1159.5 543.4 1178.9 549.2 1167.2 557.2 1147.3 551.6Z" fill="#336a9c" stroke="#336a9c" stroke-width=".8"/><path d="M1147.3 551.6 1167.2 557.2 1155.7 565.4 1135.3 559.8Z" fill="#336a9c" stroke="#336a9c" stroke-width=".8"/><path d="M1135.3 559.8 1155.7 565.4 1144.2 573.6 1123.4 568.1Z" fill="#336a9c" stroke="#336a9c" stroke-width=".8"/><path d="M1123.4 568.1 1144.2 573.6 1132.9 581.9 1111.6 576.6Z" fill="#336a9c" stroke="#336a9c" stroke-width=".8"/><path d="M1111.6 576.6 1132.9 581.9 1121.8 590.3 1100.1 585.1Z" fill="#336a9c" stroke="#336a9c" stroke-width=".8"/><path d="M1100.1 585.1 1121.8 590.3 1110.8 598.7 1088.7 593.6Z" fill="#336a9c" stroke="#336a9c" stroke-width=".8"/><path d="M1088.7 593.6 1110.8 598.7 1100 607.2 1077.5 602.2Z" fill="#336a9c" stroke="#336a9c" stroke-width=".8"/><path d="M1077.5 602.2 1100 607.2 1089.5 615.7 1066.6 610.9Z" fill="#336a9c" stroke="#336a9c" stroke-width=".8"/><path d="M1066.6 610.9 1089.5 615.7 1079.3 624.3 1056 619.5Z" fill="#336a9c" stroke="#336a9c" stroke-width=".8"/><path d="M1056 619.5 1079.3 624.3 1069.3 632.8 1045.8 628.2Z" fill="#336a9c" stroke="#336a9c" stroke-width=".8"/><path d="M1045.8 628.2 1069.3 632.8 1059.7 641.3 1035.8 636.8Z" fill="#336a9c" stroke="#336a9c" stroke-width=".8"/><path d="M1035.8 636.8 1059.7 641.3 1050.5 649.8 1026.3 645.4Z" fill="#336a9c" stroke="#336a9c" stroke-width=".8"/><path d="M1026.3 645.4 1050.5 649.8 1041.6 658.2 1017.1 653.9Z" fill="#336b9d" stroke="#336b9d" stroke-width=".8"/><path d="M1017.1 653.9 1041.6 658.2 1033.1 666.6 1008.4 662.4Z" fill="#336c9f" stroke="#336c9f" stroke-width=".8"/><path d="M1008.4 662.4 1033.1 666.6 1025.1 674.9 1000.2 670.7Z" fill="#346fa1" stroke="#346fa1" stroke-width=".8"/><path d="M1000.2 670.7 1025.1 674.9 1017.5 683 992.4 679Z" fill="#3572a5" stroke="#3572a5" stroke-width=".8"/><path d="M992.4 679 1017.5 683 1010.5 691 985.2 687.1Z" fill="#3576a9" stroke="#3576a9" stroke-width=".8"/><path d="M985.2 687.1 1010.5 691 1003.9 698.9 978.5 695.1Z" fill="#367aad" stroke="#367aad" stroke-width=".8"/><path d="M978.5 695.1 1003.9 698.9 997.8 706.6 972.3 702.9Z" fill="#377eb2" stroke="#377eb2" stroke-width=".8"/><path d="M972.3 702.9 997.8 706.6 992.3 714.1 966.7 710.5Z" fill="#3882b7" stroke="#3882b7" stroke-width=".8"/><path d="M966.7 710.5 992.3 714.1 987.4 721.4 961.8 717.9Z" fill="#3986bc" stroke="#3986bc" stroke-width=".8"/><path d="M961.8 717.9 987.4 721.4 983 728.5 957.4 725.1Z" fill="#3a8ac0" stroke="#3a8ac0" stroke-width=".8"/><path d="M957.4 725.1 983 728.5 979.3 735.4 953.6 732.1Z" fill="#3a8ec4" stroke="#3a8ec4" stroke-width=".8"/><path d="M953.6 732.1 979.3 735.4 976.1 742 950.5 738.8Z" fill="#3b91c8" stroke="#3b91c8" stroke-width=".8"/><path d="M950.5 738.8 976.1 742 973.5 748.3 948 745.2Z" fill="#3b93ca" stroke="#3b93ca" stroke-width=".8"/><path d="M948 745.2 973.5 748.3 971.5 754.4 946.1 751.4Z" fill="#3c95cc" stroke="#3c95cc" stroke-width=".8"/><path d="M946.1 751.4 971.5 754.4 970.2 760.1 944.9 757.2Z" fill="#3c95cc" stroke="#3c95cc" stroke-width=".8"/><path d="M944.9 757.2 970.2 760.1 969.4 765.6 944.3 762.8Z" fill="#3c95cc" stroke="#3c95cc" stroke-width=".8"/><path d="M944.3 762.8 969.4 765.6 969.2 770.8 944.3 768.1Z" fill="#3c95cc" stroke="#3c95cc" stroke-width=".8"/><path d="M1214 526 1230.8 532.1 1219.6 539.6 1202.3 533.6Z" fill="#336a9c" stroke="#336a9c" stroke-width=".8"/><path d="M1202.3 533.6 1219.6 539.6 1208.4 547.2 1190.6 541.4Z" fill="#336a9c" stroke="#336a9c" stroke-width=".8"/><path d="M1190.6 541.4 1208.4 547.2 1197.2 554.9 1178.9 549.2Z" fill="#336a9c" stroke="#336a9c" stroke-width=".8"/><path d="M1178.9 549.2 1197.2 554.9 1186.1 562.8 1167.2 557.2Z" fill="#336a9c" stroke="#336a9c" stroke-width=".8"/><path d="M1167.2 557.2 1186.1 562.8 1175 570.8 1155.7 565.4Z" fill="#336a9c" stroke="#336a9c" stroke-width=".8"/><path d="M1155.7 565.4 1175 570.8 1164.1 578.8 1144.2 573.6Z" fill="#336a9c" stroke="#336a9c" stroke-width=".8"/><path d="M1144.2 573.6 1164.1 578.8 1153.2 587 1132.9 581.9Z" fill="#336a9c" stroke="#336a9c" stroke-width=".8"/><path d="M1132.9 581.9 1153.2 587 1142.5 595.2 1121.8 590.3Z" fill="#336a9c" stroke="#336a9c" stroke-width=".8"/><path d="M1121.8 590.3 1142.5 595.2 1131.9 603.5 1110.8 598.7Z" fill="#336a9c" stroke="#336a9c" stroke-width=".8"/><path d="M1110.8 598.7 1131.9 603.5 1121.6 611.9 1100 607.2Z" fill="#336a9c" stroke="#336a9c" stroke-width=".8"/><path d="M1100 607.2 1121.6 611.9 1111.5 620.3 1089.5 615.7Z" fill="#336a9c" stroke="#336a9c" stroke-width=".8"/><path d="M1089.5 615.7 1111.5 620.3 1101.6 628.7 1079.3 624.3Z" fill="#336a9c" stroke="#336a9c" stroke-width=".8"/><path d="M1079.3 624.3 1101.6 628.7 1092 637.1 1069.3 632.8Z" fill="#336a9c" stroke="#336a9c" stroke-width=".8"/><path d="M1069.3 632.8 1092 637.1 1082.7 645.5 1059.7 641.3Z" fill="#336a9c" stroke="#336a9c" stroke-width=".8"/><path d="M1059.7 641.3 1082.7 645.5 1073.7 653.8 1050.5 649.8Z" fill="#336a9c" stroke="#336a9c" stroke-width=".8"/><path d="M1050.5 649.8 1073.7 653.8 1065.1 662.1 1041.6 658.2Z" fill="#336b9d" stroke="#336b9d" stroke-width=".8"/><path d="M1041.6 658.2 1065.1 662.1 1056.9 670.3 1033.1 666.6Z" fill="#336c9f" stroke="#336c9f" stroke-width=".8"/><path d="M1033.1 666.6 1056.9 670.3 1049.1 678.5 1025.1 674.9Z" fill="#346fa1" stroke="#346fa1" stroke-width=".8"/><path d="M1025.1 674.9 1049.1 678.5 1041.7 686.5 1017.5 683Z" fill="#3572a5" stroke="#3572a5" stroke-width=".8"/><path d="M1017.5 683 1041.7 686.5 1034.8 694.4 1010.5 691Z" fill="#3576a9" stroke="#3576a9" stroke-width=".8"/><path d="M1010.5 691 1034.8 694.4 1028.4 702.1 1003.9 698.9Z" fill="#367aae" stroke="#367aae" stroke-width=".8"/><path d="M1003.9 698.9 1028.4 702.1 1022.5 709.7 997.8 706.6Z" fill="#377eb2" stroke="#377eb2" stroke-width=".8"/><path d="M997.8 706.6 1022.5 709.7 1017 717.1 992.3 714.1Z" fill="#3882b7" stroke="#3882b7" stroke-width=".8"/><path d="M992.3 714.1 1017 717.1 1012.1 724.3 987.4 721.4Z" fill="#3987bc" stroke="#3987bc" stroke-width=".8"/><path d="M987.4 721.4 1012.1 724.3 1007.8 731.2 983 728.5Z" fill="#3a8bc0" stroke="#3a8bc0" stroke-width=".8"/><path d="M983 728.5 1007.8 731.2 1004 738 979.3 735.4Z" fill="#3a8ec5" stroke="#3a8ec5" stroke-width=".8"/><path d="M979.3 735.4 1004 738 1000.8 744.5 976.1 742Z" fill="#3b91c8" stroke="#3b91c8" stroke-width=".8"/><path d="M976.1 742 1000.8 744.5 998.1 750.7 973.5 748.3Z" fill="#3c94cb" stroke="#3c94cb" stroke-width=".8"/><path d="M973.5 748.3 998.1 750.7 996 756.6 971.5 754.4Z" fill="#3c95cc" stroke="#3c95cc" stroke-width=".8"/><path d="M971.5 754.4 996 756.6 994.5 762.3 970.2 760.1Z" fill="#3c96cd" stroke="#3c96cd" stroke-width=".8"/><path d="M970.2 760.1 994.5 762.3 993.6 767.7 969.4 765.6Z" fill="#3c96cd" stroke="#3c96cd" stroke-width=".8"/><path d="M969.4 765.6 993.6 767.7 993.2 772.7 969.2 770.8Z" fill="#3c96cd" stroke="#3c96cd" stroke-width=".8"/><path d="M1230.8 532.1 1246.5 538.2 1235.8 545.5 1219.6 539.6Z" fill="#336a9c" stroke="#336a9c" stroke-width=".8"/><path d="M1219.6 539.6 1235.8 545.5 1225.1 553 1208.4 547.2Z" fill="#336a9c" stroke="#336a9c" stroke-width=".8"/><path d="M1208.4 547.2 1225.1 553 1214.5 560.5 1197.2 554.9Z" fill="#336a9c" stroke="#336a9c" stroke-width=".8"/><path d="M1197.2 554.9 1214.5 560.5 1203.9 568.2 1186.1 562.8Z" fill="#336a9c" stroke="#336a9c" stroke-width=".8"/><path d="M1186.1 562.8 1203.9 568.2 1193.3 576 1175 570.8Z" fill="#336a9c" stroke="#336a9c" stroke-width=".8"/><path d="M1175 570.8 1193.3 576 1182.8 583.9 1164.1 578.8Z" fill="#336a9c" stroke="#336a9c" stroke-width=".8"/><path d="M1164.1 578.8 1182.8 583.9 1172.4 591.9 1153.2 587Z" fill="#336a9c" stroke="#336a9c" stroke-width=".8"/><path d="M1153.2 587 1172.4 591.9 1162.2 600 1142.5 595.2Z" fill="#336a9c" stroke="#336a9c" stroke-width=".8"/><path d="M1142.5 595.2 1162.2 600 1152 608.1 1131.9 603.5Z" fill="#336a9c" stroke="#336a9c" stroke-width=".8"/><path d="M1131.9 603.5 1152 608.1 1142.1 616.3 1121.6 611.9Z" fill="#336a9c" stroke="#336a9c" stroke-width=".8"/><path d="M1121.6 611.9 1142.1 616.3 1132.4 624.5 1111.5 620.3Z" fill="#336a9c" stroke="#336a9c" stroke-width=".8"/><path d="M1111.5 620.3 1132.4 624.5 1122.9 632.7 1101.6 628.7Z" fill="#336a9c" stroke="#336a9c" stroke-width=".8"/><path d="M1101.6 628.7 1122.9 632.7 1113.6 641 1092 637.1Z" fill="#336a9c" stroke="#336a9c" stroke-width=".8"/><path d="M1092 637.1 1113.6 641 1104.7 649.2 1082.7 645.5Z" fill="#336a9c" stroke="#336a9c" stroke-width=".8"/><path d="M1082.7 645.5 1104.7 649.2 1096 657.4 1073.7 653.8Z" fill="#336a9c" stroke="#336a9c" stroke-width=".8"/><path d="M1073.7 653.8 1096 657.4 1087.7 665.5 1065.1 662.1Z" fill="#336b9d" stroke="#336b9d" stroke-width=".8"/><path d="M1065.1 662.1 1087.7 665.5 1079.7 673.6 1056.9 670.3Z" fill="#336c9f" stroke="#336c9f" stroke-width=".8"/><path d="M1056.9 670.3 1079.7 673.6 1072.1 681.5 1049.1 678.5Z" fill="#346fa1" stroke="#346fa1" stroke-width=".8"/><path d="M1049.1 678.5 1072.1 681.5 1065 689.4 1041.7 686.5Z" fill="#3572a5" stroke="#3572a5" stroke-width=".8"/><path d="M1041.7 686.5 1065 689.4 1058.2 697.1 1034.8 694.4Z" fill="#3576a9" stroke="#3576a9" stroke-width=".8"/><path d="M1034.8 694.4 1058.2 697.1 1051.9 704.7 1028.4 702.1Z" fill="#367aae" stroke="#367aae" stroke-width=".8"/><path d="M1028.4 702.1 1051.9 704.7 1046.1 712.2 1022.5 709.7Z" fill="#377eb2" stroke="#377eb2" stroke-width=".8"/><path d="M1022.5 709.7 1046.1 712.2 1040.8 719.4 1017 717.1Z" fill="#3883b7" stroke="#3883b7" stroke-width=".8"/><path d="M1017 717.1 1040.8 719.4 1035.9 726.5 1012.1 724.3Z" fill="#3987bc" stroke="#3987bc" stroke-width=".8"/><path d="M1012.1 724.3 1035.9 726.5 1031.6 733.3 1007.8 731.2Z" fill="#3a8bc1" stroke="#3a8bc1" stroke-width=".8"/><path d="M1007.8 731.2 1031.6 733.3 1027.8 739.9 1004 738Z" fill="#3a8fc5" stroke="#3a8fc5" stroke-width=".8"/><path d="M1004 738 1027.8 739.9 1024.5 746.2 1000.8 744.5Z" fill="#3b92c8" stroke="#3b92c8" stroke-width=".8"/><path d="M1000.8 744.5 1024.5 746.2 1021.7 752.3 998.1 750.7Z" fill="#3c94cb" stroke="#3c94cb" stroke-width=".8"/><path d="M998.1 750.7 1021.7 752.3 1019.5 758.2 996 756.6Z" fill="#3c96cc" stroke="#3c96cc" stroke-width=".8"/><path d="M996 756.6 1019.5 758.2 1017.9 763.7 994.5 762.3Z" fill="#3c96cd" stroke="#3c96cd" stroke-width=".8"/><path d="M994.5 762.3 1017.9 763.7 1016.7 769 993.6 767.7Z" fill="#3c96cd" stroke="#3c96cd" stroke-width=".8"/><path d="M993.6 767.7 1016.7 769 1016.1 773.9 993.2 772.7Z" fill="#3c96cd" stroke="#3c96cd" stroke-width=".8"/><path d="M1246.5 538.2 1261 544.3 1250.9 551.4 1235.8 545.5Z" fill="#336a9c" stroke="#336a9c" stroke-width=".8"/><path d="M1235.8 545.5 1250.9 551.4 1240.8 558.6 1225.1 553Z" fill="#336a9c" stroke="#336a9c" stroke-width=".8"/><path d="M1225.1 553 1240.8 558.6 1230.6 566 1214.5 560.5Z" fill="#336a9c" stroke="#336a9c" stroke-width=".8"/><path d="M1214.5 560.5 1230.6 566 1220.5 573.5 1203.9 568.2Z" fill="#336a9c" stroke="#336a9c" stroke-width=".8"/><path d="M1203.9 568.2 1220.5 573.5 1210.5 581.1 1193.3 576Z" fill="#336a9c" stroke="#336a9c" stroke-width=".8"/><path d="M1193.3 576 1210.5 581.1 1200.5 588.8 1182.8 583.9Z" fill="#336a9c" stroke="#336a9c" stroke-width=".8"/><path d="M1182.8 583.9 1200.5 588.8 1190.6 596.6 1172.4 591.9Z" fill="#336a9c" stroke="#336a9c" stroke-width=".8"/><path d="M1172.4 591.9 1190.6 596.6 1180.8 604.4 1162.2 600Z" fill="#336a9c" stroke="#336a9c" stroke-width=".8"/><path d="M1162.2 600 1180.8 604.4 1171.1 612.4 1152 608.1Z" fill="#336a9c" stroke="#336a9c" stroke-width=".8"/><path d="M1152 608.1 1171.1 612.4 1161.6 620.4 1142.1 616.3Z" fill="#336a9c" stroke="#336a9c" stroke-width=".8"/><path d="M1142.1 616.3 1161.6 620.4 1152.3 628.4 1132.4 624.5Z" fill="#336a9c" stroke="#336a9c" stroke-width=".8"/><path d="M1132.4 624.5 1152.3 628.4 1143.2 636.4 1122.9 632.7Z" fill="#336a9c" stroke="#336a9c" stroke-width=".8"/><path d="M1122.9 632.7 1143.2 636.4 1134.3 644.5 1113.6 641Z" fill="#336a9c" stroke="#336a9c" stroke-width=".8"/><path d="M1113.6 641 1134.3 644.5 1125.6 652.5 1104.7 649.2Z" fill="#336a9c" stroke="#336a9c" stroke-width=".8"/><path d="M1104.7 649.2 1125.6 652.5 1117.3 660.5 1096 657.4Z" fill="#336a9c" stroke="#336a9c" stroke-width=".8"/><path d="M1096 657.4 1117.3 660.5 1109.3 668.4 1087.7 665.5Z" fill="#336b9d" stroke="#336b9d" stroke-width=".8"/><path d="M1087.7 665.5 1109.3 668.4 1101.6 676.3 1079.7 673.6Z" fill="#336c9f" stroke="#336c9f" stroke-width=".8"/><path d="M1079.7 673.6 1101.6 676.3 1094.2 684.1 1072.1 681.5Z" fill="#346fa1" stroke="#346fa1" stroke-width=".8"/><path d="M1072.1 681.5 1094.2 684.1 1087.2 691.8 1065 689.4Z" fill="#3572a5" stroke="#3572a5" stroke-width=".8"/><path d="M1065 689.4 1087.2 691.8 1080.7 699.3 1058.2 697.1Z" fill="#3576a9" stroke="#3576a9" stroke-width=".8"/><path d="M1058.2 697.1 1080.7 699.3 1074.5 706.8 1051.9 704.7Z" fill="#367aae" stroke="#367aae" stroke-width=".8"/><path d="M1051.9 704.7 1074.5 706.8 1068.8 714 1046.1 712.2Z" fill="#377eb2" stroke="#377eb2" stroke-width=".8"/><path d="M1046.1 712.2 1068.8 714 1063.5 721.1 1040.8 719.4Z" fill="#3883b7" stroke="#3883b7" stroke-width=".8"/><path d="M1040.8 719.4 1063.5 721.1 1058.7 728 1035.9 726.5Z" fill="#3987bc" stroke="#3987bc" stroke-width=".8"/><path d="M1035.9 726.5 1058.7 728 1054.4 734.7 1031.6 733.3Z" fill="#3a8bc1" stroke="#3a8bc1" stroke-width=".8"/><path d="M1031.6 733.3 1054.4 734.7 1050.5 741.1 1027.8 739.9Z" fill="#3a8fc5" stroke="#3a8fc5" stroke-width=".8"/><path d="M1027.8 739.9 1050.5 741.1 1047.2 747.3 1024.5 746.2Z" fill="#3b92c8" stroke="#3b92c8" stroke-width=".8"/><path d="M1024.5 746.2 1047.2 747.3 1044.3 753.3 1021.7 752.3Z" fill="#3c94cb" stroke="#3c94cb" stroke-width=".8"/><path d="M1021.7 752.3 1044.3 753.3 1042 759 1019.5 758.2Z" fill="#3c96cc" stroke="#3c96cc" stroke-width=".8"/><path d="M1019.5 758.2 1042 759 1040.2 764.4 1017.9 763.7Z" fill="#3c96cd" stroke="#3c96cd" stroke-width=".8"/><path d="M1017.9 763.7 1040.2 764.4 1038.8 769.6 1016.7 769Z" fill="#3c96cd" stroke="#3c96cd" stroke-width=".8"/><path d="M1016.7 769 1038.8 769.6 1038 774.4 1016.1 773.9Z" fill="#3c96cd" stroke="#3c96cd" stroke-width=".8"/><path d="M1261 544.3 1274.4 550.4 1264.8 557.2 1250.9 551.4Z" fill="#336a9c" stroke="#336a9c" stroke-width=".8"/><path d="M1250.9 551.4 1264.8 557.2 1255.2 564.2 1240.8 558.6Z" fill="#336a9c" stroke="#336a9c" stroke-width=".8"/><path d="M1240.8 558.6 1255.2 564.2 1245.7 571.4 1230.6 566Z" fill="#336a9c" stroke="#336a9c" stroke-width=".8"/><path d="M1230.6 566 1245.7 571.4 1236.1 578.6 1220.5 573.5Z" fill="#336a9c" stroke="#336a9c" stroke-width=".8"/><path d="M1220.5 573.5 1236.1 578.6 1226.6 586 1210.5 581.1Z" fill="#336a9c" stroke="#336a9c" stroke-width=".8"/><path d="M1210.5 581.1 1226.6 586 1217.1 593.5 1200.5 588.8Z" fill="#336a9c" stroke="#336a9c" stroke-width=".8"/><path d="M1200.5 588.8 1217.1 593.5 1207.6 601 1190.6 596.6Z" fill="#336a9c" stroke="#336a9c" stroke-width=".8"/><path d="M1190.6 596.6 1207.6 601 1198.3 608.7 1180.8 604.4Z" fill="#336a9d" stroke="#336a9d" stroke-width=".8"/><path d="M1180.8 604.4 1198.3 608.7 1189.1 616.4 1171.1 612.4Z" fill="#336b9d" stroke="#336b9d" stroke-width=".8"/><path d="M1171.1 612.4 1189.1 616.4 1180 624.2 1161.6 620.4Z" fill="#336b9d" stroke="#336b9d" stroke-width=".8"/><path d="M1161.6 620.4 1180 624.2 1171.1 631.9 1152.3 628.4Z" fill="#336b9d" stroke="#336b9d" stroke-width=".8"/><path d="M1152.3 628.4 1171.1 631.9 1162.4 639.8 1143.2 636.4Z" fill="#336b9d" stroke="#336b9d" stroke-width=".8"/><path d="M1143.2 636.4 1162.4 639.8 1153.9 647.6 1134.3 644.5Z" fill="#336b9d" stroke="#336b9d" stroke-width=".8"/><path d="M1134.3 644.5 1153.9 647.6 1145.6 655.4 1125.6 652.5Z" fill="#336b9d" stroke="#336b9d" stroke-width=".8"/><path d="M1125.6 652.5 1145.6 655.4 1137.6 663.2 1117.3 660.5Z" fill="#336b9e" stroke="#336b9e" stroke-width=".8"/><path d="M1117.3 660.5 1137.6 663.2 1129.8 670.9 1109.3 668.4Z" fill="#336b9e" stroke="#336b9e" stroke-width=".8"/><path d="M1109.3 668.4 1129.8 670.9 1122.4 678.6 1101.6 676.3Z" fill="#336c9f" stroke="#336c9f" stroke-width=".8"/><path d="M1101.6 676.3 1122.4 678.6 1115.3 686.2 1094.2 684.1Z" fill="#346fa1" stroke="#346fa1" stroke-width=".8"/><path d="M1094.2 684.1 1115.3 686.2 1108.5 693.6 1087.2 691.8Z" fill="#3572a5" stroke="#3572a5" stroke-width=".8"/><path d="M1087.2 691.8 1108.5 693.6 1102.1 701 1080.7 699.3Z" fill="#3576a9" stroke="#3576a9" stroke-width=".8"/><path d="M1080.7 699.3 1102.1 701 1096.1 708.2 1074.5 706.8Z" fill="#367aae" stroke="#367aae" stroke-width=".8"/><path d="M1074.5 706.8 1096.1 708.2 1090.4 715.3 1068.8 714Z" fill="#377eb2" stroke="#377eb2" stroke-width=".8"/><path d="M1068.8 714 1090.4 715.3 1085.2 722.2 1063.5 721.1Z" fill="#3883b7" stroke="#3883b7" stroke-width=".8"/><path d="M1063.5 721.1 1085.2 722.2 1080.5 728.9 1058.7 728Z" fill="#3987bc" stroke="#3987bc" stroke-width=".8"/><path d="M1058.7 728 1080.5 728.9 1076.1 735.4 1054.4 734.7Z" fill="#3a8bc1" stroke="#3a8bc1" stroke-width=".8"/><path d="M1054.4 734.7 1076.1 735.4 1072.3 741.7 1050.5 741.1Z" fill="#3a8fc5" stroke="#3a8fc5" stroke-width=".8"/><path d="M1050.5 741.1 1072.3 741.7 1068.8 747.8 1047.2 747.3Z" fill="#3b92c8" stroke="#3b92c8" stroke-width=".8"/><path d="M1047.2 747.3 1068.8 747.8 1065.9 753.6 1044.3 753.3Z" fill="#3c94cb" stroke="#3c94cb" stroke-width=".8"/><path d="M1044.3 753.3 1065.9 753.6 1063.4 759.1 1042 759Z" fill="#3c96cc" stroke="#3c96cc" stroke-width=".8"/><path d="M1042 759 1063.4 759.1 1061.4 764.4 1040.2 764.4Z" fill="#3c96cd" stroke="#3c96cd" stroke-width=".8"/><path d="M1040.2 764.4 1061.4 764.4 1059.8 769.4 1038.8 769.6Z" fill="#3c96cd" stroke="#3c96cd" stroke-width=".8"/><path d="M1038.8 769.6 1059.8 769.4 1058.8 774.2 1038 774.4Z" fill="#3c96cd" stroke="#3c96cd" stroke-width=".8"/><path d="M1274.4 550.4 1286.6 556.4 1277.6 563 1264.8 557.2Z" fill="#336a9c" stroke="#336a9c" stroke-width=".8"/><path d="M1264.8 557.2 1277.6 563 1268.6 569.8 1255.2 564.2Z" fill="#336a9c" stroke="#336a9c" stroke-width=".8"/><path d="M1255.2 564.2 1268.6 569.8 1259.6 576.7 1245.7 571.4Z" fill="#336a9c" stroke="#336a9c" stroke-width=".8"/><path d="M1245.7 571.4 1259.6 576.7 1250.5 583.7 1236.1 578.6Z" fill="#336a9c" stroke="#336a9c" stroke-width=".8"/><path d="M1236.1 578.6 1250.5 583.7 1241.5 590.8 1226.6 586Z" fill="#336a9c" stroke="#336a9c" stroke-width=".8"/><path d="M1226.6 586 1241.5 590.8 1232.6 598 1217.1 593.5Z" fill="#336a9d" stroke="#336a9d" stroke-width=".8"/><path d="M1217.1 593.5 1232.6 598 1223.6 605.3 1207.6 601Z" fill="#336b9d" stroke="#336b9d" stroke-width=".8"/><path d="M1207.6 601 1223.6 605.3 1214.8 612.7 1198.3 608.7Z" fill="#336b9d" stroke="#336b9d" stroke-width=".8"/><path d="M1198.3 608.7 1214.8 612.7 1206 620.2 1189.1 616.4Z" fill="#336b9d" stroke="#336b9d" stroke-width=".8"/><path d="M1189.1 616.4 1206 620.2 1197.4 627.7 1180 624.2Z" fill="#336c9e" stroke="#336c9e" stroke-width=".8"/><path d="M1180 624.2 1197.4 627.7 1188.9 635.2 1171.1 631.9Z" fill="#336c9e" stroke="#336c9e" stroke-width=".8"/><path d="M1171.1 631.9 1188.9 635.2 1180.6 642.8 1162.4 639.8Z" fill="#336c9e" stroke="#336c9e" stroke-width=".8"/><path d="M1162.4 639.8 1180.6 642.8 1172.4 650.3 1153.9 647.6Z" fill="#346d9f" stroke="#346d9f" stroke-width=".8"/><path d="M1153.9 647.6 1172.4 650.3 1164.5 657.9 1145.6 655.4Z" fill="#346d9f" stroke="#346d9f" stroke-width=".8"/><path d="M1145.6 655.4 1164.5 657.9 1156.8 665.4 1137.6 663.2Z" fill="#346d9f" stroke="#346d9f" stroke-width=".8"/><path d="M1137.6 663.2 1156.8 665.4 1149.3 672.9 1129.8 670.9Z" fill="#346da0" stroke="#346da0" stroke-width=".8"/><path d="M1129.8 670.9 1149.3 672.9 1142.1 680.4 1122.4 678.6Z" fill="#346da0" stroke="#346da0" stroke-width=".8"/><path d="M1122.4 678.6 1142.1 680.4 1135.3 687.7 1115.3 686.2Z" fill="#346fa1" stroke="#346fa1" stroke-width=".8"/><path d="M1115.3 686.2 1135.3 687.7 1128.7 695 1108.5 693.6Z" fill="#3572a5" stroke="#3572a5" stroke-width=".8"/><path d="M1108.5 693.6 1128.7 695 1122.5 702.1 1102.1 701Z" fill="#3576a9" stroke="#3576a9" stroke-width=".8"/><path d="M1102.1 701 1122.5 702.1 1116.6 709.1 1096.1 708.2Z" fill="#367aae" stroke="#367aae" stroke-width=".8"/><path d="M1096.1 708.2 1116.6 709.1 1111 716 1090.4 715.3Z" fill="#377eb2" stroke="#377eb2" stroke-width=".8"/><path d="M1090.4 715.3 1111 716 1105.9 722.7 1085.2 722.2Z" fill="#3883b7" stroke="#3883b7" stroke-width=".8"/><path d="M1085.2 722.2 1105.9 722.7 1101.2 729.2 1080.5 728.9Z" fill="#3987bc" stroke="#3987bc" stroke-width=".8"/><path d="M1080.5 728.9 1101.2 729.2 1096.8 735.5 1076.1 735.4Z" fill="#3a8bc1" stroke="#3a8bc1" stroke-width=".8"/><path d="M1076.1 735.4 1096.8 735.5 1092.9 741.7 1072.3 741.7Z" fill="#3a8fc5" stroke="#3a8fc5" stroke-width=".8"/><path d="M1072.3 741.7 1092.9 741.7 1089.4 747.5 1068.8 747.8Z" fill="#3b92c8" stroke="#3b92c8" stroke-width=".8"/><path d="M1068.8 747.8 1089.4 747.5 1086.4 753.2 1065.9 753.6Z" fill="#3c94cb" stroke="#3c94cb" stroke-width=".8"/><path d="M1065.9 753.6 1086.4 753.2 1083.7 758.6 1063.4 759.1Z" fill="#3c96cc" stroke="#3c96cc" stroke-width=".8"/><path d="M1063.4 759.1 1083.7 758.6 1081.5 763.7 1061.4 764.4Z" fill="#3c96cd" stroke="#3c96cd" stroke-width=".8"/><path d="M1061.4 764.4 1081.5 763.7 1079.8 768.6 1059.8 769.4Z" fill="#3c96cd" stroke="#3c96cd" stroke-width=".8"/><path d="M1059.8 769.4 1079.8 768.6 1078.4 773.2 1058.8 774.2Z" fill="#3c96cd" stroke="#3c96cd" stroke-width=".8"/><path d="M1286.6 556.4 1297.7 562.5 1289.3 568.8 1277.6 563Z" fill="#336a9c" stroke="#336a9c" stroke-width=".8"/><path d="M1277.6 563 1289.3 568.8 1280.8 575.3 1268.6 569.8Z" fill="#336a9c" stroke="#336a9c" stroke-width=".8"/><path d="M1268.6 569.8 1280.8 575.3 1272.4 581.9 1259.6 576.7Z" fill="#336a9c" stroke="#336a9c" stroke-width=".8"/><path d="M1259.6 576.7 1272.4 581.9 1263.9 588.6 1250.5 583.7Z" fill="#336a9c" stroke="#336a9c" stroke-width=".8"/><path d="M1250.5 583.7 1263.9 588.6 1255.4 595.4 1241.5 590.8Z" fill="#336a9d" stroke="#336a9d" stroke-width=".8"/><path d="M1241.5 590.8 1255.4 595.4 1246.9 602.4 1232.6 598Z" fill="#336b9d" stroke="#336b9d" stroke-width=".8"/><path d="M1232.6 598 1246.9 602.4 1238.5 609.4 1223.6 605.3Z" fill="#336b9d" stroke="#336b9d" stroke-width=".8"/><path d="M1223.6 605.3 1238.5 609.4 1230.1 616.5 1214.8 612.7Z" fill="#336c9e" stroke="#336c9e" stroke-width=".8"/><path d="M1214.8 612.7 1230.1 616.5 1221.9 623.7 1206 620.2Z" fill="#336c9e" stroke="#336c9e" stroke-width=".8"/><path d="M1206 620.2 1221.9 623.7 1213.7 630.9 1197.4 627.7Z" fill="#346d9f" stroke="#346d9f" stroke-width=".8"/><path d="M1197.4 627.7 1213.7 630.9 1205.6 638.2 1188.9 635.2Z" fill="#346da0" stroke="#346da0" stroke-width=".8"/><path d="M1188.9 635.2 1205.6 638.2 1197.7 645.4 1180.6 642.8Z" fill="#346ea0" stroke="#346ea0" stroke-width=".8"/><path d="M1180.6 642.8 1197.7 645.4 1189.9 652.7 1172.4 650.3Z" fill="#346ea1" stroke="#346ea1" stroke-width=".8"/><path d="M1172.4 650.3 1189.9 652.7 1182.3 660 1164.5 657.9Z" fill="#346fa1" stroke="#346fa1" stroke-width=".8"/><path d="M1164.5 657.9 1182.3 660 1174.9 667.3 1156.8 665.4Z" fill="#346fa2" stroke="#346fa2" stroke-width=".8"/><path d="M1156.8 665.4 1174.9 667.3 1167.8 674.5 1149.3 672.9Z" fill="#346fa2" stroke="#346fa2" stroke-width=".8"/><path d="M1149.3 672.9 1167.8 674.5 1160.8 681.7 1142.1 680.4Z" fill="#3470a2" stroke="#3470a2" stroke-width=".8"/><path d="M1142.1 680.4 1160.8 681.7 1154.2 688.8 1135.3 687.7Z" fill="#3470a2" stroke="#3470a2" stroke-width=".8"/><path d="M1135.3 687.7 1154.2 688.8 1147.8 695.8 1128.7 695Z" fill="#3572a5" stroke="#3572a5" stroke-width=".8"/><path d="M1128.7 695 1147.8 695.8 1141.8 702.7 1122.5 702.1Z" fill="#3576a9" stroke="#3576a9" stroke-width=".8"/><path d="M1122.5 702.1 1141.8 702.7 1136 709.5 1116.6 709.1Z" fill="#367aae" stroke="#367aae" stroke-width=".8"/><path d="M1116.6 709.1 1136 709.5 1130.6 716.1 1111 716Z" fill="#377eb2" stroke="#377eb2" stroke-width=".8"/><path d="M1111 716 1130.6 716.1 1125.5 722.6 1105.9 722.7Z" fill="#3883b7" stroke="#3883b7" stroke-width=".8"/><path d="M1105.9 722.7 1125.5 722.6 1120.8 728.9 1101.2 729.2Z" fill="#3987bc" stroke="#3987bc" stroke-width=".8"/><path d="M1101.2 729.2 1120.8 728.9 1116.5 735 1096.8 735.5Z" fill="#3a8bc1" stroke="#3a8bc1" stroke-width=".8"/><path d="M1096.8 735.5 1116.5 735 1112.5 741 1092.9 741.7Z" fill="#3a8fc5" stroke="#3a8fc5" stroke-width=".8"/><path d="M1092.9 741.7 1112.5 741 1108.9 746.7 1089.4 747.5Z" fill="#3b92c8" stroke="#3b92c8" stroke-width=".8"/><path d="M1089.4 747.5 1108.9 746.7 1105.7 752.2 1086.4 753.2Z" fill="#3c94cb" stroke="#3c94cb" stroke-width=".8"/><path d="M1086.4 753.2 1105.7 752.2 1103 757.4 1083.7 758.6Z" fill="#3c96cc" stroke="#3c96cc" stroke-width=".8"/><path d="M1083.7 758.6 1103 757.4 1100.6 762.4 1081.5 763.7Z" fill="#3c96cd" stroke="#3c96cd" stroke-width=".8"/><path d="M1081.5 763.7 1100.6 762.4 1098.6 767.2 1079.8 768.6Z" fill="#3c96cd" stroke="#3c96cd" stroke-width=".8"/><path d="M1079.8 768.6 1098.6 767.2 1097 771.6 1078.4 773.2Z" fill="#3c96cd" stroke="#3c96cd" stroke-width=".8"/><path d="M1297.7 562.5 1307.6 568.5 1299.8 574.5 1289.3 568.8Z" fill="#336a9c" stroke="#336a9c" stroke-width=".8"/><path d="M1289.3 568.8 1299.8 574.5 1291.9 580.7 1280.8 575.3Z" fill="#336a9c" stroke="#336a9c" stroke-width=".8"/><path d="M1280.8 575.3 1291.9 580.7 1284 587 1272.4 581.9Z" fill="#336a9c" stroke="#336a9c" stroke-width=".8"/><path d="M1272.4 581.9 1284 587 1276.1 593.4 1263.9 588.6Z" fill="#336a9c" stroke="#336a9c" stroke-width=".8"/><path d="M1263.9 588.6 1276.1 593.4 1268.1 599.9 1255.4 595.4Z" fill="#336b9d" stroke="#336b9d" stroke-width=".8"/><path d="M1255.4 595.4 1268.1 599.9 1260.2 606.6 1246.9 602.4Z" fill="#336b9d" stroke="#336b9d" stroke-width=".8"/><path d="M1246.9 602.4 1260.2 606.6 1252.3 613.3 1238.5 609.4Z" fill="#336c9e" stroke="#336c9e" stroke-width=".8"/><path d="M1238.5 609.4 1252.3 613.3 1244.4 620.1 1230.1 616.5Z" fill="#346d9f" stroke="#346d9f" stroke-width=".8"/><path d="M1230.1 616.5 1244.4 620.1 1236.6 626.9 1221.9 623.7Z" fill="#346da0" stroke="#346da0" stroke-width=".8"/><path d="M1221.9 623.7 1236.6 626.9 1228.8 633.9 1213.7 630.9Z" fill="#346ea1" stroke="#346ea1" stroke-width=".8"/><path d="M1213.7 630.9 1228.8 633.9 1221.2 640.8 1205.6 638.2Z" fill="#346fa1" stroke="#346fa1" stroke-width=".8"/><path d="M1205.6 638.2 1221.2 640.8 1213.7 647.8 1197.7 645.4Z" fill="#3470a2" stroke="#3470a2" stroke-width=".8"/><path d="M1197.7 645.4 1213.7 647.8 1206.3 654.8 1189.9 652.7Z" fill="#3470a3" stroke="#3470a3" stroke-width=".8"/><path d="M1189.9 652.7 1206.3 654.8 1199.1 661.8 1182.3 660Z" fill="#3471a4" stroke="#3471a4" stroke-width=".8"/><path d="M1182.3 660 1199.1 661.8 1192 668.8 1174.9 667.3Z" fill="#3572a4" stroke="#3572a4" stroke-width=".8"/><path d="M1174.9 667.3 1192 668.8 1185.1 675.7 1167.8 674.5Z" fill="#3572a5" stroke="#3572a5" stroke-width=".8"/><path d="M1167.8 674.5 1185.1 675.7 1178.5 682.6 1160.8 681.7Z" fill="#3572a5" stroke="#3572a5" stroke-width=".8"/><path d="M1160.8 681.7 1178.5 682.6 1172.1 689.4 1154.2 688.8Z" fill="#3572a5" stroke="#3572a5" stroke-width=".8"/><path d="M1154.2 688.8 1172.1 689.4 1165.9 696.2 1147.8 695.8Z" fill="#3572a5" stroke="#3572a5" stroke-width=".8"/><path d="M1147.8 695.8 1165.9 696.2 1160 702.8 1141.8 702.7Z" fill="#3576a9" stroke="#3576a9" stroke-width=".8"/><path d="M1141.8 702.7 1160 702.8 1154.4 709.3 1136 709.5Z" fill="#367aae" stroke="#367aae" stroke-width=".8"/><path d="M1136 709.5 1154.4 709.3 1149 715.7 1130.6 716.1Z" fill="#377eb2" stroke="#377eb2" stroke-width=".8"/><path d="M1130.6 716.1 1149 715.7 1144 722 1125.5 722.6Z" fill="#3883b7" stroke="#3883b7" stroke-width=".8"/><path d="M1125.5 722.6 1144 722 1139.3 728.1 1120.8 728.9Z" fill="#3987bc" stroke="#3987bc" stroke-width=".8"/><path d="M1120.8 728.9 1139.3 728.1 1135 734 1116.5 735Z" fill="#3a8bc1" stroke="#3a8bc1" stroke-width=".8"/><path d="M1116.5 735 1135 734 1131 739.7 1112.5 741Z" fill="#3a8fc5" stroke="#3a8fc5" stroke-width=".8"/><path d="M1112.5 741 1131 739.7 1127.3 745.2 1108.9 746.7Z" fill="#3b92c8" stroke="#3b92c8" stroke-width=".8"/><path d="M1108.9 746.7 1127.3 745.2 1124 750.5 1105.7 752.2Z" fill="#3c94cb" stroke="#3c94cb" stroke-width=".8"/><path d="M1105.7 752.2 1124 750.5 1121.1 755.6 1103 757.4Z" fill="#3c96cc" stroke="#3c96cc" stroke-width=".8"/><path d="M1103 757.4 1121.1 755.6 1118.5 760.4 1100.6 762.4Z" fill="#3c96cd" stroke="#3c96cd" stroke-width=".8"/><path d="M1100.6 762.4 1118.5 760.4 1116.3 765.1 1098.6 767.2Z" fill="#3c96cd" stroke="#3c96cd" stroke-width=".8"/><path d="M1098.6 767.2 1116.3 765.1 1114.4 769.4 1097 771.6Z" fill="#3c96cd" stroke="#3c96cd" stroke-width=".8"/><path d="M1307.6 568.5 1316.5 574.5 1309.2 580.2 1299.8 574.5Z" fill="#336a9c" stroke="#336a9c" stroke-width=".8"/><path d="M1299.8 574.5 1309.2 580.2 1301.9 586.1 1291.9 580.7Z" fill="#336a9c" stroke="#336a9c" stroke-width=".8"/><path d="M1291.9 580.7 1301.9 586.1 1294.6 592 1284 587Z" fill="#336a9c" stroke="#336a9c" stroke-width=".8"/><path d="M1284 587 1294.6 592 1287.2 598.1 1276.1 593.4Z" fill="#336a9c" stroke="#336a9c" stroke-width=".8"/><path d="M1276.1 593.4 1287.2 598.1 1279.8 604.3 1268.1 599.9Z" fill="#336b9d" stroke="#336b9d" stroke-width=".8"/><path d="M1268.1 599.9 1279.8 604.3 1272.4 610.6 1260.2 606.6Z" fill="#336c9e" stroke="#336c9e" stroke-width=".8"/><path d="M1260.2 606.6 1272.4 610.6 1265 617 1252.3 613.3Z" fill="#346d9f" stroke="#346d9f" stroke-width=".8"/><path d="M1252.3 613.3 1265 617 1257.6 623.5 1244.4 620.1Z" fill="#346da0" stroke="#346da0" stroke-width=".8"/><path d="M1244.4 620.1 1257.6 623.5 1250.2 630 1236.6 626.9Z" fill="#346ea1" stroke="#346ea1" stroke-width=".8"/><path d="M1236.6 626.9 1250.2 630 1242.9 636.6 1228.8 633.9Z" fill="#3470a2" stroke="#3470a2" stroke-width=".8"/><path d="M1228.8 633.9 1242.9 636.6 1235.7 643.2 1221.2 640.8Z" fill="#3471a3" stroke="#3471a3" stroke-width=".8"/><path d="M1221.2 640.8 1235.7 643.2 1228.6 649.9 1213.7 647.8Z" fill="#3572a5" stroke="#3572a5" stroke-width=".8"/><path d="M1213.7 647.8 1228.6 649.9 1221.6 656.5 1206.3 654.8Z" fill="#3573a6" stroke="#3573a6" stroke-width=".8"/><path d="M1206.3 654.8 1221.6 656.5 1214.7 663.2 1199.1 661.8Z" fill="#3573a7" stroke="#3573a7" stroke-width=".8"/><path d="M1199.1 661.8 1214.7 663.2 1208 669.9 1192 668.8Z" fill="#3574a7" stroke="#3574a7" stroke-width=".8"/><path d="M1192 668.8 1208 669.9 1201.4 676.5 1185.1 675.7Z" fill="#3575a8" stroke="#3575a8" stroke-width=".8"/><path d="M1185.1 675.7 1201.4 676.5 1195 683.1 1178.5 682.6Z" fill="#3575a8" stroke="#3575a8" stroke-width=".8"/><path d="M1178.5 682.6 1195 683.1 1188.8 689.6 1172.1 689.4Z" fill="#3575a9" stroke="#3575a9" stroke-width=".8"/><path d="M1172.1 689.4 1188.8 689.6 1182.9 696.1 1165.9 696.2Z" fill="#3575a9" stroke="#3575a9" stroke-width=".8"/><path d="M1165.9 696.2 1182.9 696.1 1177.1 702.4 1160 702.8Z" fill="#3576a9" stroke="#3576a9" stroke-width=".8"/><path d="M1160 702.8 1177.1 702.4 1171.6 708.7 1154.4 709.3Z" fill="#367aae" stroke="#367aae" stroke-width=".8"/><path d="M1154.4 709.3 1171.6 708.7 1166.4 714.8 1149 715.7Z" fill="#377eb2" stroke="#377eb2" stroke-width=".8"/><path d="M1149 715.7 1166.4 714.8 1161.4 720.8 1144 722Z" fill="#3883b7" stroke="#3883b7" stroke-width=".8"/><path d="M1144 722 1161.4 720.8 1156.8 726.7 1139.3 728.1Z" fill="#3987bc" stroke="#3987bc" stroke-width=".8"/><path d="M1139.3 728.1 1156.8 726.7 1152.4 732.3 1135 734Z" fill="#3a8bc1" stroke="#3a8bc1" stroke-width=".8"/><path d="M1135 734 1152.4 732.3 1148.4 737.8 1131 739.7Z" fill="#3a8fc5" stroke="#3a8fc5" stroke-width=".8"/><path d="M1131 739.7 1148.4 737.8 1144.6 743.2 1127.3 745.2Z" fill="#3b92c8" stroke="#3b92c8" stroke-width=".8"/><path d="M1127.3 745.2 1144.6 743.2 1141.2 748.3 1124 750.5Z" fill="#3c94cb" stroke="#3c94cb" stroke-width=".8"/><path d="M1124 750.5 1141.2 748.3 1138.1 753.2 1121.1 755.6Z" fill="#3c96cc" stroke="#3c96cc" stroke-width=".8"/><path d="M1121.1 755.6 1138.1 753.2 1135.3 757.9 1118.5 760.4Z" fill="#3c96cd" stroke="#3c96cd" stroke-width=".8"/><path d="M1118.5 760.4 1135.3 757.9 1132.9 762.3 1116.3 765.1Z" fill="#3c96cd" stroke="#3c96cd" stroke-width=".8"/><path d="M1116.3 765.1 1132.9 762.3 1130.7 766.6 1114.4 769.4Z" fill="#3c96cd" stroke="#3c96cd" stroke-width=".8"/><path d="M1316.5 574.5 1324.2 580.5 1317.6 585.9 1309.2 580.2Z" fill="#336a9c" stroke="#336a9c" stroke-width=".8"/><path d="M1309.2 580.2 1317.6 585.9 1310.8 591.4 1301.9 586.1Z" fill="#336a9c" stroke="#336a9c" stroke-width=".8"/><path d="M1301.9 586.1 1310.8 591.4 1304 597 1294.6 592Z" fill="#336a9c" stroke="#336a9c" stroke-width=".8"/><path d="M1294.6 592 1304 597 1297.2 602.7 1287.2 598.1Z" fill="#336b9d" stroke="#336b9d" stroke-width=".8"/><path d="M1287.2 598.1 1297.2 602.7 1290.3 608.6 1279.8 604.3Z" fill="#336b9d" stroke="#336b9d" stroke-width=".8"/><path d="M1279.8 604.3 1290.3 608.6 1283.4 614.5 1272.4 610.6Z" fill="#336c9e" stroke="#336c9e" stroke-width=".8"/><path d="M1272.4 610.6 1283.4 614.5 1276.5 620.5 1265 617Z" fill="#346da0" stroke="#346da0" stroke-width=".8"/><path d="M1265 617 1276.5 620.5 1269.6 626.6 1257.6 623.5Z" fill="#346ea1" stroke="#346ea1" stroke-width=".8"/><path d="M1257.6 623.5 1269.6 626.6 1262.8 632.8 1250.2 630Z" fill="#3470a2" stroke="#3470a2" stroke-width=".8"/><path d="M1250.2 630 1262.8 632.8 1255.9 639 1242.9 636.6Z" fill="#3471a4" stroke="#3471a4" stroke-width=".8"/><path d="M1242.9 636.6 1255.9 639 1249.1 645.3 1235.7 643.2Z" fill="#3572a5" stroke="#3572a5" stroke-width=".8"/><path d="M1235.7 643.2 1249.1 645.3 1242.4 651.6 1228.6 649.9Z" fill="#3574a7" stroke="#3574a7" stroke-width=".8"/><path d="M1228.6 649.9 1242.4 651.6 1235.8 658 1221.6 656.5Z" fill="#3575a8" stroke="#3575a8" stroke-width=".8"/><path d="M1221.6 656.5 1235.8 658 1229.3 664.3 1214.7 663.2Z" fill="#3576a9" stroke="#3576a9" stroke-width=".8"/><path d="M1214.7 663.2 1229.3 664.3 1222.8 670.6 1208 669.9Z" fill="#3677aa" stroke="#3677aa" stroke-width=".8"/><path d="M1208 669.9 1222.8 670.6 1216.6 676.9 1201.4 676.5Z" fill="#3678ab" stroke="#3678ab" stroke-width=".8"/><path d="M1201.4 676.5 1216.6 676.9 1210.4 683.2 1195 683.1Z" fill="#3678ac" stroke="#3678ac" stroke-width=".8"/><path d="M1195 683.1 1210.4 683.2 1204.5 689.4 1188.8 689.6Z" fill="#3678ac" stroke="#3678ac" stroke-width=".8"/><path d="M1188.8 689.6 1204.5 689.4 1198.7 695.5 1182.9 696.1Z" fill="#3678ac" stroke="#3678ac" stroke-width=".8"/><path d="M1182.9 696.1 1198.7 695.5 1193.1 701.6 1177.1 702.4Z" fill="#3678ac" stroke="#3678ac" stroke-width=".8"/><path d="M1177.1 702.4 1193.1 701.6 1187.8 707.6 1171.6 708.7Z" fill="#367aae" stroke="#367aae" stroke-width=".8"/><path d="M1171.6 708.7 1187.8 707.6 1182.6 713.4 1166.4 714.8Z" fill="#377eb2" stroke="#377eb2" stroke-width=".8"/><path d="M1166.4 714.8 1182.6 713.4 1177.8 719.2 1161.4 720.8Z" fill="#3883b7" stroke="#3883b7" stroke-width=".8"/><path d="M1161.4 720.8 1177.8 719.2 1173.1 724.8 1156.8 726.7Z" fill="#3987bc" stroke="#3987bc" stroke-width=".8"/><path d="M1156.8 726.7 1173.1 724.8 1168.7 730.2 1152.4 732.3Z" fill="#3a8bc1" stroke="#3a8bc1" stroke-width=".8"/><path d="M1152.4 732.3 1168.7 730.2 1164.6 735.5 1148.4 737.8Z" fill="#3a8fc5" stroke="#3a8fc5" stroke-width=".8"/><path d="M1148.4 737.8 1164.6 735.5 1160.8 740.6 1144.6 743.2Z" fill="#3b92c8" stroke="#3b92c8" stroke-width=".8"/><path d="M1144.6 743.2 1160.8 740.6 1157.2 745.5 1141.2 748.3Z" fill="#3c94cb" stroke="#3c94cb" stroke-width=".8"/><path d="M1141.2 748.3 1157.2 745.5 1154 750.2 1138.1 753.2Z" fill="#3c96cc" stroke="#3c96cc" stroke-width=".8"/><path d="M1138.1 753.2 1154 750.2 1151 754.8 1135.3 757.9Z" fill="#3c96cd" stroke="#3c96cd" stroke-width=".8"/><path d="M1135.3 757.9 1151 754.8 1148.3 759.1 1132.9 762.3Z" fill="#3c96cd" stroke="#3c96cd" stroke-width=".8"/><path d="M1132.9 762.3 1148.3 759.1 1145.9 763.2 1130.7 766.6Z" fill="#3c96cd" stroke="#3c96cd" stroke-width=".8"/><path d="M1324.2 580.5 1330.9 586.5 1324.8 591.5 1317.6 585.9Z" fill="#336a9c" stroke="#336a9c" stroke-width=".8"/><path d="M1317.6 585.9 1324.8 591.5 1318.7 596.6 1310.8 591.4Z" fill="#336a9c" stroke="#336a9c" stroke-width=".8"/><path d="M1310.8 591.4 1318.7 596.6 1312.4 601.9 1304 597Z" fill="#336a9c" stroke="#336a9c" stroke-width=".8"/><path d="M1304 597 1312.4 601.9 1306.2 607.2 1297.2 602.7Z" fill="#336b9d" stroke="#336b9d" stroke-width=".8"/><path d="M1297.2 602.7 1306.2 607.2 1299.8 612.7 1290.3 608.6Z" fill="#336c9e" stroke="#336c9e" stroke-width=".8"/><path d="M1290.3 608.6 1299.8 612.7 1293.4 618.3 1283.4 614.5Z" fill="#346d9f" stroke="#346d9f" stroke-width=".8"/><path d="M1283.4 614.5 1293.4 618.3 1287.1 623.9 1276.5 620.5Z" fill="#346ea0" stroke="#346ea0" stroke-width=".8"/><path d="M1276.5 620.5 1287.1 623.9 1280.6 629.6 1269.6 626.6Z" fill="#346fa2" stroke="#346fa2" stroke-width=".8"/><path d="M1269.6 626.6 1280.6 629.6 1274.2 635.4 1262.8 632.8Z" fill="#3471a4" stroke="#3471a4" stroke-width=".8"/><path d="M1262.8 632.8 1274.2 635.4 1267.8 641.3 1255.9 639Z" fill="#3573a6" stroke="#3573a6" stroke-width=".8"/><path d="M1255.9 639 1267.8 641.3 1261.5 647.2 1249.1 645.3Z" fill="#3574a7" stroke="#3574a7" stroke-width=".8"/><path d="M1249.1 645.3 1261.5 647.2 1255.2 653.1 1242.4 651.6Z" fill="#3576a9" stroke="#3576a9" stroke-width=".8"/><path d="M1242.4 651.6 1255.2 653.1 1248.9 659.1 1235.8 658Z" fill="#3677ab" stroke="#3677ab" stroke-width=".8"/><path d="M1235.8 658 1248.9 659.1 1242.7 665.1 1229.3 664.3Z" fill="#3679ac" stroke="#3679ac" stroke-width=".8"/><path d="M1229.3 664.3 1242.7 665.1 1236.6 671 1222.8 670.6Z" fill="#367aad" stroke="#367aad" stroke-width=".8"/><path d="M1222.8 670.6 1236.6 671 1230.7 677 1216.6 676.9Z" fill="#367bae" stroke="#367bae" stroke-width=".8"/><path d="M1216.6 676.9 1230.7 677 1224.8 682.9 1210.4 683.2Z" fill="#377baf" stroke="#377baf" stroke-width=".8"/><path d="M1210.4 683.2 1224.8 682.9 1219.1 688.8 1204.5 689.4Z" fill="#377baf" stroke="#377baf" stroke-width=".8"/><path d="M1204.5 689.4 1219.1 688.8 1213.5 694.6 1198.7 695.5Z" fill="#377baf" stroke="#377baf" stroke-width=".8"/><path d="M1198.7 695.5 1213.5 694.6 1208.1 700.4 1193.1 701.6Z" fill="#377baf" stroke="#377baf" stroke-width=".8"/><path d="M1193.1 701.6 1208.1 700.4 1202.8 706 1187.8 707.6Z" fill="#377baf" stroke="#377baf" stroke-width=".8"/><path d="M1187.8 707.6 1202.8 706 1197.8 711.6 1182.6 713.4Z" fill="#377eb2" stroke="#377eb2" stroke-width=".8"/><path d="M1182.6 713.4 1197.8 711.6 1192.9 717.1 1177.8 719.2Z" fill="#3883b7" stroke="#3883b7" stroke-width=".8"/><path d="M1177.8 719.2 1192.9 717.1 1188.3 722.4 1173.1 724.8Z" fill="#3987bc" stroke="#3987bc" stroke-width=".8"/><path d="M1173.1 724.8 1188.3 722.4 1183.9 727.6 1168.7 730.2Z" fill="#3a8bc1" stroke="#3a8bc1" stroke-width=".8"/><path d="M1168.7 730.2 1183.9 727.6 1179.7 732.6 1164.6 735.5Z" fill="#3a8fc5" stroke="#3a8fc5" stroke-width=".8"/><path d="M1164.6 735.5 1179.7 732.6 1175.8 737.5 1160.8 740.6Z" fill="#3b92c8" stroke="#3b92c8" stroke-width=".8"/><path d="M1160.8 740.6 1175.8 737.5 1172.1 742.2 1157.2 745.5Z" fill="#3c94cb" stroke="#3c94cb" stroke-width=".8"/><path d="M1157.2 745.5 1172.1 742.2 1168.7 746.8 1154 750.2Z" fill="#3c96cc" stroke="#3c96cc" stroke-width=".8"/><path d="M1154 750.2 1168.7 746.8 1165.5 751.2 1151 754.8Z" fill="#3c96cd" stroke="#3c96cd" stroke-width=".8"/><path d="M1151 754.8 1165.5 751.2 1162.6 755.3 1148.3 759.1Z" fill="#3c96cd" stroke="#3c96cd" stroke-width=".8"/><path d="M1148.3 759.1 1162.6 755.3 1160 759.3 1145.9 763.2Z" fill="#3c96cd" stroke="#3c96cd" stroke-width=".8"/><path d="M1330.9 586.5 1336.6 592.4 1331.1 597.1 1324.8 591.5Z" fill="#336a9c" stroke="#336a9c" stroke-width=".8"/><path d="M1324.8 591.5 1331.1 597.1 1325.5 601.8 1318.7 596.6Z" fill="#336a9c" stroke="#336a9c" stroke-width=".8"/><path d="M1318.7 596.6 1325.5 601.8 1319.8 606.7 1312.4 601.9Z" fill="#336a9c" stroke="#336a9c" stroke-width=".8"/><path d="M1312.4 601.9 1319.8 606.7 1314.1 611.6 1306.2 607.2Z" fill="#336b9d" stroke="#336b9d" stroke-width=".8"/><path d="M1306.2 607.2 1314.1 611.6 1308.3 616.7 1299.8 612.7Z" fill="#336c9e" stroke="#336c9e" stroke-width=".8"/><path d="M1299.8 612.7 1308.3 616.7 1302.4 621.9 1293.4 618.3Z" fill="#346d9f" stroke="#346d9f" stroke-width=".8"/><path d="M1293.4 618.3 1302.4 621.9 1296.5 627.1 1287.1 623.9Z" fill="#346fa1" stroke="#346fa1" stroke-width=".8"/><path d="M1287.1 623.9 1296.5 627.1 1290.6 632.5 1280.6 629.6Z" fill="#3470a3" stroke="#3470a3" stroke-width=".8"/><path d="M1280.6 629.6 1290.6 632.5 1284.7 637.9 1274.2 635.4Z" fill="#3572a5" stroke="#3572a5" stroke-width=".8"/><path d="M1274.2 635.4 1284.7 637.9 1278.7 643.3 1267.8 641.3Z" fill="#3574a7" stroke="#3574a7" stroke-width=".8"/><path d="M1267.8 641.3 1278.7 643.3 1272.8 648.8 1261.5 647.2Z" fill="#3576a9" stroke="#3576a9" stroke-width=".8"/><path d="M1261.5 647.2 1272.8 648.8 1266.9 654.4 1255.2 653.1Z" fill="#3678ab" stroke="#3678ab" stroke-width=".8"/><path d="M1255.2 653.1 1266.9 654.4 1261 660 1248.9 659.1Z" fill="#3679ad" stroke="#3679ad" stroke-width=".8"/><path d="M1248.9 659.1 1261 660 1255.1 665.5 1242.7 665.1Z" fill="#367baf" stroke="#367baf" stroke-width=".8"/><path d="M1242.7 665.1 1255.1 665.5 1249.4 671.1 1236.6 671Z" fill="#377cb0" stroke="#377cb0" stroke-width=".8"/><path d="M1236.6 671 1249.4 671.1 1243.7 676.7 1230.7 677Z" fill="#377db2" stroke="#377db2" stroke-width=".8"/><path d="M1230.7 677 1243.7 676.7 1238.1 682.3 1224.8 682.9Z" fill="#377eb2" stroke="#377eb2" stroke-width=".8"/><path d="M1224.8 682.9 1238.1 682.3 1232.6 687.8 1219.1 688.8Z" fill="#377eb3" stroke="#377eb3" stroke-width=".8"/><path d="M1219.1 688.8 1232.6 687.8 1227.2 693.3 1213.5 694.6Z" fill="#377eb3" stroke="#377eb3" stroke-width=".8"/><path d="M1213.5 694.6 1227.2 693.3 1221.9 698.7 1208.1 700.4Z" fill="#377eb3" stroke="#377eb3" stroke-width=".8"/><path d="M1208.1 700.4 1221.9 698.7 1216.8 704.1 1202.8 706Z" fill="#377eb3" stroke="#377eb3" stroke-width=".8"/><path d="M1202.8 706 1216.8 704.1 1211.8 709.4 1197.8 711.6Z" fill="#377eb3" stroke="#377eb3" stroke-width=".8"/><path d="M1197.8 711.6 1211.8 709.4 1207 714.5 1192.9 717.1Z" fill="#3883b7" stroke="#3883b7" stroke-width=".8"/><path d="M1192.9 717.1 1207 714.5 1202.4 719.6 1188.3 722.4Z" fill="#3987bc" stroke="#3987bc" stroke-width=".8"/><path d="M1188.3 722.4 1202.4 719.6 1198 724.5 1183.9 727.6Z" fill="#3a8bc1" stroke="#3a8bc1" stroke-width=".8"/><path d="M1183.9 727.6 1198 724.5 1193.8 729.3 1179.7 732.6Z" fill="#3a8fc5" stroke="#3a8fc5" stroke-width=".8"/><path d="M1179.7 732.6 1193.8 729.3 1189.8 734 1175.8 737.5Z" fill="#3b92c8" stroke="#3b92c8" stroke-width=".8"/><path d="M1175.8 737.5 1189.8 734 1185.9 738.5 1172.1 742.2Z" fill="#3c94cb" stroke="#3c94cb" stroke-width=".8"/><path d="M1172.1 742.2 1185.9 738.5 1182.4 742.9 1168.7 746.8Z" fill="#3c96cc" stroke="#3c96cc" stroke-width=".8"/><path d="M1168.7 746.8 1182.4 742.9 1179 747.1 1165.5 751.2Z" fill="#3c96cd" stroke="#3c96cd" stroke-width=".8"/><path d="M1165.5 751.2 1179 747.1 1175.8 751.1 1162.6 755.3Z" fill="#3c96cd" stroke="#3c96cd" stroke-width=".8"/><path d="M1162.6 755.3 1175.8 751.1 1172.9 754.9 1160 759.3Z" fill="#3c96cd" stroke="#3c96cd" stroke-width=".8"/><path d="M1336.6 592.4 1341.2 598.4 1336.3 602.6 1331.1 597.1Z" fill="#336a9c" stroke="#336a9c" stroke-width=".8"/><path d="M1331.1 597.1 1336.3 602.6 1331.3 607 1325.5 601.8Z" fill="#336a9c" stroke="#336a9c" stroke-width=".8"/><path d="M1325.5 601.8 1331.3 607 1326.2 611.4 1319.8 606.7Z" fill="#336a9c" stroke="#336a9c" stroke-width=".8"/><path d="M1319.8 606.7 1326.2 611.4 1321 616 1314.1 611.6Z" fill="#336b9d" stroke="#336b9d" stroke-width=".8"/><path d="M1314.1 611.6 1321 616 1315.7 620.6 1308.3 616.7Z" fill="#336c9e" stroke="#336c9e" stroke-width=".8"/><path d="M1308.3 616.7 1315.7 620.6 1310.4 625.4 1302.4 621.9Z" fill="#346da0" stroke="#346da0" stroke-width=".8"/><path d="M1302.4 621.9 1310.4 625.4 1305 630.2 1296.5 627.1Z" fill="#346fa2" stroke="#346fa2" stroke-width=".8"/><path d="M1296.5 627.1 1305 630.2 1299.5 635.1 1290.6 632.5Z" fill="#3471a4" stroke="#3471a4" stroke-width=".8"/><path d="M1290.6 632.5 1299.5 635.1 1294 640.1 1284.7 637.9Z" fill="#3573a6" stroke="#3573a6" stroke-width=".8"/><path d="M1284.7 637.9 1294 640.1 1288.5 645.2 1278.7 643.3Z" fill="#3575a8" stroke="#3575a8" stroke-width=".8"/><path d="M1278.7 643.3 1288.5 645.2 1283 650.3 1272.8 648.8Z" fill="#3677ab" stroke="#3677ab" stroke-width=".8"/><path d="M1272.8 648.8 1283 650.3 1277.5 655.4 1266.9 654.4Z" fill="#3679ad" stroke="#3679ad" stroke-width=".8"/><path d="M1266.9 654.4 1277.5 655.4 1272 660.6 1261 660Z" fill="#377baf" stroke="#377baf" stroke-width=".8"/><path d="M1261 660 1272 660.6 1266.5 665.8 1255.1 665.5Z" fill="#377db1" stroke="#377db1" stroke-width=".8"/><path d="M1255.1 665.5 1266.5 665.8 1261 671 1249.4 671.1Z" fill="#377fb3" stroke="#377fb3" stroke-width=".8"/><path d="M1249.4 671.1 1261 671 1255.6 676.2 1243.7 676.7Z" fill="#3780b4" stroke="#3780b4" stroke-width=".8"/><path d="M1243.7 676.7 1255.6 676.2 1250.3 681.4 1238.1 682.3Z" fill="#3880b5" stroke="#3880b5" stroke-width=".8"/><path d="M1238.1 682.3 1250.3 681.4 1245 686.6 1232.6 687.8Z" fill="#3881b5" stroke="#3881b5" stroke-width=".8"/><path d="M1232.6 687.8 1245 686.6 1239.8 691.7 1227.2 693.3Z" fill="#3881b5" stroke="#3881b5" stroke-width=".8"/><path d="M1227.2 693.3 1239.8 691.7 1234.7 696.8 1221.9 698.7Z" fill="#3881b5" stroke="#3881b5" stroke-width=".8"/><path d="M1221.9 698.7 1234.7 696.8 1229.7 701.8 1216.8 704.1Z" fill="#3881b5" stroke="#3881b5" stroke-width=".8"/><path d="M1216.8 704.1 1229.7 701.8 1224.8 706.8 1211.8 709.4Z" fill="#3881b5" stroke="#3881b5" stroke-width=".8"/><path d="M1211.8 709.4 1224.8 706.8 1220.1 711.6 1207 714.5Z" fill="#3883b7" stroke="#3883b7" stroke-width=".8"/><path d="M1207 714.5 1220.1 711.6 1215.5 716.4 1202.4 719.6Z" fill="#3987bc" stroke="#3987bc" stroke-width=".8"/><path d="M1202.4 719.6 1215.5 716.4 1211 721.1 1198 724.5Z" fill="#3a8bc1" stroke="#3a8bc1" stroke-width=".8"/><path d="M1198 724.5 1211 721.1 1206.7 725.6 1193.8 729.3Z" fill="#3a8fc5" stroke="#3a8fc5" stroke-width=".8"/><path d="M1193.8 729.3 1206.7 725.6 1202.6 730.1 1189.8 734Z" fill="#3b92c8" stroke="#3b92c8" stroke-width=".8"/><path d="M1189.8 734 1202.6 730.1 1198.7 734.4 1185.9 738.5Z" fill="#3c94cb" stroke="#3c94cb" stroke-width=".8"/><path d="M1185.9 738.5 1198.7 734.4 1194.9 738.6 1182.4 742.9Z" fill="#3c96cc" stroke="#3c96cc" stroke-width=".8"/><path d="M1182.4 742.9 1194.9 738.6 1191.3 742.6 1179 747.1Z" fill="#3c96cd" stroke="#3c96cd" stroke-width=".8"/><path d="M1179 747.1 1191.3 742.6 1188 746.5 1175.8 751.1Z" fill="#3c96cd" stroke="#3c96cd" stroke-width=".8"/><path d="M1175.8 751.1 1188 746.5 1184.8 750.2 1172.9 754.9Z" fill="#3c96cd" stroke="#3c96cd" stroke-width=".8"/><path d="M1341.2 598.4 1344.9 604.3 1340.6 608.1 1336.3 602.6Z" fill="#336a9c" stroke="#336a9c" stroke-width=".8"/><path d="M1336.3 602.6 1340.6 608.1 1336.1 612.1 1331.3 607Z" fill="#336a9c" stroke="#336a9c" stroke-width=".8"/><path d="M1331.3 607 1336.1 612.1 1331.6 616.1 1326.2 611.4Z" fill="#336a9c" stroke="#336a9c" stroke-width=".8"/><path d="M1326.2 611.4 1331.6 616.1 1326.9 620.2 1321 616Z" fill="#336b9d" stroke="#336b9d" stroke-width=".8"/><path d="M1321 616 1326.9 620.2 1322.2 624.4 1315.7 620.6Z" fill="#336c9e" stroke="#336c9e" stroke-width=".8"/><path d="M1315.7 620.6 1322.2 624.4 1317.3 628.8 1310.4 625.4Z" fill="#346ea0" stroke="#346ea0" stroke-width=".8"/><path d="M1310.4 625.4 1317.3 628.8 1312.4 633.2 1305 630.2Z" fill="#3470a2" stroke="#3470a2" stroke-width=".8"/><path d="M1305 630.2 1312.4 633.2 1307.5 637.6 1299.5 635.1Z" fill="#3572a5" stroke="#3572a5" stroke-width=".8"/><path d="M1299.5 635.1 1307.5 637.6 1302.4 642.2 1294 640.1Z" fill="#3574a7" stroke="#3574a7" stroke-width=".8"/><path d="M1294 640.1 1302.4 642.2 1297.4 646.8 1288.5 645.2Z" fill="#3576aa" stroke="#3576aa" stroke-width=".8"/><path d="M1288.5 645.2 1297.4 646.8 1292.3 651.5 1283 650.3Z" fill="#3679ac" stroke="#3679ac" stroke-width=".8"/><path d="M1283 650.3 1292.3 651.5 1287.1 656.2 1277.5 655.4Z" fill="#367baf" stroke="#367baf" stroke-width=".8"/><path d="M1277.5 655.4 1287.1 656.2 1282 661 1272 660.6Z" fill="#377db1" stroke="#377db1" stroke-width=".8"/><path d="M1272 660.6 1282 661 1276.8 665.8 1266.5 665.8Z" fill="#377fb3" stroke="#377fb3" stroke-width=".8"/><path d="M1266.5 665.8 1276.8 665.8 1271.7 670.6 1261 671Z" fill="#3880b5" stroke="#3880b5" stroke-width=".8"/><path d="M1261 671 1271.7 670.6 1266.5 675.4 1255.6 676.2Z" fill="#3882b6" stroke="#3882b6" stroke-width=".8"/><path d="M1255.6 676.2 1266.5 675.4 1261.4 680.2 1250.3 681.4Z" fill="#3883b7" stroke="#3883b7" stroke-width=".8"/><path d="M1250.3 681.4 1261.4 680.2 1256.4 685 1245 686.6Z" fill="#3883b8" stroke="#3883b8" stroke-width=".8"/><path d="M1245 686.6 1256.4 685 1251.3 689.8 1239.8 691.7Z" fill="#3883b8" stroke="#3883b8" stroke-width=".8"/><path d="M1239.8 691.7 1251.3 689.8 1246.4 694.5 1234.7 696.8Z" fill="#3883b8" stroke="#3883b8" stroke-width=".8"/><path d="M1234.7 696.8 1246.4 694.5 1241.5 699.2 1229.7 701.8Z" fill="#3883b8" stroke="#3883b8" stroke-width=".8"/><path d="M1229.7 701.8 1241.5 699.2 1236.7 703.8 1224.8 706.8Z" fill="#3883b8" stroke="#3883b8" stroke-width=".8"/><path d="M1224.8 706.8 1236.7 703.8 1232 708.4 1220.1 711.6Z" fill="#3883b8" stroke="#3883b8" stroke-width=".8"/><path d="M1220.1 711.6 1232 708.4 1227.4 712.9 1215.5 716.4Z" fill="#3987bc" stroke="#3987bc" stroke-width=".8"/><path d="M1215.5 716.4 1227.4 712.9 1223 717.3 1211 721.1Z" fill="#3a8bc1" stroke="#3a8bc1" stroke-width=".8"/><path d="M1211 721.1 1223 717.3 1218.6 721.6 1206.7 725.6Z" fill="#3a8fc5" stroke="#3a8fc5" stroke-width=".8"/><path d="M1206.7 725.6 1218.6 721.6 1214.4 725.8 1202.6 730.1Z" fill="#3b92c8" stroke="#3b92c8" stroke-width=".8"/><path d="M1202.6 730.1 1214.4 725.8 1210.3 729.9 1198.7 734.4Z" fill="#3c94cb" stroke="#3c94cb" stroke-width=".8"/><path d="M1198.7 734.4 1210.3 729.9 1206.4 733.9 1194.9 738.6Z" fill="#3c96cc" stroke="#3c96cc" stroke-width=".8"/><path d="M1194.9 738.6 1206.4 733.9 1202.6 737.7 1191.3 742.6Z" fill="#3c96cd" stroke="#3c96cd" stroke-width=".8"/><path d="M1191.3 742.6 1202.6 737.7 1199 741.5 1188 746.5Z" fill="#3c96cd" stroke="#3c96cd" stroke-width=".8"/><path d="M1188 746.5 1199 741.5 1195.6 745 1184.8 750.2Z" fill="#3c96cd" stroke="#3c96cd" stroke-width=".8"/><path d="M1344.9 604.3 1347.8 610.2 1344 613.6 1340.6 608.1Z" fill="#336a9c" stroke="#336a9c" stroke-width=".8"/><path d="M1340.6 608.1 1344 613.6 1340.1 617.1 1336.1 612.1Z" fill="#336a9c" stroke="#336a9c" stroke-width=".8"/><path d="M1336.1 612.1 1340.1 617.1 1336 620.7 1331.6 616.1Z" fill="#336a9c" stroke="#336a9c" stroke-width=".8"/><path d="M1331.6 616.1 1336 620.7 1331.9 624.4 1326.9 620.2Z" fill="#336b9d" stroke="#336b9d" stroke-width=".8"/><path d="M1326.9 620.2 1331.9 624.4 1327.7 628.2 1322.2 624.4Z" fill="#336c9f" stroke="#336c9f" stroke-width=".8"/><path d="M1322.2 624.4 1327.7 628.2 1323.4 632 1317.3 628.8Z" fill="#346ea0" stroke="#346ea0" stroke-width=".8"/><path d="M1317.3 628.8 1323.4 632 1319 636 1312.4 633.2Z" fill="#3470a3" stroke="#3470a3" stroke-width=".8"/><path d="M1312.4 633.2 1319 636 1314.5 640 1307.5 637.6Z" fill="#3572a5" stroke="#3572a5" stroke-width=".8"/><path d="M1307.5 637.6 1314.5 640 1309.9 644.1 1302.4 642.2Z" fill="#3575a8" stroke="#3575a8" stroke-width=".8"/><path d="M1302.4 642.2 1309.9 644.1 1305.3 648.3 1297.4 646.8Z" fill="#3677aa" stroke="#3677aa" stroke-width=".8"/><path d="M1297.4 646.8 1305.3 648.3 1300.6 652.6 1292.3 651.5Z" fill="#3679ad" stroke="#3679ad" stroke-width=".8"/><path d="M1292.3 651.5 1300.6 652.6 1295.8 656.8 1287.1 656.2Z" fill="#377cb0" stroke="#377cb0" stroke-width=".8"/><path d="M1287.1 656.2 1295.8 656.8 1291 661.2 1282 661Z" fill="#377eb2" stroke="#377eb2" stroke-width=".8"/><path d="M1282 661 1291 661.2 1286.2 665.5 1276.8 665.8Z" fill="#3880b5" stroke="#3880b5" stroke-width=".8"/><path d="M1276.8 665.8 1286.2 665.5 1281.3 669.9 1271.7 670.6Z" fill="#3882b7" stroke="#3882b7" stroke-width=".8"/><path d="M1271.7 670.6 1281.3 669.9 1276.5 674.3 1266.5 675.4Z" fill="#3883b8" stroke="#3883b8" stroke-width=".8"/><path d="M1266.5 675.4 1276.5 674.3 1271.6 678.8 1261.4 680.2Z" fill="#3884b9" stroke="#3884b9" stroke-width=".8"/><path d="M1261.4 680.2 1271.6 678.8 1266.7 683.2 1256.4 685Z" fill="#3884b9" stroke="#3884b9" stroke-width=".8"/><path d="M1256.4 685 1266.7 683.2 1261.9 687.6 1251.3 689.8Z" fill="#3884b9" stroke="#3884b9" stroke-width=".8"/><path d="M1251.3 689.8 1261.9 687.6 1257.1 692 1246.4 694.5Z" fill="#3884b9" stroke="#3884b9" stroke-width=".8"/><path d="M1246.4 694.5 1257.1 692 1252.3 696.3 1241.5 699.2Z" fill="#3884b9" stroke="#3884b9" stroke-width=".8"/><path d="M1241.5 699.2 1252.3 696.3 1247.6 700.6 1236.7 703.8Z" fill="#3884b9" stroke="#3884b9" stroke-width=".8"/><path d="M1236.7 703.8 1247.6 700.6 1243 704.9 1232 708.4Z" fill="#3884b9" stroke="#3884b9" stroke-width=".8"/><path d="M1232 708.4 1243 704.9 1238.4 709.1 1227.4 712.9Z" fill="#3987bc" stroke="#3987bc" stroke-width=".8"/><path d="M1227.4 712.9 1238.4 709.1 1233.9 713.2 1223 717.3Z" fill="#3a8bc1" stroke="#3a8bc1" stroke-width=".8"/><path d="M1223 717.3 1233.9 713.2 1229.5 717.3 1218.6 721.6Z" fill="#3a8fc5" stroke="#3a8fc5" stroke-width=".8"/><path d="M1218.6 721.6 1229.5 717.3 1225.1 721.3 1214.4 725.8Z" fill="#3b92c8" stroke="#3b92c8" stroke-width=".8"/><path d="M1214.4 725.8 1225.1 721.3 1220.9 725.1 1210.3 729.9Z" fill="#3c94cb" stroke="#3c94cb" stroke-width=".8"/><path d="M1210.3 729.9 1220.9 725.1 1216.9 728.9 1206.4 733.9Z" fill="#3c96cc" stroke="#3c96cc" stroke-width=".8"/><path d="M1206.4 733.9 1216.9 728.9 1212.9 732.6 1202.6 737.7Z" fill="#3c96cd" stroke="#3c96cd" stroke-width=".8"/><path d="M1202.6 737.7 1212.9 732.6 1209.1 736.1 1199 741.5Z" fill="#3c96cd" stroke="#3c96cd" stroke-width=".8"/><path d="M1199 741.5 1209.1 736.1 1205.4 739.6 1195.6 745Z" fill="#3c96cd" stroke="#3c96cd" stroke-width=".8"/><path d="M1347.8 610.2 1349.8 616.1 1346.5 619.1 1344 613.6Z" fill="#336a9c" stroke="#336a9c" stroke-width=".8"/><path d="M1344 613.6 1346.5 619.1 1343.2 622.1 1340.1 617.1Z" fill="#336a9c" stroke="#336a9c" stroke-width=".8"/><path d="M1340.1 617.1 1343.2 622.1 1339.7 625.2 1336 620.7Z" fill="#336a9c" stroke="#336a9c" stroke-width=".8"/><path d="M1336 620.7 1339.7 625.2 1336.1 628.5 1331.9 624.4Z" fill="#336b9d" stroke="#336b9d" stroke-width=".8"/><path d="M1331.9 624.4 1336.1 628.5 1332.4 631.8 1327.7 628.2Z" fill="#336c9f" stroke="#336c9f" stroke-width=".8"/><path d="M1327.7 628.2 1332.4 631.8 1328.5 635.2 1323.4 632Z" fill="#346ea1" stroke="#346ea1" stroke-width=".8"/><path d="M1323.4 632 1328.5 635.2 1324.6 638.7 1319 636Z" fill="#3470a3" stroke="#3470a3" stroke-width=".8"/><path d="M1319 636 1324.6 638.7 1320.6 642.3 1314.5 640Z" fill="#3572a5" stroke="#3572a5" stroke-width=".8"/><path d="M1314.5 640 1320.6 642.3 1316.4 646 1309.9 644.1Z" fill="#3575a8" stroke="#3575a8" stroke-width=".8"/><path d="M1309.9 644.1 1316.4 646 1312.2 649.7 1305.3 648.3Z" fill="#3677ab" stroke="#3677ab" stroke-width=".8"/><path d="M1305.3 648.3 1312.2 649.7 1307.9 653.5 1300.6 652.6Z" fill="#367aae" stroke="#367aae" stroke-width=".8"/><path d="M1300.6 652.6 1307.9 653.5 1303.5 657.3 1295.8 656.8Z" fill="#377cb0" stroke="#377cb0" stroke-width=".8"/><path d="M1295.8 656.8 1303.5 657.3 1299.1 661.2 1291 661.2Z" fill="#377fb3" stroke="#377fb3" stroke-width=".8"/><path d="M1291 661.2 1299.1 661.2 1294.6 665.2 1286.2 665.5Z" fill="#3881b5" stroke="#3881b5" stroke-width=".8"/><path d="M1286.2 665.5 1294.6 665.2 1290 669.1 1281.3 669.9Z" fill="#3883b7" stroke="#3883b7" stroke-width=".8"/><path d="M1281.3 669.9 1290 669.1 1285.4 673.1 1276.5 674.3Z" fill="#3884b9" stroke="#3884b9" stroke-width=".8"/><path d="M1276.5 674.3 1285.4 673.1 1280.8 677.1 1271.6 678.8Z" fill="#3885ba" stroke="#3885ba" stroke-width=".8"/><path d="M1271.6 678.8 1280.8 677.1 1276.1 681.2 1266.7 683.2Z" fill="#3985ba" stroke="#3985ba" stroke-width=".8"/><path d="M1266.7 683.2 1276.1 681.2 1271.5 685.2 1261.9 687.6Z" fill="#3985ba" stroke="#3985ba" stroke-width=".8"/><path d="M1261.9 687.6 1271.5 685.2 1266.8 689.2 1257.1 692Z" fill="#3985ba" stroke="#3985ba" stroke-width=".8"/><path d="M1257.1 692 1266.8 689.2 1262.1 693.2 1252.3 696.3Z" fill="#3985ba" stroke="#3985ba" stroke-width=".8"/><path d="M1252.3 696.3 1262.1 693.2 1257.5 697.2 1247.6 700.6Z" fill="#3985ba" stroke="#3985ba" stroke-width=".8"/><path d="M1247.6 700.6 1257.5 697.2 1252.9 701.2 1243 704.9Z" fill="#3985ba" stroke="#3985ba" stroke-width=".8"/><path d="M1243 704.9 1252.9 701.2 1248.3 705.1 1238.4 709.1Z" fill="#3987bc" stroke="#3987bc" stroke-width=".8"/><path d="M1238.4 709.1 1248.3 705.1 1243.8 708.9 1233.9 713.2Z" fill="#3a8bc1" stroke="#3a8bc1" stroke-width=".8"/><path d="M1233.9 713.2 1243.8 708.9 1239.3 712.7 1229.5 717.3Z" fill="#3a8fc5" stroke="#3a8fc5" stroke-width=".8"/><path d="M1229.5 717.3 1239.3 712.7 1234.9 716.5 1225.1 721.3Z" fill="#3b92c8" stroke="#3b92c8" stroke-width=".8"/><path d="M1225.1 721.3 1234.9 716.5 1230.6 720.1 1220.9 725.1Z" fill="#3c94cb" stroke="#3c94cb" stroke-width=".8"/><path d="M1220.9 725.1 1230.6 720.1 1226.3 723.7 1216.9 728.9Z" fill="#3c96cc" stroke="#3c96cc" stroke-width=".8"/><path d="M1216.9 728.9 1226.3 723.7 1222.2 727.2 1212.9 732.6Z" fill="#3c96cd" stroke="#3c96cd" stroke-width=".8"/><path d="M1212.9 732.6 1222.2 727.2 1218.1 730.6 1209.1 736.1Z" fill="#3c96cd" stroke="#3c96cd" stroke-width=".8"/><path d="M1209.1 736.1 1218.1 730.6 1214.1 733.9 1205.4 739.6Z" fill="#3c96cd" stroke="#3c96cd" stroke-width=".8"/><path d="M1349.8 616.1 1351 622 1348.3 624.5 1346.5 619.1Z" fill="#336a9c" stroke="#336a9c" stroke-width=".8"/><path d="M1346.5 619.1 1348.3 624.5 1345.5 627.1 1343.2 622.1Z" fill="#336a9c" stroke="#336a9c" stroke-width=".8"/><path d="M1343.2 622.1 1345.5 627.1 1342.5 629.7 1339.7 625.2Z" fill="#336a9c" stroke="#336a9c" stroke-width=".8"/><path d="M1339.7 625.2 1342.5 629.7 1339.4 632.5 1336.1 628.5Z" fill="#336b9d" stroke="#336b9d" stroke-width=".8"/><path d="M1336.1 628.5 1339.4 632.5 1336.2 635.4 1332.4 631.8Z" fill="#336c9f" stroke="#336c9f" stroke-width=".8"/><path d="M1332.4 631.8 1336.2 635.4 1332.9 638.3 1328.5 635.2Z" fill="#346ea1" stroke="#346ea1" stroke-width=".8"/><path d="M1328.5 635.2 1332.9 638.3 1329.4 641.3 1324.6 638.7Z" fill="#3470a3" stroke="#3470a3" stroke-width=".8"/><path d="M1324.6 638.7 1329.4 641.3 1325.8 644.5 1320.6 642.3Z" fill="#3572a5" stroke="#3572a5" stroke-width=".8"/><path d="M1320.6 642.3 1325.8 644.5 1322.1 647.7 1316.4 646Z" fill="#3575a8" stroke="#3575a8" stroke-width=".8"/><path d="M1316.4 646 1322.1 647.7 1318.3 650.9 1312.2 649.7Z" fill="#3677ab" stroke="#3677ab" stroke-width=".8"/><path d="M1312.2 649.7 1318.3 650.9 1314.4 654.3 1307.9 653.5Z" fill="#367aae" stroke="#367aae" stroke-width=".8"/><path d="M1307.9 653.5 1314.4 654.3 1310.4 657.7 1303.5 657.3Z" fill="#377cb0" stroke="#377cb0" stroke-width=".8"/><path d="M1303.5 657.3 1310.4 657.7 1306.3 661.1 1299.1 661.2Z" fill="#377fb3" stroke="#377fb3" stroke-width=".8"/><path d="M1299.1 661.2 1306.3 661.1 1302.1 664.6 1294.6 665.2Z" fill="#3881b5" stroke="#3881b5" stroke-width=".8"/><path d="M1294.6 665.2 1302.1 664.6 1297.8 668.2 1290 669.1Z" fill="#3883b7" stroke="#3883b7" stroke-width=".8"/><path d="M1290 669.1 1297.8 668.2 1293.5 671.7 1285.4 673.1Z" fill="#3884b9" stroke="#3884b9" stroke-width=".8"/><path d="M1285.4 673.1 1293.5 671.7 1289.1 675.4 1280.8 677.1Z" fill="#3985ba" stroke="#3985ba" stroke-width=".8"/><path d="M1280.8 677.1 1289.1 675.4 1284.6 679 1276.1 681.2Z" fill="#3985ba" stroke="#3985ba" stroke-width=".8"/><path d="M1276.1 681.2 1284.6 679 1280.1 682.7 1271.5 685.2Z" fill="#3985ba" stroke="#3985ba" stroke-width=".8"/><path d="M1271.5 685.2 1280.1 682.7 1275.6 686.3 1266.8 689.2Z" fill="#3985ba" stroke="#3985ba" stroke-width=".8"/><path d="M1266.8 689.2 1275.6 686.3 1271 690 1262.1 693.2Z" fill="#3985ba" stroke="#3985ba" stroke-width=".8"/><path d="M1262.1 693.2 1271 690 1266.4 693.6 1257.5 697.2Z" fill="#3985ba" stroke="#3985ba" stroke-width=".8"/><path d="M1257.5 697.2 1266.4 693.6 1261.9 697.3 1252.9 701.2Z" fill="#3985ba" stroke="#3985ba" stroke-width=".8"/><path d="M1252.9 701.2 1261.9 697.3 1257.3 700.9 1248.3 705.1Z" fill="#3987bc" stroke="#3987bc" stroke-width=".8"/><path d="M1248.3 705.1 1257.3 700.9 1252.7 704.4 1243.8 708.9Z" fill="#3a8bc1" stroke="#3a8bc1" stroke-width=".8"/><path d="M1243.8 708.9 1252.7 704.4 1248.2 708 1239.3 712.7Z" fill="#3a8fc5" stroke="#3a8fc5" stroke-width=".8"/><path d="M1239.3 712.7 1248.2 708 1243.7 711.5 1234.9 716.5Z" fill="#3b92c8" stroke="#3b92c8" stroke-width=".8"/><path d="M1234.9 716.5 1243.7 711.5 1239.2 714.9 1230.6 720.1Z" fill="#3c94cb" stroke="#3c94cb" stroke-width=".8"/><path d="M1230.6 720.1 1239.2 714.9 1234.8 718.3 1226.3 723.7Z" fill="#3c96cc" stroke="#3c96cc" stroke-width=".8"/><path d="M1226.3 723.7 1234.8 718.3 1230.5 721.6 1222.2 727.2Z" fill="#3c96cd" stroke="#3c96cd" stroke-width=".8"/><path d="M1222.2 727.2 1230.5 721.6 1226.2 724.8 1218.1 730.6Z" fill="#3c96cd" stroke="#3c96cd" stroke-width=".8"/><path d="M1218.1 730.6 1226.2 724.8 1222 728 1214.1 733.9Z" fill="#3c96cd" stroke="#3c96cd" stroke-width=".8"/><path d="M597.9 412 614.5 416.2 630.9 420.4 647.1 424.4 663.2 428.5 679.1 432.5 694.9 436.4 710.5 440.3 725.9 444.2 741.2 448 756.3 451.8 771.3 455.5 786.1 459.2 800.8 462.8 815.2 466.4 829.6 470 843.7 473.5 857.8 477 871.6 480.4 885.3 483.8 898.8 487.2 912.1 490.5 925.3 493.8 938.3 497.1 951.1 500.3 963.8 503.5 976.3 506.6 988.6 509.7 1000.7 512.8 1012.6 515.8 1024.4 518.8 1036 521.8 1047.3 524.7 1058.5 527.6 1069.5 530.5 1080.3 533.4 1090.9 536.2 1101.3 538.9 1111.5 541.7 1121.5 544.4 1131.3 547.1 1140.8 549.7 1150.2 552.4 1159.3 555 1168.2 557.5 1176.9 560.1 1185.4 562.6 1193.6 565.1 1201.7 567.5 1209.5 570 1217 572.4 1224.4 574.7 1231.5 577.1 1238.4 579.4 1245 581.7 1251.4 584 1257.6 586.2 1263.6 588.5 1269.3 590.7 1274.8 592.9 1280 595 1285 597.2 1289.8 599.3 1294.4 601.4 1298.8 603.5 1302.9 605.5 1306.8 607.6 1310.5 609.6 1314 611.6 1317.2 613.6 1320.3 615.5 1323.2 617.5 1325.8 619.4 1328.3 621.3 1330.6 623.2 1332.7 625.1 1334.6 627 1336.4 628.8 1338 630.7 1339.4 632.5 M529.7 438.5 546.5 443.1 563.1 447.6 579.5 452.1 595.9 456.5 612 460.9 628.1 465.2 643.9 469.5 659.7 473.7 675.3 477.9 690.7 482 706 486 721.2 490 736.2 494 751.1 497.9 765.8 501.7 780.4 505.5 794.8 509.2 809.1 512.9 823.3 516.5 837.3 520.1 851.1 523.7 864.8 527.1 878.3 530.6 891.7 533.9 904.9 537.3 918 540.5 930.9 543.7 943.6 546.9 956.2 550 968.6 553.1 980.8 556.1 992.8 559.1 1004.7 562 1016.4 564.8 1027.9 567.6 1039.2 570.4 1050.4 573.1 1061.3 575.7 1072.1 578.3 1082.6 580.9 1093 583.4 1103.1 585.8 1113.1 588.2 1122.8 590.5 1132.4 592.8 1141.7 595.1 1150.8 597.2 1159.7 599.4 1168.4 601.5 1176.9 603.5 1185.1 605.5 1193.1 607.4 1200.9 609.3 1208.4 611.2 1215.8 613 1222.9 614.7 1229.8 616.4 1236.4 618.1 1242.8 619.7 1249 621.3 1255 622.8 1260.7 624.3 1266.2 625.7 1271.5 627.1 1276.6 628.5 1281.4 629.9 1286.1 631.2 1290.5 632.4 1294.7 633.7 1298.7 634.9 1302.4 636 1306 637.2 1309.4 638.3 1312.6 639.4 1315.6 640.4 1318.4 641.5 1321.1 642.5 1323.5 643.5 1325.8 644.5 M467.9 465 484.9 470.1 501.7 475 518.3 479.9 534.9 484.8 551.2 489.5 567.5 494.3 583.6 498.9 599.6 503.5 615.5 508 631.2 512.5 646.8 516.9 662.3 521.2 677.6 525.5 692.8 529.7 707.9 533.9 722.8 537.9 737.6 542 752.3 545.9 766.8 549.8 781.2 553.6 795.5 557.4 809.6 561.1 823.6 564.7 837.4 568.3 851.1 571.7 864.6 575.2 878 578.5 891.3 581.8 904.4 585 917.3 588.1 930.1 591.2 942.7 594.2 955.1 597.1 967.4 600 979.5 602.8 991.5 605.5 1003.2 608.1 1014.8 610.7 1026.2 613.2 1037.5 615.6 1048.5 617.9 1059.3 620.2 1070 622.4 1080.4 624.5 1090.7 626.5 1100.7 628.5 1110.6 630.4 1120.2 632.2 1129.7 634 1138.9 635.6 1147.9 637.3 1156.7 638.8 1165.2 640.2 1173.6 641.6 1181.7 643 1189.6 644.2 1197.2 645.4 1204.7 646.5 1211.9 647.6 1218.9 648.5 1225.7 649.5 1232.2 650.3 1238.5 651.1 1244.6 651.9 1250.5 652.6 1256.1 653.2 1261.5 653.8 1266.7 654.4 1271.7 654.9 1276.5 655.3 1281 655.7 1285.4 656.1 1289.5 656.4 1293.5 656.7 1297.2 656.9 1300.8 657.2 1304.2 657.3 1307.4 657.5 1310.4 657.7 M414.3 491.3 431.4 496.8 448.4 502.2 465.2 507.5 482 512.8 498.6 518 515.1 523.1 531.4 528.1 547.6 533.1 563.7 538 579.7 542.8 595.6 547.6 611.3 552.3 626.9 556.9 642.4 561.4 657.7 565.9 673 570.3 688.1 574.6 703.1 578.8 717.9 582.9 732.7 587 747.3 591 761.7 594.9 776.1 598.7 790.3 602.4 804.4 606.1 818.3 609.7 832.1 613.2 845.7 616.6 859.3 619.9 872.6 623.1 885.8 626.2 898.9 629.3 911.8 632.2 924.6 635.1 937.2 637.8 949.6 640.5 961.9 643.1 974 645.6 985.9 648 997.6 650.2 1009.2 652.4 1020.6 654.5 1031.8 656.5 1042.8 658.4 1053.6 660.2 1064.2 662 1074.7 663.6 1084.9 665.1 1094.9 666.5 1104.7 667.8 1114.3 669.1 1123.7 670.2 1132.8 671.2 1141.8 672.2 1150.5 673.1 1159 673.8 1167.3 674.5 1175.4 675.1 1183.2 675.6 1190.8 676 1198.2 676.4 1205.3 676.7 1212.3 676.8 1219 677 1225.4 677 1231.7 677 1237.7 676.9 1243.5 676.7 1249.1 676.5 1254.5 676.3 1259.6 675.9 1264.5 675.6 1269.3 675.1 1273.8 674.7 1278.1 674.1 1282.2 673.6 1286.2 673 1289.9 672.4 1293.5 671.7 M370.4 516.9 387.8 522.8 405 528.6 422.1 534.4 439 540.1 455.9 545.7 472.6 551.2 489.1 556.6 505.6 561.9 521.9 567.2 538.1 572.4 554.2 577.5 570.2 582.5 586.1 587.4 601.8 592.3 617.4 597 632.9 601.7 648.3 606.2 663.5 610.7 678.7 615.1 693.7 619.4 708.5 623.6 723.3 627.7 737.9 631.7 752.4 635.6 766.8 639.4 781 643.1 795.1 646.7 809.1 650.2 822.9 653.6 836.6 656.9 850.2 660.1 863.5 663.2 876.8 666.1 889.9 669 902.8 671.7 915.6 674.3 928.2 676.9 940.7 679.3 953 681.5 965.1 683.7 977 685.8 988.8 687.7 1000.3 689.5 1011.7 691.2 1022.9 692.8 1033.9 694.2 1044.7 695.6 1055.3 696.8 1065.7 697.9 1075.9 698.9 1085.9 699.8 1095.7 700.6 1105.2 701.2 1114.6 701.8 1123.7 702.2 1132.6 702.5 1141.3 702.7 1149.7 702.8 1158 702.8 1166 702.7 1173.7 702.6 1181.3 702.3 1188.6 701.9 1195.7 701.4 1202.5 700.9 1209.2 700.3 1215.6 699.5 1221.7 698.8 1227.7 697.9 1233.4 697 1238.9 696 1244.2 695 1249.3 693.9 1254.2 692.7 1258.9 691.5 1263.3 690.3 1267.6 689 1271.7 687.7 1275.6 686.3 M338.1 541.4 355.7 547.7 373.2 553.9 390.5 560 407.8 566.1 424.8 572.1 441.8 577.9 458.6 583.7 475.3 589.4 491.9 595 508.3 600.5 524.7 605.9 540.9 611.2 556.9 616.4 572.9 621.5 588.7 626.5 604.4 631.4 620 636.2 635.5 640.9 650.8 645.4 666 649.9 681.1 654.3 696.1 658.6 710.9 662.7 725.6 666.8 740.2 670.7 754.6 674.5 768.9 678.2 783.1 681.7 797.1 685.2 811 688.5 824.8 691.7 838.3 694.8 851.8 697.8 865.1 700.6 878.2 703.3 891.2 705.8 904 708.3 916.6 710.6 929 712.8 941.3 714.8 953.4 716.7 965.4 718.5 977.1 720.1 988.7 721.6 1000 722.9 1011.2 724.2 1022.2 725.3 1033 726.2 1043.5 727 1053.9 727.7 1064 728.3 1074 728.7 1083.7 729 1093.2 729.2 1102.4 729.2 1111.5 729.1 1120.3 728.9 1128.9 728.6 1137.3 728.2 1145.4 727.6 1153.3 727 1161 726.2 1168.5 725.4 1175.7 724.4 1182.7 723.3 1189.4 722.2 1196 720.9 1202.3 719.6 1208.3 718.2 1214.2 716.7 1219.8 715.2 1225.2 713.6 1230.4 711.9 1235.4 710.2 1240.2 708.4 1244.8 706.6 1249.1 704.7 1253.3 702.8 1257.3 700.9 M318.9 564.2 336.8 570.9 354.6 577.5 372.2 583.9 389.7 590.3 407.1 596.6 424.3 602.7 441.4 608.8 458.3 614.8 475.1 620.6 491.8 626.4 508.3 632 524.8 637.5 541 643 557.2 648.3 573.2 653.5 589.1 658.5 604.8 663.5 620.4 668.4 635.9 673.1 651.3 677.7 666.5 682.2 681.6 686.6 696.5 690.8 711.3 694.9 726 698.9 740.5 702.8 754.9 706.5 769.1 710.1 783.2 713.6 797.2 716.9 811 720.1 824.6 723.1 838 726 851.3 728.8 864.5 731.4 877.5 733.9 890.3 736.2 902.9 738.4 915.3 740.5 927.6 742.4 939.7 744.1 951.6 745.7 963.3 747.1 974.8 748.4 986.1 749.6 997.2 750.6 1008.1 751.5 1018.8 752.2 1029.3 752.7 1039.6 753.2 1049.6 753.4 1059.4 753.6 1069.1 753.6 1078.5 753.4 1087.6 753.1 1096.6 752.7 1105.3 752.2 1113.7 751.5 1122 750.7 1130 749.8 1137.8 748.8 1145.3 747.6 1152.7 746.4 1159.7 745 1166.6 743.5 1173.2 742 1179.6 740.3 1185.8 738.6 1191.7 736.7 1197.4 734.8 1202.9 732.8 1208.2 730.8 1213.2 728.7 1218.1 726.5 1222.7 724.3 1227.1 722 1231.4 719.7 1235.4 717.3 1239.2 714.9 M671 386 655.7 391.3 640.5 396.6 625.5 402 610.7 407.3 596.1 412.7 581.7 418.1 567.5 423.5 553.5 429 539.8 434.4 526.4 439.8 513.2 445.3 500.3 450.7 487.7 456.2 475.4 461.6 463.5 467.1 451.9 472.5 440.7 477.9 429.8 483.3 419.3 488.6 409.3 494 399.7 499.3 390.5 504.5 381.7 509.8 373.4 515 365.6 520.1 358.3 525.2 351.5 530.2 345.2 535.2 339.5 540.1 334.3 545 329.6 549.8 325.6 554.5 322.1 559.1 319.2 563.7 316.9 568.1 315.2 572.5 314.2 576.8 313.8 580.9 314 585 M824.4 421.9 809.8 427.9 795.3 433.9 780.9 439.9 766.7 446 752.7 452.1 738.9 458.2 725.2 464.4 711.8 470.6 698.5 476.8 685.6 483 672.9 489.3 660.4 495.5 648.3 501.8 636.5 508 625 514.3 613.8 520.5 603 526.8 592.6 533 582.6 539.2 573 545.3 563.8 551.4 555 557.5 546.7 563.5 538.9 569.5 531.6 575.4 524.8 581.3 518.5 587.1 512.7 592.8 507.5 598.4 502.8 603.9 498.7 609.3 495.2 614.7 492.3 619.9 490 625 488.3 630 487.2 634.9 486.7 639.6 486.8 644.2 487.6 648.7 M960.6 454.6 947 461 933.5 467.5 920.2 474 906.9 480.6 893.8 487.2 880.8 493.9 868 500.6 855.4 507.3 843 514.1 830.8 520.9 818.8 527.8 807.1 534.6 795.6 541.5 784.4 548.4 773.6 555.3 763.1 562.1 752.9 569 743 575.8 733.6 582.6 724.5 589.4 715.9 596.1 707.6 602.7 699.9 609.4 692.5 615.9 685.7 622.4 679.3 628.7 673.5 635 668.2 641.2 663.4 647.3 659.1 653.3 655.4 659.1 652.3 664.9 649.7 670.4 647.7 675.9 646.3 681.2 645.4 686.3 645.2 691.3 645.5 696.1 646.5 700.7 M1078.8 484.9 1066.6 491.5 1054.5 498.2 1042.4 504.9 1030.4 511.7 1018.5 518.6 1006.8 525.5 995.1 532.5 983.6 539.5 972.3 546.6 961.2 553.7 950.2 560.9 939.5 568.1 929 575.3 918.7 582.5 908.7 589.7 899 596.9 889.7 604.1 880.6 611.2 871.9 618.3 863.5 625.4 855.5 632.5 847.9 639.4 840.7 646.3 833.9 653.2 827.6 659.9 821.7 666.5 816.3 673 811.3 679.5 806.9 685.7 802.9 691.9 799.4 697.9 796.5 703.7 794.1 709.4 792.2 715 790.8 720.3 789.9 725.5 789.6 730.5 789.8 735.2 790.6 739.8 M1177.2 513.6 1166.7 520 1156.2 526.5 1145.8 533.1 1135.4 539.8 1125.1 546.6 1114.9 553.4 1104.7 560.3 1094.7 567.3 1084.7 574.3 1074.9 581.4 1065.3 588.5 1055.8 595.6 1046.5 602.7 1037.4 609.9 1028.6 617.1 1019.9 624.2 1011.5 631.4 1003.4 638.5 995.6 645.6 988.1 652.6 980.9 659.6 974 666.5 967.4 673.4 961.3 680.1 955.5 686.8 950 693.3 945 699.8 940.4 706.1 936.2 712.3 932.4 718.3 929.1 724.2 926.2 729.9 923.7 735.4 921.7 740.8 920.1 745.9 919 750.9 918.4 755.7 918.1 760.3 918.4 764.6 M1253.9 541.3 1245.3 547.2 1236.8 553.2 1228.3 559.2 1219.8 565.4 1211.3 571.6 1202.8 578 1194.4 584.4 1186 590.8 1177.8 597.3 1169.6 603.9 1161.5 610.5 1153.5 617.1 1145.6 623.8 1137.9 630.4 1130.3 637.1 1122.9 643.8 1115.7 650.5 1108.7 657.1 1101.9 663.7 1095.3 670.3 1089 676.8 1082.9 683.3 1077.1 689.7 1071.6 696 1066.3 702.2 1061.4 708.3 1056.7 714.3 1052.4 720.2 1048.4 725.9 1044.7 731.5 1041.4 736.9 1038.4 742.2 1035.7 747.4 1033.4 752.3 1031.5 757.1 1029.9 761.7 1028.6 766.1 1027.7 770.3 1027.2 774.3 M1307.6 568.5 1301.2 573.4 1294.8 578.5 1288.3 583.6 1281.8 588.8 1275.3 594.1 1268.8 599.4 1262.2 604.9 1255.7 610.3 1249.2 615.9 1242.8 621.5 1236.4 627.1 1230 632.8 1223.7 638.5 1217.5 644.2 1211.4 650 1205.3 655.7 1199.4 661.4 1193.6 667.2 1187.9 672.9 1182.4 678.6 1177 684.2 1171.7 689.8 1166.7 695.3 1161.8 700.8 1157.1 706.2 1152.6 711.5 1148.3 716.7 1144.2 721.8 1140.3 726.8 1136.6 731.7 1133.2 736.5 1130 741.1 1127.1 745.6 1124.3 750 1121.9 754.2 1119.7 758.2 1117.7 762.1 1115.9 765.9 1114.4 769.4 M1339 595.4 1334.7 599 1330.4 602.8 1326 606.5 1321.6 610.4 1317.1 614.3 1312.5 618.3 1307.9 622.4 1303.3 626.5 1298.7 630.7 1294 634.9 1289.3 639.1 1284.6 643.5 1279.9 647.8 1275.2 652.2 1270.6 656.6 1265.9 661 1261.2 665.4 1256.6 669.8 1252 674.3 1247.5 678.7 1243 683.1 1238.6 687.5 1234.3 691.9 1230 696.2 1225.8 700.5 1221.7 704.7 1217.7 708.9 1213.8 713 1210 717 1206.3 721 1202.8 724.9 1199.3 728.7 1196 732.4 1192.8 736.1 1189.8 739.6 1186.9 743 1184.1 746.3 1181.5 749.5 1179 752.6 M1351 622 1348.8 624 1346.5 626.1 1344.1 628.3 1341.7 630.5 1339.1 632.8 1336.5 635.1 1333.7 637.5 1330.9 640 1328 642.5 1325.1 645.1 1322 647.7 1318.9 650.4 1315.7 653.1 1312.5 655.9 1309.1 658.7 1305.7 661.6 1302.3 664.4 1298.8 667.3 1295.3 670.3 1291.7 673.2 1288 676.2 1284.4 679.2 1280.7 682.2 1277 685.2 1273.2 688.2 1269.5 691.2 1265.7 694.2 1262 697.2 1258.2 700.1 1254.5 703.1 1250.8 706 1247 708.9 1243.4 711.7 1239.7 714.6 1236.1 717.3 1232.5 720.1 1228.9 722.8 1225.4 725.4 1222 728" fill="none" stroke="#12a6ac" stroke-width="1" shape-rendering="crispEdges"/><path d="M744 403.1 730.1 408.9 716.3 414.8 702.6 420.8 689.1 426.8 675.7 432.8 662.5 438.8 649.5 444.9 636.7 451 624 457 611.5 463.1 599.3 469.2 587.3 475.3 575.4 481.3 563.9 487.4 552.5 493.4 541.5 499.4 530.7 505.3 520.2 511.2 510 517.1 500.1 522.8 490.5 528.6 481.3 534.2 472.5 539.8 464 545.3 455.9 550.7 448.3 556 441 561.2 434.2 566.3 427.9 571.4 422 576.3 416.7 581 411.8 585.7 407.5 590.3 403.8 594.7 400.6 599 397.9 603.2 395.9 607.2 394.5 611.1 393.7 614.9 M797 415.5 783.1 421.5 769.4 427.6 755.8 433.8 742.3 439.9 729 446.1 715.9 452.4 702.9 458.7 690.1 464.9 677.5 471.2 665.1 477.5 652.8 483.8 640.8 490.1 629.1 496.4 617.5 502.7 606.3 508.9 595.3 515.2 584.5 521.3 574.1 527.5 563.9 533.5 554.1 539.6 544.6 545.5 535.5 551.4 526.8 557.2 518.4 563 510.4 568.6 502.9 574.1 495.7 579.6 489.1 584.9 482.9 590.2 477.2 595.3 472 600.3 467.3 605.1 463.1 609.9 459.5 614.5 456.5 619 454 623.3 452.2 627.5 450.9 631.6 450.3 635.5 M851 428.2 837.3 434.4 823.7 440.7 810.3 447 797 453.4 783.8 459.8 770.8 466.3 758 472.7 745.3 479.2 732.9 485.8 720.6 492.3 708.5 498.8 696.6 505.3 684.9 511.9 673.5 518.4 662.4 524.8 651.5 531.3 640.9 537.7 630.5 544.1 620.5 550.4 610.8 556.7 601.5 562.9 592.5 569 583.9 575.1 575.7 581.1 567.9 586.9 560.5 592.7 553.5 598.4 547.1 604 541 609.4 535.5 614.7 530.5 619.9 526 625 522 630 518.6 634.8 515.8 639.4 513.5 643.9 511.8 648.3 510.8 652.5 510.3 656.6 M907 441.6 893.7 448 880.4 454.5 867.2 461 854.2 467.5 841.3 474.1 828.6 480.8 816 487.5 803.6 494.2 791.3 500.9 779.3 507.7 767.4 514.4 755.7 521.2 744.3 527.9 733.1 534.7 722.2 541.4 711.5 548.1 701.1 554.8 691 561.4 681.2 568 671.7 574.5 662.6 581 653.8 587.3 645.5 593.6 637.5 599.9 629.9 606 622.7 612 616 617.9 609.8 623.7 604 629.4 598.7 634.9 593.9 640.4 589.6 645.6 585.9 650.8 582.7 655.8 580.1 660.6 578 665.3 576.6 669.8 575.7 674.2 575.4 678.4 M969 456.7 956 463.2 943.1 469.8 930.3 476.5 917.6 483.2 905.1 490 892.6 496.8 880.3 503.7 868.2 510.6 856.2 517.5 844.4 524.4 832.8 531.4 821.4 538.4 810.2 545.3 799.2 552.3 788.5 559.2 778.1 566.1 767.9 573 758 579.9 748.4 586.6 739.1 593.4 730.2 600.1 721.7 606.7 713.5 613.2 705.7 619.6 698.3 625.9 691.3 632.2 684.7 638.3 678.7 644.3 673.1 650.1 667.9 655.9 663.3 661.5 659.2 666.9 655.6 672.2 652.5 677.3 650 682.3 648.1 687.1 646.7 691.8 645.9 696.2 645.7 700.5 M1030 472.1 1017.6 478.7 1005.3 485.5 993.1 492.2 981 499.1 969 506 957.1 513 945.3 520 933.7 527 922.2 534.1 910.9 541.2 899.8 548.4 888.8 555.5 878.1 562.7 867.6 569.8 857.3 577 847.3 584.1 837.5 591.1 828 598.2 818.9 605.2 810 612.1 801.5 619 793.3 625.8 785.5 632.5 778 639.2 771 645.7 764.3 652.1 758.1 658.4 752.4 664.6 747.1 670.7 742.2 676.6 737.9 682.3 734 688 730.7 693.4 727.9 698.7 725.6 703.8 723.9 708.7 722.7 713.5 722 718 721.9 722.4 M1096.1 489.6 1084.5 496.3 1073 503.1 1061.5 509.9 1050.1 516.8 1038.8 523.8 1027.6 530.8 1016.5 537.9 1005.6 545 994.7 552.2 984.1 559.4 973.5 566.6 963.2 573.8 953 581.1 943.1 588.3 933.3 595.6 923.8 602.8 914.6 610 905.6 617.2 896.9 624.3 888.5 631.3 880.4 638.3 872.7 645.3 865.3 652.1 858.2 658.9 851.5 665.5 845.3 672 839.4 678.5 833.9 684.7 828.9 690.9 824.3 696.9 820.2 702.7 816.6 708.4 813.4 714 810.7 719.3 808.6 724.5 806.9 729.4 805.8 734.2 805.1 738.8 805 743.2 M1167 510.4 1156.6 516.9 1146.2 523.6 1135.8 530.3 1125.5 537.1 1115.3 543.9 1105.1 550.8 1095 557.8 1085 564.9 1075.1 571.9 1065.3 579.1 1055.7 586.2 1046.2 593.4 1036.9 600.6 1027.7 607.8 1018.8 615 1010.1 622.2 1001.5 629.3 993.3 636.4 985.2 643.5 977.5 650.5 970 657.5 962.8 664.4 955.9 671.2 949.4 678 943.2 684.6 937.3 691.1 931.8 697.5 926.7 703.7 922 709.8 917.7 715.8 913.8 721.6 910.3 727.3 907.3 732.7 904.7 738 902.6 743.1 900.9 748 899.6 752.8 898.9 757.3 898.5 761.6 M1240 535.7 1231.2 541.8 1222.5 547.9 1213.7 554.2 1205 560.6 1196.2 567 1187.6 573.5 1179 580.1 1170.4 586.7 1161.9 593.4 1153.5 600.1 1145.2 606.8 1137 613.6 1129 620.4 1121.1 627.2 1113.3 634 1105.7 640.8 1098.2 647.6 1090.9 654.4 1083.9 661.1 1077 667.8 1070.4 674.4 1064.1 681 1057.9 687.4 1052.1 693.8 1046.5 700.1 1041.2 706.3 1036.2 712.4 1031.6 718.4 1027.2 724.2 1023.2 729.9 1019.5 735.4 1016.2 740.8 1013.2 746 1010.6 751 1008.3 755.9 1006.4 760.5 1004.9 765 1003.8 769.3 1003 773.3 M1315 573.4 1309.1 578.2 1303.2 583.2 1297.3 588.1 1291.4 593.2 1285.5 598.3 1279.5 603.5 1273.6 608.8 1267.7 614.1 1261.8 619.4 1255.9 624.8 1250.1 630.2 1244.3 635.6 1238.6 641.1 1232.9 646.6 1227.3 652 1221.8 657.5 1216.4 663 1211 668.4 1205.8 673.9 1200.6 679.3 1195.6 684.6 1190.7 690 1186 695.2 1181.4 700.4 1176.9 705.5 1172.6 710.6 1168.5 715.5 1164.5 720.4 1160.7 725.2 1157.2 729.8 1153.8 734.4 1150.6 738.8 1147.6 743.1 1144.8 747.3 1142.2 751.3 1139.8 755.2 1137.7 758.9 1135.7 762.5 1134 765.9" fill="none" stroke="#f05a4c" stroke-width="1" shape-rendering="crispEdges"/><path d="M671 386 681.8 388.5 692.6 391 703.3 393.5 713.9 396 724.5 398.5 734.9 400.9 745.3 403.4 755.6 405.8 765.8 408.2 776 410.5 786.1 412.9 796.1 415.3 806 417.6 815.8 419.9 825.6 422.2 835.3 424.5 844.9 426.8 854.4 429 863.9 431.3 873.3 433.5 882.6 435.7 891.8 437.9 900.9 440.1 910 442.3 919 444.5 927.9 446.6 936.7 448.8 945.5 450.9 954.1 453 962.7 455.2 971.2 457.3 979.7 459.3 988 461.4 996.3 463.5 1004.4 465.6 1012.5 467.6 1020.5 469.6 1028.5 471.7 1036.3 473.7 1044 475.7 1051.7 477.7 1059.3 479.7 1066.8 481.7 1074.2 483.7 1081.5 485.7 1088.7 487.6 1095.8 489.6 1102.9 491.5 1109.8 493.5 1116.7 495.4 1123.5 497.4 1130.1 499.3 1136.7 501.2 1143.2 503.1 1149.6 505 1155.9 507 1162.1 508.9 1168.2 510.7 1174.2 512.6 1180.1 514.5 1185.9 516.4 1191.6 518.3 1197.2 520.2 1202.7 522 1208.1 523.9 1213.4 525.8 1218.7 527.6 1223.8 529.5 1228.8 531.3 1233.7 533.2 1238.5 535 1243.1 536.9 1247.7 538.7 1252.2 540.6 1256.6 542.4 1260.9 544.3 1265 546.1 1269.1 547.9 1273.1 549.8 1276.9 551.6 1280.7 553.4 1284.3 555.3 1287.9 557.1 1291.3 558.9 1294.6 560.7 1297.9 562.6 1301 564.4 1304 566.2 1306.9 568 1309.7 569.8 1312.5 571.7 1315.1 573.5 1317.6 575.3 1320 577.1 1322.3 578.9 1324.5 580.7 1326.7 582.5 1328.7 584.4 1330.6 586.2 1332.4 588 1334.2 589.8 1335.8 591.6 1337.4 593.4 1338.8 595.2 1340.2 597 1341.5 598.8 1342.7 600.6 1343.8 602.4 1344.9 604.2 1345.8 606 1346.7 607.8 1347.5 609.6 1348.2 611.3 1348.8 613.1 1349.4 614.9 1349.9 616.7 1350.3 618.5 1350.7 620.2 1351 622" fill="none" stroke="#00ffff" stroke-width="3.8" shape-rendering="crispEdges"/><path d="M304 512 315.2 515.9 326.4 519.7 337.5 523.5 348.6 527.3 359.7 531 370.7 534.7 381.7 538.4 392.7 542 403.6 545.6 414.5 549.2 425.3 552.8 436.1 556.3 446.9 559.7 457.6 563.2 468.3 566.6 479 570 489.6 573.3 500.2 576.6 510.8 579.9 521.3 583.1 531.9 586.3 542.3 589.5 552.8 592.6 563.2 595.7 573.6 598.7 583.9 601.8 594.2 604.7 604.5 607.7 614.7 610.6 624.9 613.4 635.1 616.2 645.3 619 655.4 621.7 665.4 624.4 675.5 627 685.5 629.6 695.5 632.2 705.4 634.7 715.3 637.2 725.2 639.6 735 642 744.8 644.3 754.5 646.6 764.2 648.8 773.9 651 783.5 653.1 793.1 655.2 802.7 657.2 812.2 659.2 821.6 661.2 831 663 840.4 664.9 849.7 666.7 859 668.4 868.2 670.1 877.4 671.7 886.5 673.2 895.5 674.7 904.6 676.2 913.5 677.6 922.4 678.9 931.2 680.2 940 681.5 948.7 682.6 957.4 683.8 966 684.8 974.5 685.8 982.9 686.8 991.3 687.7 999.6 688.5 1007.9 689.3 1016 690 1024.1 690.7 1032.2 691.3 1040.1 691.9 1048 692.4 1055.8 692.8 1063.5 693.2 1071.1 693.5 1078.6 693.8 1086.1 694 1093.4 694.2 1100.7 694.3 1107.9 694.4 1115 694.4 1122 694.3 1128.9 694.3 1135.8 694.1 1142.5 693.9 1149.1 693.7 1155.7 693.4 1162.1 693.1 1168.4 692.7 1174.7 692.3 1180.8 691.8 1186.9 691.3 1192.8 690.8 1198.7 690.2 1204.4 689.5 1210 688.9 1215.6 688.2 1221 687.4 1226.3 686.7 1231.6 685.9 1236.7 685.1 1241.7 684.2 1246.6 683.3 1251.5 682.4 1256.2 681.5 1260.8 680.5 1265.3 679.5 1269.8 678.5 1274.1 677.5 1278.3 676.4 1282.4 675.4 1286.5 674.3 1290.4 673.2 1294.3 672.1 1298 671" fill="none" stroke="#00ffff" stroke-width="3.8" shape-rendering="crispEdges"/><path d="M314 585 326.2 589.6 338.2 594.2 350.3 598.7 362.2 603.2 374.1 607.7 385.9 612 397.6 616.4 409.3 620.7 420.9 624.9 432.4 629.1 443.8 633.2 455.2 637.3 466.6 641.3 477.8 645.3 489 649.2 500.1 653.1 511.2 656.9 522.2 660.6 533.1 664.4 544 668 554.8 671.6 565.5 675.2 576.2 678.6 586.8 682.1 597.3 685.5 607.8 688.8 618.2 692.1 628.5 695.3 638.8 698.4 649 701.5 659.2 704.5 669.2 707.5 679.3 710.4 689.2 713.3 699.1 716.1 708.9 718.8 718.6 721.5 728.3 724.1 737.9 726.7 747.4 729.2 756.9 731.6 766.3 733.9 775.6 736.2 784.9 738.5 794 740.6 803.1 742.7 812.2 744.8 821.1 746.8 830 748.7 838.8 750.5 847.5 752.3 856.1 754 864.7 755.6 873.2 757.2 881.6 758.7 889.9 760.1 898.2 761.5 906.3 762.8 914.4 764 922.4 765.2 930.3 766.3 938.1 767.3 945.8 768.2 953.4 769.1 961 769.9 968.4 770.7 975.8 771.4 983.1 772 990.2 772.5 997.3 773 1004.3 773.4 1011.2 773.7 1018 774 1024.7 774.2 1031.3 774.3 1037.8 774.4 1044.2 774.4 1050.5 774.4 1056.7 774.2 1062.8 774 1068.8 773.8 1074.7 773.5 1080.5 773.1 1086.2 772.7 1091.8 772.2 1097.3 771.6 1102.7 771 1108 770.3 1113.2 769.6 1118.2 768.8 1123.2 768 1128.1 767.1 1132.9 766.2 1137.5 765.2 1142.1 764.1 1146.5 763 1150.9 761.9 1155.1 760.7 1159.3 759.5 1163.3 758.2 1167.3 756.9 1171.1 755.6 1174.9 754.2 1178.5 752.8 1182.1 751.3 1185.5 749.8 1188.9 748.3 1192.2 746.7 1195.3 745.2 1198.4 743.5 1201.4 741.9 1204.3 740.2 1207.1 738.5 1209.8 736.8 1212.4 735.1 1214.9 733.4 1217.4 731.6 1219.7 729.8 1222 728" fill="none" stroke="#00ffff" stroke-width="3.8" shape-rendering="crispEdges"/><path d="M671 386 1189 507 1339 541 1351 622" fill="none" stroke="#a8a8a8" stroke-width="2.8" shape-rendering="crispEdges"/><path d="M304 512 878 710 1112 727 1298 671" fill="none" stroke="#a8a8a8" stroke-width="2.8" shape-rendering="crispEdges"/><path d="M314 585 877 800 1108 820 1222 728" fill="none" stroke="#a8a8a8" stroke-width="2.8" shape-rendering="crispEdges"/><path d="M527 353 L670 385 M1339 541 L1400 553" fill="none" stroke="#000" stroke-width="1.2" stroke-dasharray="1.2 7"/><path d="M518 355 L527 364 M527 355 L518 364" stroke="#000" stroke-width="1.6" shape-rendering="crispEdges"/><rect x="669" y="383" width="6" height="6" fill="#00ffff"/><rect x="1187" y="504" width="6" height="6" fill="#00ffff"/><rect x="1337" y="538" width="6" height="6" fill="#00ffff"/><rect x="1349" y="619" width="6" height="6" fill="#00ffff"/><rect x="302" y="509" width="6" height="6" fill="#ffff00"/><rect x="876" y="707" width="6" height="6" fill="#ffff00"/><rect x="1110" y="724" width="6" height="6" fill="#ffff00"/><rect x="1296" y="668" width="6" height="6" fill="#ffff00"/><rect x="312" y="582" width="6" height="6" fill="#ffff00"/><rect x="875" y="797" width="6" height="6" fill="#ffff00"/><rect x="1106" y="817" width="6" height="6" fill="#ffff00"/><rect x="1220" y="725" width="6" height="6" fill="#ffff00"/><g fill="#00ffff" font-family="Liberation Mono" font-weight="bold" font-size="12.5px" letter-spacing="-0.3"><text x="1181" y="527">c25</text><text x="929" y="692">c26</text><text x="915" y="777">c27</text></g></svg><div id="status" class="a">
<span style="left:3px">For Help, press F1.</span>
<i style="left:560px"></i><span style="left:564px">L:0</span>
<i style="left:880px"></i><i style="left:992px"></i><span style="left:997px">Lat 23.0</span>
<i style="left:1080px"></i><span style="left:1085px">Lon 53.0</span>
<i style="left:1168px"></i><span style="left:1173px">Radius 2.01</span>
<i style="left:1295px"></i><span style="left:1300px">Tilt 0.0</span>
</div>
<div class="a" style="left:0;top:1048px;width:1400px;height:1px;background:#303030"></div>
<div class="a" style="left:0;top:1049px;width:106px;height:1px;background:#c8d8ea"></div>
<div class="a" style="left:106px;top:1049px;width:1294px;height:1px;background:#fff"></div>
</body></html>
